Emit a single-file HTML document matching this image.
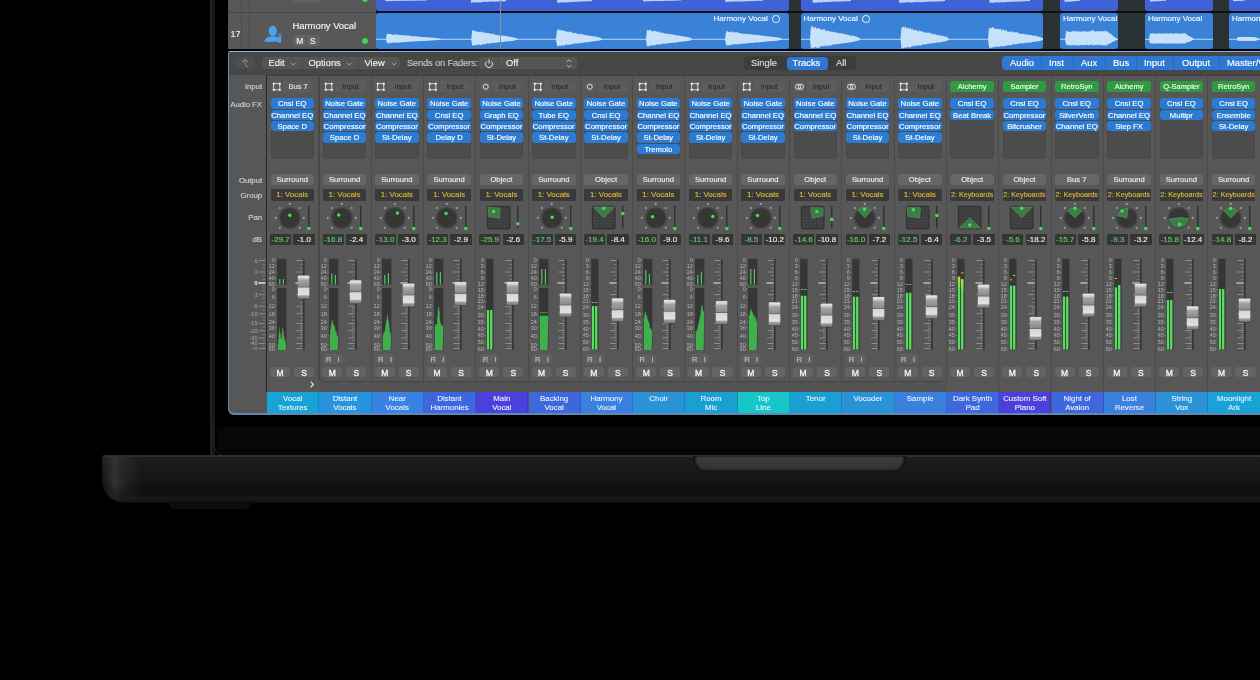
<!DOCTYPE html><html><head><meta charset="utf-8"><style>
html,body{margin:0;padding:0;background:#000;width:1260px;height:680px;overflow:hidden;position:relative;font-family:"Liberation Sans", sans-serif;}
div{box-sizing:border-box;}
.t{position:absolute;color:#fff;white-space:nowrap;line-height:1;-webkit-text-stroke:0.15px currentColor;}
.fx{position:absolute;height:10.3px;background:#2c7bd3;border-radius:3px;color:#fff;font-size:7.7px;line-height:11.6px;text-align:center;white-space:nowrap;overflow:hidden;-webkit-text-stroke:0.15px #fff;}
.btn{position:absolute;background:#5e5e5e;border-radius:3px;color:#f0f0f0;text-align:center;white-space:nowrap;-webkit-text-stroke:0.15px currentColor;}

.wrap{position:absolute;left:0;top:0;width:1260px;height:680px;will-change:transform;overflow:hidden;}</style></head><body><div class="wrap">
<div style="position:absolute;left:210.3px;top:0px;width:5.2px;height:456px;background:linear-gradient(90deg,#262626 0,#222 1px,#1a1a1a 2px,#161616 100%);border-bottom-left-radius:3px;"></div>
<svg style="position:absolute;left:205px;top:420px" width="30" height="40" viewBox="205 420 30 40"><path d="M213.3 420 V438 Q213.6 454 222 455.2" fill="none" stroke="#262626" stroke-width="0.9"/></svg>
<div style="position:absolute;left:217.3px;top:427.3px;width:1043px;height:27.5px;background:#070707;border-bottom-left-radius:8px;"></div>
<div style="position:absolute;left:102px;top:455px;width:1158px;height:48px;background:linear-gradient(180deg,#1a1a1a 0px,#404040 1px,#1d1d1d 2.2px,#1a1a1a 12px,#151515 24px,#0f0f0f 34px,#111111 40px,#181818 43.5px,#131313 46px,#080808 48.5px);border-top-left-radius:3px;border-bottom-left-radius:22px;"></div>
<div style="position:absolute;left:102px;top:456px;width:50px;height:46px;background:linear-gradient(90deg,rgba(40,40,40,0.0) 0px,rgba(52,52,52,0.95) 13px,rgba(44,44,44,0.7) 21px,rgba(30,30,30,0) 40px);border-bottom-left-radius:22px;-webkit-mask-image:linear-gradient(180deg,#000 60%,rgba(0,0,0,0.3) 100%);"></div>
<div style="position:absolute;left:692.5px;top:455.5px;width:213px;height:15.5px;background:linear-gradient(180deg,#464646 0,#3c3c3c 25%,#303030 100%);border-bottom-left-radius:11px;border-bottom-right-radius:11px;box-shadow:inset 2.5px 0 2.5px rgba(0,0,0,0.75),inset -2.5px 0 2.5px rgba(0,0,0,0.75);"></div>
<div style="position:absolute;left:169px;top:503px;width:82px;height:6px;background:#0c0c0c;border-bottom-left-radius:6px;border-bottom-right-radius:6px;"></div>
<div style="position:absolute;left:228px;top:0px;width:1032px;height:50px;background:#000;"></div>
<div style="position:absolute;left:228px;top:0px;width:148px;height:49px;background:#585858;"></div>
<div style="position:absolute;left:228px;top:12px;width:148px;height:1px;background:#474747;"></div>
<div style="position:absolute;left:241px;top:0px;width:1px;height:49px;background:#4c4c4c;"></div>
<div style="position:absolute;left:249px;top:0px;width:1px;height:49px;background:#4c4c4c;"></div>
<div class="t" style="left:230.5px;top:29.5px;font-size:9px;color:#eee;">17</div>
<svg style="position:absolute;left:260px;top:22px" width="25" height="24" viewBox="260 22 25 24"><ellipse cx="272.8" cy="31" rx="4.1" ry="5.4" fill="#48a3f3"/><path d="M264.3 41.8 C264.8 38.3 267.5 36.6 271 36.4 L274.6 36.4 C276.5 36.6 277.8 37.2 278.6 38 L278.6 41.8 Z" fill="#48a3f3"/><rect x="278.4" y="36.2" width="2.8" height="6.8" rx="1.2" fill="#48a3f3"/><circle cx="279.8" cy="35.3" r="1.5" fill="none" stroke="#48a3f3" stroke-width="0.9"/></svg>
<div class="t" style="left:292.5px;top:20.5px;font-size:9.4px;color:#f2f2f2;">Harmony Vocal</div>
<div style="position:absolute;left:293px;top:-8px;width:27px;height:11px;background:#606060;border-radius:3px;"></div>
<div style="position:absolute;left:362px;top:-4.5px;width:6px;height:6px;border-radius:50%;background:#3ed250;"></div>
<div style="position:absolute;left:293px;top:35px;width:27px;height:11px;background:#636363;border-radius:3px;"></div>
<div style="position:absolute;left:306px;top:35px;width:1px;height:11px;background:#565656;"></div>
<div class="t" style="left:296.2px;top:37px;font-size:8.4px;color:#f2f2f2;">M</div>
<div class="t" style="left:310px;top:37px;font-size:8.4px;color:#f2f2f2;">S</div>
<div style="position:absolute;left:362px;top:38px;width:6px;height:6px;border-radius:50%;background:#3ed250;"></div>
<div style="position:absolute;left:376px;top:0px;width:884px;height:49px;background:#2b3234;"></div>
<div style="position:absolute;left:376px;top:0px;width:413px;height:11px;background:#3f62d6;border-radius:0 0 3px 3px;"></div>
<div style="position:absolute;left:376px;top:13.2px;width:413px;height:35.6px;background:#3a82d7;border-radius:3px;"></div>
<div style="position:absolute;left:801px;top:0px;width:242px;height:11px;background:#3f62d6;border-radius:0 0 3px 3px;"></div>
<div style="position:absolute;left:801px;top:13.2px;width:242px;height:35.6px;background:#3a82d7;border-radius:3px;"></div>
<div style="position:absolute;left:1060px;top:0px;width:58px;height:11px;background:#3f62d6;border-radius:0 0 3px 3px;"></div>
<div style="position:absolute;left:1060px;top:13.2px;width:58px;height:35.6px;background:#3a82d7;border-radius:3px;"></div>
<div style="position:absolute;left:1145px;top:0px;width:68px;height:11px;background:#3f62d6;border-radius:0 0 3px 3px;"></div>
<div style="position:absolute;left:1145px;top:13.2px;width:68px;height:35.6px;background:#3a82d7;border-radius:3px;"></div>
<div style="position:absolute;left:1229px;top:0px;width:41px;height:11px;background:#3f62d6;border-radius:0 0 3px 3px;"></div>
<div style="position:absolute;left:1229px;top:13.2px;width:41px;height:35.6px;background:#3a82d7;border-radius:3px;"></div>
<div style="position:absolute;left:376px;top:11px;width:884px;height:2.2px;background:#111;"></div>
<svg style="position:absolute;left:0;top:0" width="1260" height="50"><rect x="376" y="38.8" width="413" height="0.9" fill="#c8e1fb"/><rect x="801" y="38.8" width="242" height="0.9" fill="#c8e1fb"/><rect x="1060" y="38.8" width="58" height="0.9" fill="#c8e1fb"/><rect x="1145" y="38.8" width="68" height="0.9" fill="#c8e1fb"/><rect x="1229" y="38.8" width="41" height="0.9" fill="#c8e1fb"/><polygon points="385.90,39.30 386.40,36.57 386.90,34.15 387.40,33.60 387.90,34.33 388.40,33.49 388.91,33.63 389.41,34.06 389.91,34.36 390.41,33.63 390.91,34.69 391.41,33.70 391.91,34.57 392.41,34.82 392.91,34.42 393.41,34.69 393.91,34.75 394.42,34.72 394.92,34.19 395.42,34.45 395.92,34.13 396.42,35.08 396.92,34.52 397.42,34.35 397.92,34.51 398.42,35.08 398.92,34.56 399.42,34.97 399.93,35.47 400.43,34.79 400.93,35.42 401.43,34.98 401.93,35.32 402.43,35.25 402.93,35.28 403.43,35.35 403.93,35.79 404.43,35.02 404.93,35.57 405.44,35.52 405.94,35.34 406.44,35.31 406.94,35.64 407.44,35.63 407.94,35.92 408.44,35.43 408.94,35.61 409.44,35.57 409.94,35.68 410.44,35.91 410.95,36.32 411.45,35.99 411.95,36.08 412.45,36.22 412.95,36.14 413.45,36.13 413.95,36.57 414.45,36.50 414.95,36.09 415.45,36.17 415.95,36.57 416.46,36.34 416.96,36.79 417.46,36.37 417.96,36.81 418.46,36.70 418.96,36.85 419.46,36.88 419.96,36.61 420.46,36.87 420.96,37.07 421.46,36.89 421.97,37.09 422.47,36.92 422.97,36.91 423.47,37.25 423.97,37.22 424.47,37.25 424.97,37.03 425.47,37.29 425.97,37.06 426.47,37.37 426.97,37.33 427.48,37.40 427.98,37.55 428.48,37.20 428.98,37.52 429.48,37.56 429.98,37.42 430.48,37.66 430.98,37.46 431.48,37.53 431.98,37.66 432.48,37.61 432.99,37.71 433.49,37.86 433.99,37.96 434.49,37.94 434.99,38.08 435.49,38.08 435.99,38.12 436.49,38.02 436.99,38.26 437.49,38.13 437.99,38.35 438.50,38.35 439.00,38.38 439.50,38.49 440.00,38.67 440.50,38.85 441.00,38.99 441.00,39.53 440.50,39.66 440.00,39.80 439.50,39.86 439.00,39.88 438.50,40.01 437.99,39.97 437.49,40.11 436.99,40.07 436.49,40.05 435.99,40.26 435.49,40.22 434.99,40.29 434.49,40.23 433.99,40.37 433.49,40.33 432.99,40.40 432.48,40.55 431.98,40.37 431.48,40.61 430.98,40.40 430.48,40.41 429.98,40.56 429.48,40.74 428.98,40.75 428.48,40.78 427.98,40.64 427.48,40.77 426.97,40.78 426.47,40.83 425.97,40.82 425.47,41.00 424.97,40.88 424.47,40.97 423.97,41.00 423.47,40.78 422.97,41.10 422.47,40.90 421.97,41.19 421.46,40.94 420.96,41.05 420.46,41.11 419.96,41.13 419.46,41.09 418.96,41.22 418.46,41.05 417.96,41.32 417.46,41.18 416.96,41.11 416.46,41.16 415.95,41.54 415.45,41.56 414.95,41.58 414.45,41.51 413.95,41.37 413.45,41.51 412.95,41.62 412.45,41.51 411.95,41.61 411.45,41.49 410.95,41.87 410.44,41.67 409.94,41.75 409.44,41.90 408.94,41.98 408.44,41.55 407.94,41.89 407.44,41.87 406.94,42.19 406.44,41.80 405.94,42.01 405.44,42.31 404.93,41.85 404.43,42.14 403.93,42.24 403.43,41.85 402.93,42.11 402.43,42.39 401.93,42.21 401.43,42.39 400.93,42.35 400.43,42.29 399.93,42.20 399.42,42.47 398.92,42.69 398.42,42.54 397.92,42.64 397.42,42.49 396.92,42.74 396.42,42.49 395.92,42.92 395.42,42.45 394.92,42.77 394.42,42.39 393.91,42.76 393.41,42.62 392.91,42.86 392.41,42.68 391.91,42.87 391.41,42.88 390.91,43.04 390.41,42.65 389.91,43.46 389.41,43.31 388.91,42.73 388.40,43.14 387.90,42.82 387.40,43.52 386.90,42.97 386.40,41.05 385.90,39.30" fill="#c8e1fb"/><polygon points="471.20,39.30 471.70,34.89 472.21,29.84 472.71,30.27 473.22,30.50 473.72,30.64 474.23,31.02 474.73,30.58 475.23,30.27 475.74,31.28 476.24,32.11 476.75,31.44 477.25,31.68 477.76,31.52 478.26,32.11 478.77,32.04 479.27,31.83 479.77,31.65 480.28,31.39 480.78,31.74 481.29,31.79 481.79,32.52 482.30,31.68 482.80,32.09 483.30,32.62 483.81,32.67 484.31,32.74 484.82,33.04 485.32,32.34 485.83,32.90 486.33,32.77 486.83,33.55 487.34,32.98 487.84,32.79 488.35,32.88 488.85,32.91 489.36,33.58 489.86,33.48 490.37,33.98 490.87,33.81 491.37,33.76 491.88,33.61 492.38,33.60 492.89,33.87 493.39,34.06 493.90,34.61 494.40,34.82 494.90,34.08 495.41,34.85 495.91,34.70 496.42,35.17 496.92,35.10 497.43,35.26 497.93,35.39 498.43,35.46 498.94,34.78 499.44,35.44 499.95,35.33 500.45,34.87 500.96,35.78 501.46,35.35 501.97,35.85 502.47,35.99 502.97,35.46 503.48,35.43 503.98,35.54 504.49,35.92 504.99,35.85 505.50,36.34 506.00,35.86 506.50,36.14 507.01,36.27 507.51,36.05 508.02,36.36 508.52,36.81 509.03,36.80 509.53,36.94 510.03,36.98 510.54,36.83 511.04,36.69 511.55,37.14 512.05,37.22 512.56,37.13 513.06,37.19 513.57,37.42 514.07,37.69 514.57,37.64 515.08,37.66 515.58,38.00 516.09,38.11 516.59,38.22 517.10,38.52 517.60,38.79 517.60,39.72 517.10,39.90 516.59,40.07 516.09,40.16 515.58,40.25 515.08,40.36 514.57,40.41 514.07,40.47 513.57,40.69 513.06,40.67 512.56,40.92 512.05,40.92 511.55,40.93 511.04,41.20 510.54,41.27 510.03,41.19 509.53,41.05 509.03,41.06 508.52,41.34 508.02,41.33 507.51,41.31 507.01,41.31 506.50,41.48 506.00,41.40 505.50,41.61 504.99,41.60 504.49,41.60 503.98,41.92 503.48,42.00 502.97,42.05 502.47,41.93 501.97,41.92 501.46,42.22 500.96,42.03 500.45,41.96 499.95,41.94 499.44,42.41 498.94,42.11 498.43,42.23 497.93,42.61 497.43,42.83 496.92,42.69 496.42,42.51 495.91,42.83 495.41,43.02 494.90,42.58 494.40,42.86 493.90,43.19 493.39,42.77 492.89,42.64 492.38,42.81 491.88,43.32 491.37,42.81 490.87,43.62 490.37,43.04 489.86,43.44 489.36,43.43 488.85,43.67 488.35,43.36 487.84,43.37 487.34,43.33 486.83,43.54 486.33,43.76 485.83,44.26 485.32,43.86 484.82,44.36 484.31,44.37 483.81,44.54 483.30,44.18 482.80,44.45 482.30,43.90 481.79,44.88 481.29,44.74 480.78,44.94 480.28,44.88 479.77,44.23 479.27,45.26 478.77,44.30 478.26,44.22 477.76,44.94 477.25,45.43 476.75,44.78 476.24,44.47 475.74,44.84 475.23,45.27 474.73,45.94 474.23,45.21 473.72,44.96 473.22,45.64 472.71,45.30 472.21,45.97 471.70,42.50 471.20,39.30" fill="#c8e1fb"/><polygon points="556.00,39.30 556.50,34.08 557.00,29.35 557.50,30.77 558.00,30.34 558.50,28.92 559.00,29.36 559.50,29.88 560.00,30.00 560.50,30.33 561.00,30.14 561.50,30.08 562.00,31.07 562.50,30.10 563.00,30.48 563.50,30.60 564.00,31.29 564.50,31.30 565.00,30.62 565.50,32.04 566.00,30.69 566.50,31.38 567.00,31.68 567.50,32.04 568.00,31.75 568.50,31.69 569.00,31.51 569.50,31.91 570.00,31.71 570.50,31.74 571.00,32.14 571.50,32.06 572.00,32.96 572.50,32.22 573.00,33.42 573.50,33.05 574.00,33.30 574.50,32.59 575.00,33.04 575.50,32.99 576.00,32.87 576.50,33.45 577.00,33.79 577.50,33.51 578.00,34.10 578.50,33.67 579.00,34.44 579.50,34.20 580.00,33.60 580.50,34.20 581.00,34.07 581.50,34.25 582.00,33.92 582.50,34.56 583.00,34.85 583.50,34.16 584.00,34.69 584.50,34.90 585.00,35.37 585.50,34.86 586.00,34.95 586.50,34.98 587.00,35.04 587.50,35.73 588.00,35.24 588.50,35.69 589.00,35.48 589.50,35.75 590.00,35.83 590.50,35.96 591.00,35.68 591.50,35.92 592.00,36.19 592.50,35.93 593.00,36.44 593.50,36.18 594.00,36.52 594.50,36.29 595.00,36.37 595.50,36.77 596.00,36.56 596.50,37.02 597.00,36.96 597.50,36.93 598.00,37.34 598.50,37.18 599.00,37.31 599.50,37.72 600.00,37.63 600.50,37.95 601.00,38.14 601.50,38.32 602.00,38.77 602.00,39.77 601.50,39.89 601.00,40.13 600.50,40.29 600.00,40.37 599.50,40.48 599.00,40.59 598.50,40.78 598.00,40.74 597.50,41.02 597.00,40.86 596.50,40.90 596.00,41.10 595.50,41.25 595.00,41.11 594.50,41.29 594.00,41.31 593.50,41.26 593.00,41.48 592.50,41.44 592.00,41.49 591.50,41.82 591.00,41.50 590.50,41.75 590.00,41.93 589.50,41.83 589.00,41.89 588.50,42.03 588.00,42.40 587.50,41.89 587.00,42.39 586.50,42.19 586.00,42.33 585.50,42.10 585.00,42.55 584.50,42.58 584.00,42.23 583.50,42.66 583.00,42.56 582.50,42.94 582.00,42.83 581.50,42.98 581.00,43.02 580.50,43.02 580.00,42.97 579.50,43.52 579.00,43.51 578.50,42.95 578.00,43.23 577.50,42.95 577.00,43.05 576.50,43.97 576.00,44.03 575.50,43.47 575.00,43.25 574.50,43.31 574.00,44.10 573.50,43.54 573.00,44.27 572.50,44.54 572.00,43.63 571.50,44.24 571.00,43.91 570.50,44.37 570.00,44.88 569.50,44.04 569.00,45.06 568.50,45.07 568.00,45.11 567.50,44.81 567.00,44.64 566.50,44.60 566.00,44.84 565.50,44.63 565.00,44.55 564.50,45.70 564.00,45.60 563.50,45.84 563.00,45.86 562.50,45.39 562.00,44.86 561.50,45.70 561.00,45.04 560.50,46.07 560.00,46.34 559.50,45.37 559.00,45.92 558.50,45.99 558.00,45.71 557.50,46.71 557.00,45.60 556.50,43.26 556.00,39.30" fill="#c8e1fb"/><polygon points="646.00,39.30 646.50,33.41 647.00,29.60 647.50,30.40 648.00,29.57 648.50,30.79 649.00,30.90 649.50,29.77 650.00,29.30 650.50,30.07 651.00,31.15 651.50,30.53 652.00,31.28 652.50,31.68 653.00,31.00 653.50,30.96 654.00,31.10 654.50,31.27 655.00,30.41 655.50,30.80 656.00,31.82 656.50,31.96 657.00,31.24 657.50,31.21 658.00,31.14 658.50,32.80 659.00,31.42 659.50,31.42 660.00,32.94 660.50,31.94 661.00,33.09 661.50,31.86 662.00,33.21 662.50,33.32 663.00,32.40 663.50,32.84 664.00,33.44 664.50,33.61 665.00,33.71 665.50,33.67 666.00,32.75 666.50,33.71 667.00,33.92 667.50,33.19 668.00,34.22 668.50,34.16 669.00,33.57 669.50,34.22 670.00,34.54 670.50,34.44 671.00,34.38 671.50,33.81 672.00,34.32 672.50,34.83 673.00,34.14 673.50,34.91 674.00,34.49 674.50,35.12 675.00,34.53 675.50,35.06 676.00,35.50 676.50,35.39 677.00,35.45 677.50,35.23 678.00,35.67 678.50,35.84 679.00,35.51 679.50,35.55 680.00,35.39 680.50,36.18 681.00,35.93 681.50,36.21 682.00,36.01 682.50,36.24 683.00,35.90 683.50,36.19 684.00,36.64 684.50,36.79 685.00,36.46 685.50,36.96 686.00,36.79 686.50,36.97 687.00,37.20 687.50,36.97 688.00,37.08 688.50,37.18 689.00,37.50 689.50,37.42 690.00,37.76 690.50,37.79 691.00,38.09 691.50,38.39 692.00,38.76 692.00,39.74 691.50,39.96 691.00,40.13 690.50,40.32 690.00,40.50 689.50,40.64 689.00,40.69 688.50,40.86 688.00,40.88 687.50,41.04 687.00,40.99 686.50,41.24 686.00,41.21 685.50,41.24 685.00,41.46 684.50,41.50 684.00,41.17 683.50,41.49 683.00,41.59 682.50,41.77 682.00,41.44 681.50,41.63 681.00,41.52 680.50,41.69 680.00,41.71 679.50,41.81 679.00,42.21 678.50,41.89 678.00,42.25 677.50,42.04 677.00,42.44 676.50,42.43 676.00,42.66 675.50,42.13 675.00,42.54 674.50,42.85 674.00,42.91 673.50,42.42 673.00,42.95 672.50,42.50 672.00,43.11 671.50,42.87 671.00,42.91 670.50,43.09 670.00,43.14 669.50,42.77 669.00,43.04 668.50,43.04 668.00,43.75 667.50,43.51 667.00,43.34 666.50,43.87 666.00,43.86 665.50,43.41 665.00,43.62 664.50,43.90 664.00,44.06 663.50,43.84 663.00,43.62 662.50,43.56 662.00,43.82 661.50,44.44 661.00,44.04 660.50,44.04 660.00,44.51 659.50,44.31 659.00,44.46 658.50,44.23 658.00,45.05 657.50,44.57 657.00,44.65 656.50,44.32 656.00,44.58 655.50,45.25 655.00,45.70 654.50,44.85 654.00,45.42 653.50,45.47 653.00,45.81 652.50,45.38 652.00,45.15 651.50,44.96 651.00,44.97 650.50,45.89 650.00,46.48 649.50,45.21 649.00,46.42 648.50,45.74 648.00,46.56 647.50,46.21 647.00,46.40 646.50,43.14 646.00,39.30" fill="#c8e1fb"/><polygon points="725.00,39.30 725.50,35.41 726.00,32.62 726.50,31.40 727.00,30.71 727.50,31.03 728.00,31.85 728.50,31.88 729.00,32.14 729.50,32.18 730.00,31.79 730.50,30.99 731.00,32.40 731.50,31.71 732.00,30.99 732.50,32.51 733.00,32.54 733.50,31.82 734.00,31.77 734.50,32.68 735.00,32.38 735.50,32.15 736.00,32.55 736.50,32.09 737.00,31.79 737.50,32.79 738.00,32.36 738.50,33.28 739.00,32.98 739.50,32.41 740.00,33.59 740.50,33.08 741.00,33.44 741.50,33.27 742.00,33.72 742.50,33.68 743.00,33.93 743.50,33.59 744.00,34.03 744.50,33.89 745.00,33.61 745.50,33.66 746.00,34.12 746.50,33.94 747.00,33.53 747.50,34.49 748.00,33.64 748.50,34.32 749.00,34.62 749.50,33.59 750.00,34.20 750.50,34.47 751.00,33.96 751.50,34.68 752.00,34.47 752.50,34.76 753.00,34.16 753.50,34.85 754.00,34.92 754.50,34.74 755.00,34.61 755.50,35.08 756.00,34.75 756.50,35.34 757.00,35.12 757.50,35.16 758.00,35.11 758.50,34.84 759.00,35.05 759.50,35.26 760.00,35.14 760.50,35.58 761.00,35.31 761.50,35.97 762.00,35.29 762.50,35.36 763.00,35.71 763.50,35.89 764.00,35.96 764.50,35.58 765.00,35.93 765.50,36.30 766.00,35.94 766.50,36.32 767.00,36.32 767.50,36.50 768.00,36.44 768.50,36.20 769.00,36.15 769.50,36.78 770.00,36.58 770.50,36.51 771.00,36.82 771.50,36.47 772.00,36.87 772.50,37.01 773.00,37.06 773.50,36.98 774.00,37.21 774.50,37.06 775.00,37.30 775.50,37.09 776.00,37.44 776.50,37.29 777.00,37.41 777.50,37.37 778.00,37.58 778.50,37.65 779.00,37.83 779.50,38.00 780.00,38.13 780.50,38.26 781.00,38.30 781.50,38.52 782.00,38.80 782.00,39.70 781.50,39.82 781.00,39.94 780.50,40.01 780.00,40.20 779.50,40.20 779.00,40.32 778.50,40.38 778.00,40.45 777.50,40.57 777.00,40.66 776.50,40.64 776.00,40.74 775.50,40.89 775.00,40.81 774.50,41.00 774.00,40.91 773.50,41.05 773.00,41.18 772.50,41.04 772.00,41.02 771.50,40.95 771.00,41.12 770.50,41.17 770.00,41.14 769.50,41.32 769.00,41.31 768.50,41.49 768.00,41.55 767.50,41.29 767.00,41.63 766.50,41.53 766.00,41.56 765.50,41.68 765.00,41.77 764.50,41.84 764.00,41.68 763.50,41.60 763.00,42.03 762.50,42.14 762.00,42.12 761.50,42.11 761.00,42.07 760.50,41.99 760.00,42.16 759.50,42.41 759.00,42.14 758.50,42.54 758.00,42.36 757.50,42.64 757.00,42.19 756.50,42.67 756.00,42.58 755.50,42.32 755.00,42.33 754.50,42.72 754.00,42.95 753.50,42.94 753.00,42.45 752.50,43.09 752.00,42.89 751.50,42.86 751.00,42.99 750.50,43.15 750.00,42.58 749.50,43.42 749.00,43.16 748.50,42.69 748.00,43.01 747.50,42.99 747.00,43.60 746.50,43.01 746.00,43.71 745.50,43.79 745.00,43.84 744.50,43.27 744.00,43.48 743.50,43.69 743.00,43.39 742.50,43.84 742.00,43.75 741.50,44.02 741.00,43.73 740.50,43.87 740.00,44.22 739.50,43.94 739.00,44.00 738.50,43.76 738.00,44.28 737.50,43.99 737.00,44.37 736.50,44.75 736.00,43.77 735.50,44.32 735.00,44.30 734.50,44.80 734.00,43.98 733.50,44.15 733.00,44.38 732.50,44.56 732.00,45.24 731.50,44.26 731.00,45.31 730.50,44.26 730.00,44.79 729.50,45.20 729.00,45.42 728.50,45.59 728.00,45.05 727.50,45.39 727.00,45.37 726.50,45.70 726.00,44.55 725.50,41.79 725.00,39.30" fill="#c8e1fb"/><polygon points="810.00,39.30 810.50,32.35 811.00,25.84 811.50,27.97 812.00,25.55 812.50,25.81 813.00,27.13 813.50,27.06 814.00,28.60 814.50,28.01 815.00,26.87 815.50,26.92 816.00,27.52 816.50,29.20 817.00,28.79 817.50,27.00 818.00,28.83 818.50,28.34 819.00,29.27 819.50,28.23 820.00,27.89 820.50,29.25 821.00,29.85 821.50,29.61 822.00,30.39 822.50,29.76 823.00,28.83 823.50,30.03 824.00,29.32 824.50,28.88 825.00,29.47 825.50,31.09 826.00,30.49 826.50,31.31 827.00,31.07 827.50,31.14 828.00,29.84 828.50,31.07 829.00,30.84 829.50,31.72 830.00,30.57 830.50,32.05 831.00,32.05 831.50,31.24 832.00,31.82 832.50,31.57 833.00,32.06 833.50,32.56 834.00,31.66 834.50,32.61 835.00,31.40 835.50,32.42 836.00,32.24 836.50,32.55 837.00,33.25 837.50,33.38 838.00,32.30 838.50,32.56 839.00,32.81 839.50,33.64 840.00,33.67 840.50,33.57 841.00,32.74 841.50,32.88 842.00,33.61 842.50,33.72 843.00,33.91 843.50,34.04 844.00,33.45 844.50,34.09 845.00,34.66 845.50,33.98 846.00,34.54 846.50,34.20 847.00,34.42 847.50,34.83 848.00,35.01 848.50,34.63 849.00,35.20 849.50,34.96 850.00,35.65 850.50,35.53 851.00,35.45 851.50,35.40 852.00,35.76 852.50,35.56 853.00,35.97 853.50,35.70 854.00,35.76 854.50,36.21 855.00,36.57 855.50,36.21 856.00,36.51 856.50,36.64 857.00,36.79 857.50,37.03 858.00,37.25 858.50,37.47 859.00,37.95 859.50,38.18 860.00,38.57 860.00,39.89 859.50,40.15 859.00,40.30 858.50,40.64 858.00,40.83 857.50,40.85 857.00,41.03 856.50,40.99 856.00,41.32 855.50,41.32 855.00,41.58 854.50,41.53 854.00,41.84 853.50,41.79 853.00,41.97 852.50,42.05 852.00,42.02 851.50,42.20 851.00,42.29 850.50,42.28 850.00,42.28 849.50,42.38 849.00,42.70 848.50,42.61 848.00,42.53 847.50,42.77 847.00,42.88 846.50,42.91 846.00,43.06 845.50,43.20 845.00,42.79 844.50,42.91 844.00,43.23 843.50,43.61 843.00,42.95 842.50,43.15 842.00,43.62 841.50,43.44 841.00,43.88 840.50,43.58 840.00,44.03 839.50,43.70 839.00,44.13 838.50,44.37 838.00,43.60 837.50,44.05 837.00,44.58 836.50,44.12 836.00,44.64 835.50,44.06 835.00,44.47 834.50,43.98 834.00,45.16 833.50,44.24 833.00,44.34 832.50,44.58 832.00,45.41 831.50,45.49 831.00,44.84 830.50,45.70 830.00,45.67 829.50,45.61 829.00,45.73 828.50,45.24 828.00,46.13 827.50,45.95 827.00,46.32 826.50,45.11 826.00,45.96 825.50,46.35 825.00,46.52 824.50,45.37 824.00,45.50 823.50,46.23 823.00,46.31 822.50,46.12 822.00,46.80 821.50,46.76 821.00,45.97 820.50,46.21 820.00,46.52 819.50,47.74 819.00,47.79 818.50,47.43 818.00,48.02 817.50,47.96 817.00,46.88 816.50,48.15 816.00,46.88 815.50,46.99 815.00,47.11 814.50,48.50 814.00,47.39 813.50,48.17 813.00,47.63 812.50,47.45 812.00,48.50 811.50,48.34 811.00,48.50 810.50,44.46 810.00,39.30" fill="#c8e1fb"/><polygon points="900.50,39.30 901.00,32.60 901.50,27.94 902.00,26.75 902.50,27.15 903.00,27.56 903.50,26.44 904.00,27.10 904.50,28.15 905.00,26.67 905.50,26.81 906.00,26.85 906.50,28.90 907.00,27.23 907.50,29.13 908.00,27.92 908.50,27.28 909.00,29.22 909.50,28.96 910.00,27.80 910.50,28.55 911.00,28.31 911.50,30.19 912.00,29.02 912.50,29.18 913.00,28.67 913.50,30.44 914.00,30.14 914.50,29.89 915.00,30.58 915.50,29.69 916.00,29.65 916.50,30.66 917.00,30.21 917.50,30.80 918.00,31.39 918.50,31.63 919.00,30.44 919.50,30.13 920.00,30.26 920.50,30.94 921.00,31.45 921.50,30.95 922.00,31.63 922.50,31.84 923.00,31.38 923.50,31.92 924.00,32.54 924.50,32.72 925.00,32.45 925.50,32.41 926.00,32.81 926.50,31.98 927.00,33.00 927.50,32.79 928.00,33.04 928.50,32.54 929.00,32.85 929.50,32.60 930.00,33.14 930.50,33.52 931.00,33.11 931.50,33.85 932.00,33.75 932.50,34.37 933.00,34.36 933.50,34.16 934.00,33.69 934.50,34.55 935.00,34.18 935.50,34.10 936.00,34.52 936.50,35.03 937.00,35.08 937.50,34.72 938.00,34.80 938.50,35.41 939.00,35.18 939.50,35.13 940.00,35.68 940.50,35.82 941.00,35.24 941.50,35.38 942.00,35.66 942.50,36.20 943.00,35.76 943.50,35.99 944.00,36.46 944.50,36.72 945.00,36.30 945.50,36.49 946.00,36.71 946.50,36.85 947.00,37.09 947.50,37.67 948.00,37.73 948.50,38.27 949.00,38.54 949.00,39.81 948.50,40.07 948.00,40.41 947.50,40.69 947.00,40.61 946.50,40.87 946.00,40.94 945.50,40.97 945.00,41.16 944.50,41.49 944.00,41.56 943.50,41.52 943.00,41.61 942.50,41.97 942.00,41.97 941.50,41.87 941.00,42.22 940.50,42.13 940.00,42.35 939.50,42.35 939.00,42.56 938.50,42.47 938.00,42.17 937.50,42.27 937.00,42.69 936.50,42.57 936.00,42.72 935.50,43.07 935.00,42.83 934.50,43.33 934.00,42.68 933.50,43.49 933.00,43.38 932.50,43.51 932.00,42.94 931.50,42.96 931.00,43.89 930.50,43.55 930.00,43.46 929.50,43.59 929.00,44.25 928.50,43.68 928.00,43.73 927.50,43.64 927.00,44.06 926.50,44.28 926.00,44.14 925.50,44.79 925.00,44.12 924.50,44.57 924.00,43.99 923.50,44.96 923.00,44.42 922.50,44.28 922.00,45.12 921.50,44.96 921.00,45.44 920.50,45.60 920.00,45.70 919.50,44.93 919.00,45.21 918.50,45.32 918.00,46.20 917.50,45.44 917.00,45.40 916.50,46.34 916.00,45.14 915.50,45.21 915.00,46.56 914.50,45.55 914.00,45.72 913.50,46.52 913.00,46.40 912.50,45.80 912.00,46.22 911.50,46.40 911.00,47.50 910.50,47.13 910.00,46.92 909.50,47.72 909.00,47.34 908.50,47.32 908.00,46.89 907.50,46.81 907.00,47.34 906.50,48.09 906.00,47.33 905.50,48.07 905.00,47.37 904.50,48.02 904.00,48.36 903.50,47.94 903.00,48.50 902.50,48.50 902.00,48.50 901.50,48.50 901.00,43.89 900.50,39.30" fill="#c8e1fb"/><polygon points="988.00,39.30 988.50,33.38 989.00,27.75 989.50,28.25 990.00,28.41 990.50,28.43 991.00,27.60 991.50,28.50 992.00,27.30 992.50,27.54 993.00,26.64 993.50,27.06 994.00,28.96 994.50,28.66 995.00,29.08 995.50,28.07 996.00,28.41 996.50,29.67 997.00,28.31 997.50,29.28 998.00,29.06 998.50,28.39 999.00,29.74 999.50,29.22 1000.00,28.87 1000.50,28.44 1001.00,29.77 1001.50,30.44 1002.00,30.77 1002.50,29.35 1003.00,29.23 1003.50,29.71 1004.00,30.05 1004.50,29.63 1005.00,30.46 1005.50,31.37 1006.00,30.32 1006.50,30.09 1007.00,31.02 1007.50,31.80 1008.00,31.61 1008.50,31.90 1009.00,31.86 1009.50,31.49 1010.00,32.13 1010.50,31.40 1011.00,31.03 1011.50,32.05 1012.00,32.01 1012.50,31.11 1013.00,32.49 1013.50,32.48 1014.00,32.00 1014.50,33.01 1015.00,32.53 1015.50,31.73 1016.00,32.49 1016.50,32.34 1017.00,32.11 1017.50,32.24 1018.00,33.03 1018.50,33.52 1019.00,33.66 1019.50,33.54 1020.00,33.45 1020.50,33.98 1021.00,33.93 1021.50,34.11 1022.00,33.44 1022.50,33.98 1023.00,33.93 1023.50,33.42 1024.00,33.97 1024.50,34.51 1025.00,34.29 1025.50,33.82 1026.00,34.81 1026.50,34.34 1027.00,34.41 1027.50,34.51 1028.00,34.26 1028.50,34.96 1029.00,35.14 1029.50,34.86 1030.00,35.15 1030.50,34.78 1031.00,34.84 1031.50,34.97 1032.00,35.59 1032.50,35.56 1033.00,35.93 1033.50,35.82 1034.00,35.36 1034.50,35.48 1035.00,35.58 1035.50,36.22 1036.00,36.34 1036.50,36.14 1037.00,36.11 1037.50,36.35 1038.00,36.82 1038.50,36.45 1039.00,36.68 1039.50,37.12 1040.00,37.19 1040.50,37.05 1041.00,37.49 1041.50,37.57 1042.00,38.02 1042.50,38.15 1043.00,38.60 1043.00,39.88 1042.50,40.11 1042.00,40.23 1041.50,40.40 1041.00,40.77 1040.50,40.73 1040.00,40.99 1039.50,41.09 1039.00,41.08 1038.50,41.30 1038.00,41.34 1037.50,41.49 1037.00,41.42 1036.50,41.71 1036.00,41.44 1035.50,41.52 1035.00,41.66 1034.50,42.08 1034.00,41.85 1033.50,42.06 1033.00,41.88 1032.50,41.79 1032.00,42.16 1031.50,42.37 1031.00,42.48 1030.50,42.67 1030.00,42.22 1029.50,42.67 1029.00,42.73 1028.50,42.50 1028.00,42.81 1027.50,43.09 1027.00,42.42 1026.50,42.57 1026.00,43.27 1025.50,42.70 1025.00,42.84 1024.50,42.77 1024.00,43.15 1023.50,43.66 1023.00,42.96 1022.50,43.22 1022.00,43.09 1021.50,43.83 1021.00,43.41 1020.50,43.27 1020.00,43.24 1019.50,43.40 1019.00,43.37 1018.50,44.00 1018.00,43.82 1017.50,44.30 1017.00,44.35 1016.50,43.64 1016.00,44.32 1015.50,44.46 1015.00,44.39 1014.50,44.29 1014.00,44.18 1013.50,44.50 1013.00,44.27 1012.50,44.24 1012.00,45.18 1011.50,44.69 1011.00,45.31 1010.50,45.41 1010.00,44.93 1009.50,45.54 1009.00,44.81 1008.50,45.56 1008.00,44.77 1007.50,45.29 1007.00,45.64 1006.50,45.19 1006.00,46.24 1005.50,45.91 1005.00,45.94 1004.50,46.41 1004.00,45.78 1003.50,46.06 1003.00,45.72 1002.50,46.18 1002.00,46.40 1001.50,46.20 1001.00,46.69 1000.50,45.77 1000.00,46.11 999.50,47.12 999.00,46.72 998.50,47.00 998.00,46.42 997.50,46.97 997.00,46.78 996.50,46.48 996.00,46.31 995.50,46.92 995.00,47.36 994.50,47.86 994.00,46.69 993.50,47.08 993.00,46.71 992.50,47.43 992.00,48.50 991.50,47.26 991.00,48.49 990.50,47.17 990.00,47.91 989.50,48.13 989.00,47.30 988.50,43.03 988.00,39.30" fill="#c8e1fb"/><polygon points="1065.00,39.30 1065.50,35.73 1066.00,32.23 1066.50,30.30 1067.00,30.94 1067.50,31.28 1068.00,31.75 1068.50,31.94 1069.00,32.06 1069.50,31.37 1070.00,31.42 1070.50,31.63 1071.00,31.99 1071.50,31.42 1072.00,31.49 1072.50,31.20 1073.00,30.48 1073.50,31.84 1074.00,30.40 1074.50,31.75 1075.00,31.06 1075.50,30.51 1076.00,31.46 1076.50,31.86 1077.00,31.92 1077.50,30.84 1078.00,30.58 1078.50,31.74 1079.00,31.15 1079.50,31.97 1080.00,31.19 1080.50,31.70 1081.00,32.08 1081.50,31.62 1082.00,31.42 1082.50,30.50 1083.00,31.39 1083.50,30.91 1084.00,31.74 1084.50,31.56 1085.00,30.72 1085.50,31.79 1086.00,31.68 1086.50,31.30 1087.00,31.04 1087.50,31.93 1088.00,31.91 1088.50,31.45 1089.00,31.19 1089.50,30.34 1090.00,32.07 1090.50,31.40 1091.00,30.76 1091.50,30.36 1092.00,30.60 1092.50,30.52 1093.00,30.36 1093.50,30.32 1094.00,31.78 1094.50,31.31 1095.00,31.01 1095.50,31.25 1096.00,31.88 1096.50,31.29 1097.00,31.31 1097.50,30.81 1098.00,31.39 1098.50,31.69 1099.00,31.30 1099.50,30.79 1100.00,31.00 1100.50,31.44 1101.00,31.93 1101.50,30.74 1102.00,30.83 1102.50,31.69 1103.00,30.76 1103.50,32.09 1104.00,30.46 1104.50,30.43 1105.00,31.70 1105.50,31.11 1106.00,31.44 1106.50,30.57 1107.00,31.27 1107.50,31.38 1108.00,31.66 1108.50,32.76 1109.00,32.43 1109.50,33.56 1110.00,33.20 1110.50,33.48 1111.00,34.00 1111.50,34.85 1112.00,35.08 1112.50,35.14 1113.00,36.12 1113.50,36.30 1114.00,36.74 1114.50,36.98 1115.00,37.08 1115.50,37.66 1116.00,37.96 1116.50,38.19 1117.00,38.62 1117.00,39.74 1116.50,40.07 1116.00,40.25 1115.50,40.65 1115.00,40.80 1114.50,40.98 1114.00,41.46 1113.50,41.53 1113.00,41.96 1112.50,41.94 1112.00,42.37 1111.50,42.55 1111.00,42.95 1110.50,43.31 1110.00,43.54 1109.50,43.74 1109.00,43.70 1108.50,44.65 1108.00,44.06 1107.50,44.42 1107.00,45.50 1106.50,45.15 1106.00,45.70 1105.50,45.75 1105.00,44.87 1104.50,45.76 1104.00,45.45 1103.50,45.28 1103.00,45.32 1102.50,45.17 1102.00,44.74 1101.50,45.14 1101.00,45.74 1100.50,45.04 1100.00,44.51 1099.50,45.40 1099.00,44.62 1098.50,44.74 1098.00,44.95 1097.50,45.09 1097.00,45.42 1096.50,44.65 1096.00,45.24 1095.50,44.68 1095.00,45.13 1094.50,44.59 1094.00,45.74 1093.50,45.24 1093.00,45.47 1092.50,44.53 1092.00,44.76 1091.50,44.49 1091.00,44.94 1090.50,45.23 1090.00,44.67 1089.50,44.57 1089.00,45.40 1088.50,45.53 1088.00,45.16 1087.50,44.59 1087.00,44.86 1086.50,45.03 1086.00,45.02 1085.50,45.05 1085.00,44.93 1084.50,44.50 1084.00,45.48 1083.50,45.75 1083.00,44.70 1082.50,44.71 1082.00,45.57 1081.50,45.03 1081.00,44.93 1080.50,44.80 1080.00,45.39 1079.50,45.65 1079.00,45.14 1078.50,44.68 1078.00,45.14 1077.50,45.72 1077.00,45.38 1076.50,45.47 1076.00,45.62 1075.50,44.85 1075.00,45.43 1074.50,45.71 1074.00,45.12 1073.50,44.57 1073.00,45.24 1072.50,45.33 1072.00,45.38 1071.50,45.34 1071.00,45.29 1070.50,45.77 1070.00,44.63 1069.50,45.65 1069.00,44.83 1068.50,44.79 1068.00,45.56 1067.50,45.13 1067.00,45.08 1066.50,44.76 1066.00,44.59 1065.50,42.23 1065.00,39.30" fill="#c8e1fb"/><polygon points="1149.00,39.30 1149.50,36.31 1150.00,34.09 1150.50,32.93 1151.00,33.38 1151.50,34.05 1152.00,33.19 1152.50,33.16 1153.00,33.79 1153.50,33.44 1154.00,33.33 1154.50,33.60 1155.00,33.97 1155.50,33.22 1156.00,33.55 1156.50,33.75 1157.00,33.73 1157.50,33.84 1158.00,32.96 1158.50,33.61 1159.00,34.07 1159.50,32.92 1160.00,33.32 1160.50,33.35 1161.00,33.84 1161.50,33.99 1162.00,34.08 1162.50,33.45 1163.00,33.55 1163.50,33.27 1164.00,33.35 1164.50,33.31 1165.00,34.03 1165.50,33.31 1166.00,33.75 1166.50,32.80 1167.00,33.18 1167.50,33.79 1168.00,34.04 1168.50,33.22 1169.00,33.09 1169.50,33.65 1170.00,33.34 1170.50,33.58 1171.00,33.35 1171.50,33.06 1172.00,33.54 1172.50,33.52 1173.00,33.98 1173.50,33.97 1174.00,34.07 1174.50,33.05 1175.00,33.18 1175.50,33.14 1176.00,33.80 1176.50,33.58 1177.00,32.98 1177.50,33.23 1178.00,33.00 1178.50,34.03 1179.00,33.88 1179.50,32.82 1180.00,34.08 1180.50,33.83 1181.00,33.30 1181.50,33.64 1182.00,33.37 1182.50,33.99 1183.00,33.20 1183.50,33.51 1184.00,33.11 1184.50,32.95 1185.00,33.17 1185.50,33.28 1186.00,34.52 1186.50,34.32 1187.00,34.51 1187.50,34.67 1188.00,35.68 1188.50,35.58 1189.00,35.93 1189.50,36.15 1190.00,36.42 1190.50,37.01 1191.00,36.84 1191.50,37.33 1192.00,37.48 1192.50,37.89 1193.00,38.28 1193.50,38.50 1194.00,38.81 1194.00,39.63 1193.50,39.80 1193.00,40.11 1192.50,40.29 1192.00,40.38 1191.50,40.73 1191.00,40.94 1190.50,41.35 1190.00,41.56 1189.50,41.80 1189.00,41.61 1188.50,42.04 1188.00,42.01 1187.50,42.24 1187.00,42.34 1186.50,42.61 1186.00,42.70 1185.50,43.29 1185.00,43.77 1184.50,43.20 1184.00,43.40 1183.50,43.70 1183.00,43.11 1182.50,43.56 1182.00,43.17 1181.50,43.18 1181.00,43.95 1180.50,43.41 1180.00,43.10 1179.50,43.61 1179.00,43.93 1178.50,43.96 1178.00,43.29 1177.50,43.20 1177.00,43.39 1176.50,43.39 1176.00,43.95 1175.50,43.44 1175.00,43.28 1174.50,43.51 1174.00,43.77 1173.50,43.78 1173.00,43.63 1172.50,43.35 1172.00,43.24 1171.50,43.35 1171.00,43.06 1170.50,43.97 1170.00,43.47 1169.50,43.85 1169.00,43.13 1168.50,43.60 1168.00,43.39 1167.50,43.62 1167.00,43.93 1166.50,43.16 1166.00,43.98 1165.50,43.18 1165.00,43.56 1164.50,43.94 1164.00,43.21 1163.50,43.13 1163.00,43.42 1162.50,43.91 1162.00,43.12 1161.50,43.55 1161.00,43.05 1160.50,43.88 1160.00,43.16 1159.50,43.15 1159.00,43.44 1158.50,43.50 1158.00,43.10 1157.50,43.87 1157.00,43.80 1156.50,43.24 1156.00,43.13 1155.50,43.72 1155.00,43.32 1154.50,43.74 1154.00,43.77 1153.50,43.91 1153.00,43.15 1152.50,43.19 1152.00,43.47 1151.50,43.40 1151.00,43.62 1150.50,43.12 1150.00,43.51 1149.50,41.83 1149.00,39.30" fill="#c8e1fb"/><polygon points="1237.00,39.30 1237.50,37.01 1238.00,36.89 1238.50,36.97 1239.00,37.04 1239.50,37.18 1240.00,36.80 1240.50,36.87 1241.00,37.11 1241.50,36.96 1242.00,36.96 1242.50,37.23 1243.00,36.81 1243.50,36.99 1244.00,37.30 1244.50,36.83 1245.00,37.12 1245.50,37.14 1246.00,37.08 1246.50,37.01 1247.00,37.22 1247.50,37.09 1248.00,37.05 1248.50,36.97 1249.00,36.87 1249.50,37.02 1250.00,37.00 1250.50,36.91 1251.00,37.22 1251.50,36.83 1252.00,37.09 1252.50,37.16 1253.00,37.21 1253.50,37.07 1254.00,36.98 1254.50,36.91 1255.00,37.13 1255.50,37.34 1256.00,37.39 1256.50,37.71 1257.00,37.74 1257.50,37.89 1258.00,38.28 1258.50,38.37 1259.00,38.66 1259.50,38.90 1260.00,39.12 1260.00,39.43 1259.50,39.59 1259.00,39.71 1258.50,39.92 1258.00,40.08 1257.50,40.28 1257.00,40.37 1256.50,40.55 1256.00,40.67 1255.50,40.96 1255.00,40.90 1254.50,40.91 1254.00,41.04 1253.50,40.80 1253.00,40.78 1252.50,40.96 1252.00,40.83 1251.50,40.90 1251.00,41.03 1250.50,40.77 1250.00,40.78 1249.50,40.87 1249.00,40.79 1248.50,40.93 1248.00,41.03 1247.50,40.75 1247.00,40.82 1246.50,41.04 1246.00,40.76 1245.50,40.94 1245.00,41.06 1244.50,40.85 1244.00,40.79 1243.50,40.76 1243.00,41.09 1242.50,41.02 1242.00,40.98 1241.50,40.90 1241.00,40.84 1240.50,40.96 1240.00,40.76 1239.50,41.08 1239.00,40.86 1238.50,40.80 1238.00,41.04 1237.50,40.81 1237.00,39.30" fill="#c8e1fb"/><polygon points="385.5,0.00 385.5,1.27 386.2,1.22 386.8,1.04 387.5,1.00 388.2,1.22 388.8,0.94 389.5,1.00 390.2,1.14 390.9,1.03 391.5,0.88 392.2,0.91 392.9,1.10 393.5,0.95 394.2,0.82 394.9,0.79 395.5,1.01 396.2,0.91 396.9,0.85 397.5,0.80 398.2,0.97 398.9,0.76 399.6,0.95 400.2,0.76 400.9,0.71 401.6,0.73 402.2,0.72 402.9,0.76 403.6,0.72 404.2,0.91 404.9,0.72 405.6,0.79 406.2,0.69 406.9,0.89 407.6,0.69 408.3,0.75 408.9,0.84 409.6,0.74 410.3,0.72 410.9,0.60 411.6,0.69 412.3,0.63 412.9,0.65 413.6,0.68 414.3,0.67 415.0,0.66 415.6,0.60 416.3,0.59 417.0,0.70 417.6,0.63 418.3,0.62 419.0,0.54 419.6,0.57 420.3,0.60 421.0,0.63 421.6,0.58 422.3,0.52 423.0,0.44 423.7,0.53 424.3,0.49 425.0,0.49 425.7,0.42 426.3,0.52 427.0,0.43 427.0,0.00" fill="#c8e1fb" opacity="0.9"/><polygon points="471.0,0.00 471.0,3.18 471.7,3.10 472.3,2.25 473.0,2.44 473.7,2.56 474.4,2.40 475.0,2.30 475.7,2.38 476.4,2.10 477.1,2.46 477.7,2.53 478.4,2.74 479.1,2.16 479.8,2.47 480.4,2.53 481.1,2.58 481.8,2.14 482.4,1.97 483.1,2.05 483.8,1.91 484.5,1.75 485.1,2.00 485.8,1.80 486.5,2.06 487.2,1.72 487.8,2.14 488.5,1.73 489.2,1.74 489.8,1.72 490.5,1.59 491.2,1.47 491.9,1.49 492.5,1.78 493.2,1.75 493.9,1.57 494.6,1.45 495.2,1.76 495.9,1.82 496.6,1.49 497.2,1.46 497.9,1.64 498.6,1.54 499.3,1.33 499.9,1.21 500.6,1.57 501.3,1.24 502.0,1.39 502.6,1.06 503.3,1.39 504.0,1.38 504.7,1.23 505.3,1.18 506.0,1.15 506.0,0.00" fill="#c8e1fb" opacity="0.9"/><polygon points="557.0,0.00 557.0,2.26 557.7,2.31 558.3,2.71 559.0,2.88 559.7,2.70 560.4,2.59 561.0,2.31 561.7,2.51 562.4,2.20 563.1,2.58 563.7,2.63 564.4,2.28 565.1,2.03 565.8,2.64 566.4,2.47 567.1,2.64 567.8,2.44 568.4,2.23 569.1,2.44 569.8,2.07 570.5,2.10 571.1,2.18 571.8,1.84 572.5,1.75 573.2,2.21 573.8,2.23 574.5,1.86 575.2,2.07 575.8,1.70 576.5,1.76 577.2,2.03 577.9,1.64 578.5,1.57 579.2,1.81 579.9,1.82 580.6,1.55 581.2,1.32 581.9,1.61 582.6,1.78 583.2,1.53 583.9,1.32 584.6,1.51 585.3,1.39 585.9,1.49 586.6,1.12 587.3,1.31 588.0,1.40 588.6,1.35 589.3,1.16 590.0,1.36 590.7,1.06 591.3,1.10 592.0,1.16 592.0,0.00" fill="#c8e1fb" opacity="0.9"/><polygon points="643.0,0.00 643.0,1.38 643.7,1.29 644.3,1.34 645.0,1.33 645.7,1.48 646.3,1.19 647.0,1.21 647.7,1.20 648.3,1.11 649.0,1.18 649.7,1.38 650.3,1.18 651.0,1.35 651.7,1.13 652.3,1.03 653.0,1.10 653.7,0.96 654.3,1.06 655.0,1.02 655.7,1.24 656.3,1.11 657.0,1.13 657.7,1.23 658.3,0.87 659.0,1.03 659.7,0.93 660.3,0.88 661.0,1.12 661.7,1.05 662.3,1.03 663.0,1.09 663.7,1.02 664.3,1.02 665.0,0.81 665.7,0.83 666.3,0.72 667.0,0.74 667.7,0.75 668.3,0.87 669.0,0.93 669.7,0.67 670.3,0.76 671.0,0.64 671.7,0.86 672.3,0.78 673.0,0.73 673.7,0.65 674.3,0.61 675.0,0.65 675.7,0.60 676.3,0.53 677.0,0.73 677.7,0.58 678.3,0.52 679.0,0.51 679.7,0.50 680.3,0.53 681.0,0.49 681.0,0.00" fill="#c8e1fb" opacity="0.9"/><polygon points="725.0,0.00 725.0,1.60 725.7,1.56 726.3,1.87 727.0,2.05 727.7,1.82 728.3,2.02 729.0,1.58 729.7,1.57 730.3,1.66 731.0,1.46 731.7,1.90 732.3,1.40 733.0,1.69 733.7,1.42 734.3,1.53 735.0,1.35 735.7,1.66 736.3,1.39 737.0,1.42 737.7,1.44 738.3,1.59 739.0,1.41 739.7,1.39 740.3,1.35 741.0,1.54 741.7,1.51 742.3,1.56 743.0,1.44 743.7,1.40 744.3,1.44 745.0,1.08 745.7,1.45 746.3,1.24 747.0,1.20 747.7,1.27 748.3,1.33 749.0,1.20 749.7,1.30 750.3,1.00 751.0,1.05 751.7,1.19 752.3,1.22 753.0,0.96 753.7,0.87 754.3,1.05 755.0,1.04 755.7,1.10 756.3,0.82 757.0,0.93 757.7,0.81 758.3,0.90 759.0,0.79 759.7,0.75 760.3,0.81 761.0,0.92 761.7,0.69 762.3,0.87 763.0,0.65 763.0,0.00" fill="#c8e1fb" opacity="0.9"/><polygon points="812.5,0.00 812.5,2.27 813.2,2.80 813.9,2.86 814.5,2.50 815.2,2.74 815.9,2.86 816.6,2.99 817.2,2.27 817.9,2.22 818.6,2.63 819.3,2.36 819.9,2.04 820.6,2.26 821.3,2.69 822.0,2.18 822.6,2.18 823.3,2.30 824.0,2.09 824.7,2.04 825.3,2.38 826.0,1.91 826.7,1.93 827.4,1.94 828.0,1.88 828.7,2.23 829.4,1.81 830.1,2.16 830.7,1.87 831.4,2.04 832.1,1.67 832.8,1.73 833.4,1.84 834.1,1.60 834.8,1.62 835.5,1.80 836.1,1.45 836.8,1.71 837.5,1.43 838.2,1.76 838.8,1.58 839.5,1.52 840.2,1.79 840.9,1.74 841.5,1.24 842.2,1.33 842.9,1.28 843.6,1.41 844.2,1.17 844.9,1.35 845.6,1.14 846.3,1.27 846.9,1.47 847.6,1.08 848.3,1.09 849.0,1.23 849.6,1.34 850.3,1.06 851.0,1.19 851.0,0.00" fill="#c8e1fb" opacity="0.9"/><polygon points="899.0,0.00 899.0,3.21 899.7,2.44 900.3,2.91 901.0,2.55 901.7,3.15 902.3,2.36 903.0,2.64 903.7,2.67 904.3,2.75 905.0,2.50 905.7,2.85 906.3,2.29 907.0,2.15 907.7,2.57 908.3,2.10 909.0,2.20 909.7,2.60 910.3,2.89 911.0,2.15 911.7,2.30 912.3,2.24 913.0,2.40 913.7,2.51 914.3,1.91 915.0,1.99 915.7,1.90 916.3,2.42 917.0,2.09 917.7,1.82 918.3,2.36 919.0,1.80 919.7,2.39 920.3,2.33 921.0,1.90 921.7,2.36 922.3,2.24 923.0,2.04 923.7,1.87 924.3,1.80 925.0,2.14 925.7,1.80 926.3,1.90 927.0,1.53 927.7,2.05 928.3,1.80 929.0,1.67 929.7,1.47 930.3,1.48 931.0,1.77 931.7,1.66 932.3,1.48 933.0,1.70 933.7,1.64 934.3,1.48 935.0,1.80 935.7,1.36 936.3,1.59 937.0,1.68 937.7,1.58 938.3,1.19 939.0,1.59 939.7,1.58 940.3,1.34 941.0,1.30 941.7,1.40 942.3,1.37 943.0,1.17 943.7,1.31 944.3,1.10 945.0,1.25 945.0,0.00" fill="#c8e1fb" opacity="0.9"/><polygon points="989.5,0.00 989.5,3.07 990.2,2.96 990.9,2.48 991.5,2.82 992.2,2.54 992.9,2.74 993.5,2.75 994.2,2.86 994.9,2.74 995.6,2.12 996.2,2.26 996.9,2.37 997.6,2.57 998.3,2.67 999.0,2.23 999.6,2.39 1000.3,2.05 1001.0,2.21 1001.6,2.59 1002.3,2.02 1003.0,2.44 1003.7,1.99 1004.4,2.49 1005.0,2.32 1005.7,1.90 1006.4,2.05 1007.0,1.90 1007.7,2.10 1008.4,1.86 1009.1,2.08 1009.8,1.72 1010.4,1.75 1011.1,1.90 1011.8,1.67 1012.5,1.99 1013.1,1.48 1013.8,1.51 1014.5,1.71 1015.1,1.49 1015.8,1.52 1016.5,1.49 1017.2,1.76 1017.9,1.76 1018.5,1.36 1019.2,1.53 1019.9,1.60 1020.5,1.35 1021.2,1.53 1021.9,1.64 1022.6,1.43 1023.2,1.14 1023.9,1.18 1024.6,1.27 1025.3,1.33 1026.0,1.16 1026.6,1.04 1027.3,0.99 1028.0,1.26 1028.7,1.04 1029.3,1.20 1030.0,0.92 1030.0,0.00" fill="#c8e1fb" opacity="0.9"/><polygon points="1064.5,0.00 1064.5,1.86 1065.2,1.68 1065.8,1.98 1066.5,1.87 1067.2,1.59 1067.9,1.50 1068.5,2.02 1069.2,1.82 1069.9,1.59 1070.6,1.38 1071.2,1.45 1071.9,1.57 1072.6,1.26 1073.3,1.46 1073.9,1.20 1074.6,1.45 1075.3,1.28 1076.0,1.07 1076.6,1.12 1077.3,1.07 1078.0,1.10 1078.7,0.90 1079.3,0.83 1080.0,0.70 1080.0,0.00" fill="#c8e1fb" opacity="0.9"/><polygon points="1150.0,0.00 1150.0,1.48 1150.7,1.68 1151.3,1.47 1152.0,1.43 1152.7,1.27 1153.3,1.48 1154.0,1.66 1154.7,1.28 1155.3,1.51 1156.0,1.09 1156.7,1.33 1157.3,1.14 1158.0,1.14 1158.7,1.10 1159.3,1.16 1160.0,1.03 1160.7,1.17 1161.3,0.85 1162.0,0.94 1162.7,0.78 1163.3,0.78 1164.0,0.71 1164.7,0.87 1165.3,0.69 1166.0,0.69 1166.0,0.00" fill="#c8e1fb" opacity="0.9"/><polygon points="1233.0,0.00 1233.0,1.19 1233.7,1.24 1234.3,1.06 1235.0,1.06 1235.7,1.17 1236.3,1.15 1237.0,0.88 1237.7,0.89 1238.3,1.03 1239.0,0.86 1239.7,0.86 1240.3,0.94 1241.0,0.89 1241.7,0.78 1242.3,0.66 1243.0,0.55 1243.7,0.64 1244.3,0.53 1245.0,0.54 1245.0,0.00" fill="#c8e1fb" opacity="0.9"/></svg>
<div class="t" style="left:713.5px;top:15.3px;font-size:8px;color:#f4f8ff;">Harmony Vocal</div>
<div style="position:absolute;left:772.0px;top:15.3px;width:7.5px;height:7.5px;border-radius:50%;border:1px solid #eef4ff;"></div>
<div class="t" style="left:803.5px;top:15.3px;font-size:8px;color:#f4f8ff;">Harmony Vocal</div>
<div style="position:absolute;left:862.0px;top:15.3px;width:7.5px;height:7.5px;border-radius:50%;border:1px solid #eef4ff;"></div>
<div class="t" style="left:1063px;top:15.3px;font-size:8px;color:#f4f8ff;">Harmony Vocal</div>
<div class="t" style="left:1148px;top:15.3px;font-size:8px;color:#f4f8ff;">Harmony Vocal</div>
<div class="t" style="left:1232px;top:15.3px;font-size:8px;color:#f4f8ff;">Harmon</div>
<div style="position:absolute;left:500.2px;top:0px;width:1.3px;height:49px;background:#8e9296;"></div>
<div style="position:absolute;left:228px;top:50.6px;width:1040px;height:364px;background:#6088b4;border-radius:2px 0 0 6px;"></div>
<div style="position:absolute;left:229.1px;top:51.7px;width:1040px;height:361.8px;background:#575757;border-radius:1px 0 0 5px;overflow:hidden;"></div>
<div style="position:absolute;left:229px;top:50.6px;width:1040px;height:1.2px;background:#78b2ea;"></div>
<div style="position:absolute;left:229.2px;top:51.8px;width:1040px;height:22.8px;background:#474747;"></div>
<div style="position:absolute;left:229.2px;top:74.6px;width:1040px;height:0.8px;background:#3e3e3e;"></div>
<div style="position:absolute;left:235px;top:56.6px;width:20px;height:12.8px;background:#4e4e4e;border-radius:3px;"></div>
<svg style="position:absolute;left:236px;top:56px" width="18" height="14" viewBox="236 56 18 14"><path d="M242.4 62 L245 59.5 L247.7 62 M245 59.8 Q244.6 66.3 248 66.8" fill="none" stroke="#7e7e7e" stroke-width="1.1" stroke-linecap="round"/></svg>
<div style="position:absolute;left:262.3px;top:56.6px;width:138px;height:12.8px;background:#555;border-radius:3.5px;"></div>
<div style="position:absolute;left:301.5px;top:56.6px;width:0.8px;height:12.8px;background:#4a4a4a;"></div>
<div style="position:absolute;left:357.5px;top:56.6px;width:0.8px;height:12.8px;background:#4a4a4a;"></div>
<div class="t" style="left:268.5px;top:57.8px;font-size:9.4px;color:#f2f2f2;">Edit</div>
<div class="t" style="left:308.5px;top:57.8px;font-size:9.4px;color:#f2f2f2;">Options</div>
<div class="t" style="left:364.5px;top:57.8px;font-size:9.4px;color:#f2f2f2;">View</div>
<svg style="position:absolute;left:289px;top:60.8px" width="8" height="6" viewBox="0 0 8 6"><path d="M1.8 1.8 L4 4 L6.2 1.8" fill="none" stroke="#b0b0b0" stroke-width="0.9"/></svg>
<svg style="position:absolute;left:345px;top:60.8px" width="8" height="6" viewBox="0 0 8 6"><path d="M1.8 1.8 L4 4 L6.2 1.8" fill="none" stroke="#b0b0b0" stroke-width="0.9"/></svg>
<svg style="position:absolute;left:389.5px;top:60.8px" width="8" height="6" viewBox="0 0 8 6"><path d="M1.8 1.8 L4 4 L6.2 1.8" fill="none" stroke="#b0b0b0" stroke-width="0.9"/></svg>
<div class="t" style="left:407px;top:57.8px;font-size:9.4px;letter-spacing:-0.2px;color:#c4c4c4;">Sends on Faders:</div>
<div style="position:absolute;left:479px;top:56.6px;width:97.5px;height:12.8px;background:#555;border-radius:3.5px;"></div>
<div style="position:absolute;left:498px;top:56.6px;width:0.8px;height:12.8px;background:#4a4a4a;"></div>
<svg style="position:absolute;left:482.5px;top:57.5px" width="12" height="11" viewBox="0 0 12 11"><path d="M3.7 3.4 A3.5 3.5 0 1 0 8.3 3.4" fill="none" stroke="#ddd" stroke-width="1"/><path d="M6 1.3 V5.6" stroke="#ddd" stroke-width="1"/></svg>
<div class="t" style="left:506px;top:57.8px;font-size:9.4px;color:#f2f2f2;">Off</div>
<svg style="position:absolute;left:565px;top:57.5px" width="8" height="11" viewBox="0 0 8 11"><path d="M1.8 4 L4 1.8 L6.2 4 M1.8 7 L4 9.2 L6.2 7" fill="none" stroke="#c8c8c8" stroke-width="0.9"/></svg>
<div style="position:absolute;left:744px;top:56.2px;width:112px;height:14.2px;background:#3c3c3c;border-radius:4px;"></div>
<div style="position:absolute;left:786.7px;top:56.6px;width:41px;height:13.4px;background:#2e78d2;border-radius:3.5px;"></div>
<div class="t" style="left:751px;top:57.8px;font-size:9.4px;color:#dcdcdc;">Single</div>
<div class="t" style="left:792.5px;top:57.8px;font-size:9.4px;color:#fff;">Tracks</div>
<div class="t" style="left:836px;top:57.8px;font-size:9.4px;color:#dcdcdc;">All</div>
<div style="position:absolute;left:1002px;top:56px;width:270px;height:13.5px;background:#2e78d2;border-radius:4px;"></div>
<div style="position:absolute;left:1041.4px;top:56px;width:0.8px;height:13.5px;background:#2a69b6;"></div>
<div style="position:absolute;left:1073px;top:56px;width:0.8px;height:13.5px;background:#2a69b6;"></div>
<div style="position:absolute;left:1104.6px;top:56px;width:0.8px;height:13.5px;background:#2a69b6;"></div>
<div style="position:absolute;left:1136.3px;top:56px;width:0.8px;height:13.5px;background:#2a69b6;"></div>
<div style="position:absolute;left:1173.2px;top:56px;width:0.8px;height:13.5px;background:#2a69b6;"></div>
<div style="position:absolute;left:1218.8px;top:56px;width:0.8px;height:13.5px;background:#2a69b6;"></div>
<div class="t" style="left:1010px;top:57.5px;font-size:9.4px;color:#fff;">Audio</div>
<div class="t" style="left:1049px;top:57.5px;font-size:9.4px;color:#fff;">Inst</div>
<div class="t" style="left:1081px;top:57.5px;font-size:9.4px;color:#fff;">Aux</div>
<div class="t" style="left:1113px;top:57.5px;font-size:9.4px;color:#fff;">Bus</div>
<div class="t" style="left:1144px;top:57.5px;font-size:9.4px;color:#fff;">Input</div>
<div class="t" style="left:1182px;top:57.5px;font-size:9.4px;color:#fff;">Output</div>
<div class="t" style="left:1227px;top:57.5px;font-size:9.4px;color:#fff;">Master/V</div>
<div style="position:absolute;left:229.2px;top:75.4px;width:37px;height:316.6px;background:#575757;"></div>
<div style="position:absolute;left:266px;top:75.4px;width:1.2px;height:316.6px;background:#262626;"></div>
<div class="t" style="right:998px;top:83.2px;font-size:7.9px;letter-spacing:-0.1px;color:#cfcfcf;">Input</div>
<div class="t" style="right:998px;top:100.6px;font-size:7.9px;letter-spacing:-0.1px;color:#cfcfcf;">Audio FX</div>
<div class="t" style="right:998px;top:176.6px;font-size:7.9px;letter-spacing:-0.1px;color:#cfcfcf;">Output</div>
<div class="t" style="right:998px;top:191.8px;font-size:7.9px;letter-spacing:-0.1px;color:#cfcfcf;">Group</div>
<div class="t" style="right:998px;top:213.8px;font-size:7.9px;letter-spacing:-0.1px;color:#cfcfcf;">Pan</div>
<div class="t" style="right:998px;top:236.2px;font-size:7.9px;letter-spacing:-0.1px;color:#cfcfcf;">dB</div>
<svg style="position:absolute;left:229px;top:250px" width="37" height="105" viewBox="229 250 37 105"><text x="257.5" y="262.6" font-size="5.6" fill="#a8a8a8" text-anchor="end" font-family="Liberation Sans">6</text><rect x="258.8" y="260.20000000000005" width="6.5" height="0.8" fill="#9a9a9a"/><text x="257.5" y="274" font-size="5.6" fill="#a8a8a8" text-anchor="end" font-family="Liberation Sans">3</text><rect x="258.8" y="271.6" width="6.5" height="0.8" fill="#9a9a9a"/><text x="257.5" y="285" font-size="6" fill="#f0f0f0" text-anchor="end" font-family="Liberation Sans" font-weight="bold">0</text><rect x="258.5" y="282.3" width="7" height="1.4" fill="#eee"/><text x="257.5" y="296.7" font-size="5.6" fill="#a8a8a8" text-anchor="end" font-family="Liberation Sans">-3</text><rect x="258.8" y="294.3" width="6.5" height="0.8" fill="#9a9a9a"/><text x="257.5" y="308.2" font-size="5.6" fill="#a8a8a8" text-anchor="end" font-family="Liberation Sans">-6</text><rect x="258.8" y="305.8" width="6.5" height="0.8" fill="#9a9a9a"/><text x="257.5" y="315.8" font-size="5.6" fill="#a8a8a8" text-anchor="end" font-family="Liberation Sans">-10</text><rect x="258.8" y="313.40000000000003" width="6.5" height="0.8" fill="#9a9a9a"/><text x="257.5" y="325.4" font-size="5.6" fill="#a8a8a8" text-anchor="end" font-family="Liberation Sans">-15</text><rect x="258.8" y="323.0" width="6.5" height="0.8" fill="#9a9a9a"/><text x="257.5" y="332.7" font-size="5.6" fill="#a8a8a8" text-anchor="end" font-family="Liberation Sans">-20</text><rect x="258.8" y="330.3" width="6.5" height="0.8" fill="#9a9a9a"/><text x="257.5" y="340" font-size="5.6" fill="#a8a8a8" text-anchor="end" font-family="Liberation Sans">-30</text><rect x="258.8" y="337.6" width="6.5" height="0.8" fill="#9a9a9a"/><text x="257.5" y="345.4" font-size="5.6" fill="#a8a8a8" text-anchor="end" font-family="Liberation Sans">-40</text><rect x="258.8" y="343.0" width="6.5" height="0.8" fill="#9a9a9a"/><text x="257.5" y="350.4" font-size="5.6" fill="#a8a8a8" text-anchor="end" font-family="Liberation Sans">-∞</text><rect x="258.8" y="348.0" width="6.5" height="0.8" fill="#9a9a9a"/><rect x="262.3" y="264.05" width="3" height="0.7" fill="#8a8a8a"/><rect x="262.3" y="267.84999999999997" width="3" height="0.7" fill="#8a8a8a"/><rect x="262.3" y="275.31666666666666" width="3" height="0.7" fill="#8a8a8a"/><rect x="262.3" y="278.9833333333333" width="3" height="0.7" fill="#8a8a8a"/><rect x="262.3" y="286.54999999999995" width="3" height="0.7" fill="#8a8a8a"/><rect x="262.3" y="290.45" width="3" height="0.7" fill="#8a8a8a"/><rect x="262.3" y="298.1833333333333" width="3" height="0.7" fill="#8a8a8a"/><rect x="262.3" y="302.01666666666665" width="3" height="0.7" fill="#8a8a8a"/><rect x="262.3" y="309.65" width="3" height="0.7" fill="#8a8a8a"/><rect x="262.3" y="316.65" width="3" height="0.7" fill="#8a8a8a"/><rect x="262.3" y="319.84999999999997" width="3" height="0.7" fill="#8a8a8a"/><rect x="262.3" y="326.69999999999993" width="3" height="0.7" fill="#8a8a8a"/><rect x="262.3" y="334.0" width="3" height="0.7" fill="#8a8a8a"/><rect x="262.3" y="340.34999999999997" width="3" height="0.7" fill="#8a8a8a"/><rect x="262.3" y="345.54999999999995" width="3" height="0.7" fill="#8a8a8a"/></svg>
<div style="position:absolute;left:318.3px;top:75.4px;width:1px;height:306px;background:#4a4a4a;"></div>
<div class="btn" style="left:270.5px;top:81px;width:43.5px;height:10.5px;background:#5c5c5c;"></div>
<div style="position:absolute;left:281.7px;top:81px;width:0.8px;height:10.5px;background:#545454;"></div>
<div class="t" style="left:282.7px;top:83.2px;width:31px;text-align:center;font-size:7.5px;color:#e4e4e4;">Bus 7</div>
<svg style="position:absolute;left:271.5px;top:81.7px" width="9.5" height="9.5" viewBox="0 0 9.5 9.5"><rect x="1.7" y="1.7" width="6.1" height="6.1" fill="none" stroke="#e8e8e8" stroke-width="0.8"/><rect x="0.8" y="0.8" width="1.8" height="1.8" fill="#fff"/><rect x="6.9" y="0.8" width="1.8" height="1.8" fill="#fff"/><rect x="0.8" y="6.9" width="1.8" height="1.8" fill="#fff"/><rect x="6.9" y="6.9" width="1.8" height="1.8" fill="#fff"/></svg>
<div style="position:absolute;left:270.5px;top:98px;width:43.5px;height:61px;background:#4c4c4c;border:0.6px solid #484848;border-radius:3px;"></div>
<div class="fx" style="left:270.5px;top:98.3px;width:43.5px;">Cnsl EQ</div>
<div class="fx" style="left:270.5px;top:109.64999999999999px;width:43.5px;">Channel EQ</div>
<div class="fx" style="left:270.5px;top:121.0px;width:43.5px;">Space D</div>
<div class="btn" style="left:270.5px;top:174.4px;width:43.5px;height:10.3px;background:#666666;font-size:7.6px;line-height:12.4px;color:#ececec;">Surround</div>
<div class="btn" style="left:270.5px;top:189.4px;width:43.5px;height:11.5px;background:#393939;border-radius:1px;font-size:7.9px;line-height:12.8px;color:#d9b93a;">1: Vocals</div>
<svg style="position:absolute;left:267.0px;top:200px" width="52" height="32" viewBox="267.0 200 52 32"><circle cx="289.80" cy="203.90" r="1.05" fill="#a0a0a0"/><circle cx="279.90" cy="208.00" r="1.05" fill="#a0a0a0"/><circle cx="275.80" cy="217.90" r="1.05" fill="#a0a0a0"/><circle cx="279.90" cy="227.80" r="1.05" fill="#a0a0a0"/><circle cx="299.70" cy="227.80" r="1.05" fill="#a0a0a0"/><circle cx="303.80" cy="217.90" r="1.05" fill="#a0a0a0"/><circle cx="299.70" cy="208.00" r="1.05" fill="#a0a0a0"/><circle cx="289.8" cy="217.9" r="11" fill="#474747"/><circle cx="289.8" cy="217.9" r="9.7" fill="#363636"/><circle cx="289.8" cy="215.3" r="1.75" fill="#44dd55"/><rect x="308.2" y="205.9" width="1.2" height="22.6" fill="#2a2a2a"/><circle cx="308.8" cy="228.5" r="1.8" fill="#44dd55"/></svg>
<div class="btn" style="left:270.2px;top:233.5px;width:21px;height:11.2px;background:#353535;border-radius:1px;font-size:8px;line-height:12.4px;color:#5cd264;">-29.7</div>
<div class="btn" style="left:293.4px;top:233.5px;width:21.4px;height:11.2px;background:#353535;border-radius:1px;font-size:8px;line-height:12.4px;color:#eeeeee;">-1.0</div>
<svg style="position:absolute;left:267.0px;top:255px" width="52" height="100" viewBox="267.0 255 52 100"><rect x="277.0" y="258.8" width="9.4" height="26" fill="#363636"/><rect x="277.0" y="288" width="9.4" height="62" fill="#363636"/><text x="274.8" y="261.5" font-size="5.4" fill="#b5b5b5" text-anchor="end" font-family="Liberation Sans">0</text><rect x="275.3" y="259.3" width="1.2" height="0.6" fill="#9a9a9a"/><text x="274.8" y="267.7" font-size="5.4" fill="#b5b5b5" text-anchor="end" font-family="Liberation Sans">12</text><rect x="275.3" y="265.5" width="1.2" height="0.6" fill="#9a9a9a"/><text x="274.8" y="273.9" font-size="5.4" fill="#b5b5b5" text-anchor="end" font-family="Liberation Sans">24</text><rect x="275.3" y="271.7" width="1.2" height="0.6" fill="#9a9a9a"/><text x="274.8" y="280.09999999999997" font-size="5.4" fill="#b5b5b5" text-anchor="end" font-family="Liberation Sans">40</text><rect x="275.3" y="277.9" width="1.2" height="0.6" fill="#9a9a9a"/><text x="274.8" y="286.09999999999997" font-size="5.4" fill="#b5b5b5" text-anchor="end" font-family="Liberation Sans">60</text><rect x="275.3" y="283.9" width="1.2" height="0.6" fill="#9a9a9a"/><text x="274.8" y="290.5" font-size="5.4" fill="#b5b5b5" text-anchor="end" font-family="Liberation Sans">0</text><rect x="275.3" y="288.3" width="1.2" height="0.6" fill="#9a9a9a"/><text x="274.8" y="299.4" font-size="5.4" fill="#b5b5b5" text-anchor="end" font-family="Liberation Sans">6</text><rect x="275.3" y="297.2" width="1.2" height="0.6" fill="#9a9a9a"/><text x="274.8" y="307.9" font-size="5.4" fill="#b5b5b5" text-anchor="end" font-family="Liberation Sans">12</text><rect x="275.3" y="305.7" width="1.2" height="0.6" fill="#9a9a9a"/><text x="274.8" y="316.2" font-size="5.4" fill="#b5b5b5" text-anchor="end" font-family="Liberation Sans">18</text><rect x="275.3" y="314.0" width="1.2" height="0.6" fill="#9a9a9a"/><text x="274.8" y="324.09999999999997" font-size="5.4" fill="#b5b5b5" text-anchor="end" font-family="Liberation Sans">24</text><rect x="275.3" y="321.9" width="1.2" height="0.6" fill="#9a9a9a"/><text x="274.8" y="329.7" font-size="5.4" fill="#b5b5b5" text-anchor="end" font-family="Liberation Sans">30</text><rect x="275.3" y="327.5" width="1.2" height="0.6" fill="#9a9a9a"/><text x="274.8" y="337.9" font-size="5.4" fill="#b5b5b5" text-anchor="end" font-family="Liberation Sans">40</text><rect x="275.3" y="335.7" width="1.2" height="0.6" fill="#9a9a9a"/><text x="274.8" y="346.9" font-size="5.4" fill="#b5b5b5" text-anchor="end" font-family="Liberation Sans">50</text><rect x="275.3" y="344.7" width="1.2" height="0.6" fill="#9a9a9a"/><text x="274.8" y="351.2" font-size="5.4" fill="#b5b5b5" text-anchor="end" font-family="Liberation Sans">60</text><rect x="275.3" y="349.0" width="1.2" height="0.6" fill="#9a9a9a"/><rect x="279.2" y="279" width="1.2" height="5.5" fill="#4cc95a"/><rect x="282.8" y="279" width="1.2" height="5.5" fill="#4cc95a"/><polygon points="277.70,350.00 277.70,344.51 278.20,344.51 278.20,339.81 278.70,339.81 278.70,333.34 279.20,333.34 279.20,327.61 279.70,327.61 279.70,331.43 280.20,331.43 280.20,333.77 280.70,333.77 280.70,338.06 281.20,338.06 281.20,339.31 281.70,339.31 281.70,332.58 282.20,332.58 282.20,327.88 282.70,327.88 282.70,328.99 283.20,328.99 283.20,331.41 283.70,331.41 283.70,335.98 284.20,335.98 284.20,338.23 284.70,338.23 284.70,340.72 285.20,340.72 285.20,341.25 285.70,341.25 285.70,344.70 286.20,344.70 285.70,350.00" fill="#40b04d"/><rect x="303.2" y="259" width="1.3" height="91" fill="#2c2c2c"/><rect x="296.4" y="260.20000000000005" width="6.3" height="0.8" fill="#9a9a9a"/><rect x="296.4" y="271.6" width="6.3" height="0.8" fill="#9a9a9a"/><rect x="295.4" y="282.35" width="7.3" height="1.3" fill="#c8c8c8"/><rect x="296.4" y="294.3" width="6.3" height="0.8" fill="#9a9a9a"/><rect x="296.4" y="305.8" width="6.3" height="0.8" fill="#9a9a9a"/><rect x="296.4" y="313.40000000000003" width="6.3" height="0.8" fill="#9a9a9a"/><rect x="296.4" y="323.0" width="6.3" height="0.8" fill="#9a9a9a"/><rect x="296.4" y="330.3" width="6.3" height="0.8" fill="#9a9a9a"/><rect x="296.4" y="337.6" width="6.3" height="0.8" fill="#9a9a9a"/><rect x="296.4" y="343.0" width="6.3" height="0.8" fill="#9a9a9a"/><rect x="296.4" y="348.0" width="6.3" height="0.8" fill="#9a9a9a"/><rect x="300.0" y="264.05" width="2.7" height="0.7" fill="#8a8a8a"/><rect x="300.0" y="267.84999999999997" width="2.7" height="0.7" fill="#8a8a8a"/><rect x="300.0" y="275.31666666666666" width="2.7" height="0.7" fill="#8a8a8a"/><rect x="300.0" y="278.9833333333333" width="2.7" height="0.7" fill="#8a8a8a"/><rect x="300.0" y="286.54999999999995" width="2.7" height="0.7" fill="#8a8a8a"/><rect x="300.0" y="290.45" width="2.7" height="0.7" fill="#8a8a8a"/><rect x="300.0" y="298.1833333333333" width="2.7" height="0.7" fill="#8a8a8a"/><rect x="300.0" y="302.01666666666665" width="2.7" height="0.7" fill="#8a8a8a"/><rect x="300.0" y="307.75" width="2.7" height="0.7" fill="#8a8a8a"/><rect x="300.0" y="309.65" width="2.7" height="0.7" fill="#8a8a8a"/><rect x="300.0" y="311.54999999999995" width="2.7" height="0.7" fill="#8a8a8a"/><rect x="300.0" y="316.65" width="2.7" height="0.7" fill="#8a8a8a"/><rect x="300.0" y="319.84999999999997" width="2.7" height="0.7" fill="#8a8a8a"/><rect x="300.0" y="324.87499999999994" width="2.7" height="0.7" fill="#8a8a8a"/><rect x="300.0" y="326.69999999999993" width="2.7" height="0.7" fill="#8a8a8a"/><rect x="300.0" y="328.525" width="2.7" height="0.7" fill="#8a8a8a"/><rect x="300.0" y="332.17499999999995" width="2.7" height="0.7" fill="#8a8a8a"/><rect x="300.0" y="334.0" width="2.7" height="0.7" fill="#8a8a8a"/><rect x="300.0" y="335.825" width="2.7" height="0.7" fill="#8a8a8a"/><rect x="300.0" y="340.34999999999997" width="2.7" height="0.7" fill="#8a8a8a"/><rect x="300.0" y="345.54999999999995" width="2.7" height="0.7" fill="#8a8a8a"/><defs><linearGradient id="cg0" x1="0" y1="0" x2="0" y2="1"><stop offset="0" stop-color="#8a8a8a"/><stop offset="0.04" stop-color="#e8e8e8"/><stop offset="0.14" stop-color="#c8c8c8"/><stop offset="0.2" stop-color="#a4a4a4"/><stop offset="0.46" stop-color="#8c8c8c"/><stop offset="0.5" stop-color="#6a6a6a"/><stop offset="0.54" stop-color="#d6d6d6"/><stop offset="0.82" stop-color="#e2e2e2"/><stop offset="0.88" stop-color="#9a9a9a"/><stop offset="1" stop-color="#777"/></linearGradient></defs><rect x="298.0" y="275.90000000000003" width="11.6" height="23.5" rx="1" fill="#2a2a2a" opacity="0.5"/><rect x="297.8" y="275.3" width="11.6" height="23.5" rx="1" fill="url(#cg0)"/></svg>
<div class="btn" style="left:270.0px;top:367.3px;width:20.2px;height:10.2px;background:#646464;font-size:8.5px;line-height:12.2px;color:#f6f6f6;-webkit-text-stroke:0.3px #f6f6f6;">M</div>
<div class="btn" style="left:294.0px;top:367.3px;width:20.2px;height:10.2px;background:#646464;font-size:8.5px;line-height:12.2px;color:#f6f6f6;-webkit-text-stroke:0.3px #f6f6f6;">S</div>
<div style="position:absolute;left:370.6px;top:75.4px;width:1px;height:306px;background:#4a4a4a;"></div>
<div class="btn" style="left:322.8px;top:81px;width:43.5px;height:10.5px;background:#5c5c5c;"></div>
<div style="position:absolute;left:334.0px;top:81px;width:0.8px;height:10.5px;background:#545454;"></div>
<div class="t" style="left:335.0px;top:83.2px;width:31px;text-align:center;font-size:7.5px;color:#2c2c2c;">Input</div>
<svg style="position:absolute;left:323.8px;top:81.7px" width="9.5" height="9.5" viewBox="0 0 9.5 9.5"><rect x="1.7" y="1.7" width="6.1" height="6.1" fill="none" stroke="#e8e8e8" stroke-width="0.8"/><rect x="0.8" y="0.8" width="1.8" height="1.8" fill="#fff"/><rect x="6.9" y="0.8" width="1.8" height="1.8" fill="#fff"/><rect x="0.8" y="6.9" width="1.8" height="1.8" fill="#fff"/><rect x="6.9" y="6.9" width="1.8" height="1.8" fill="#fff"/></svg>
<div style="position:absolute;left:322.8px;top:98px;width:43.5px;height:61px;background:#4c4c4c;border:0.6px solid #484848;border-radius:3px;"></div>
<div class="fx" style="left:322.8px;top:98.3px;width:43.5px;">Noise Gate</div>
<div class="fx" style="left:322.8px;top:109.64999999999999px;width:43.5px;">Channel EQ</div>
<div class="fx" style="left:322.8px;top:121.0px;width:43.5px;">Compressor</div>
<div class="fx" style="left:322.8px;top:132.35px;width:43.5px;">Space D</div>
<div class="btn" style="left:322.8px;top:174.4px;width:43.5px;height:10.3px;background:#666666;font-size:7.6px;line-height:12.4px;color:#ececec;">Surround</div>
<div class="btn" style="left:322.8px;top:189.4px;width:43.5px;height:11.5px;background:#393939;border-radius:1px;font-size:7.9px;line-height:12.8px;color:#d9b93a;">1: Vocals</div>
<svg style="position:absolute;left:319.3px;top:200px" width="52" height="32" viewBox="319.3 200 52 32"><circle cx="342.10" cy="203.90" r="1.05" fill="#a0a0a0"/><circle cx="332.20" cy="208.00" r="1.05" fill="#a0a0a0"/><circle cx="328.10" cy="217.90" r="1.05" fill="#a0a0a0"/><circle cx="332.20" cy="227.80" r="1.05" fill="#a0a0a0"/><circle cx="352.00" cy="227.80" r="1.05" fill="#a0a0a0"/><circle cx="356.10" cy="217.90" r="1.05" fill="#a0a0a0"/><circle cx="352.00" cy="208.00" r="1.05" fill="#a0a0a0"/><circle cx="342.1" cy="217.9" r="11" fill="#474747"/><circle cx="342.1" cy="217.9" r="9.7" fill="#363636"/><circle cx="339.0" cy="215.1" r="1.75" fill="#44dd55"/><rect x="360.5" y="205.9" width="1.2" height="22.6" fill="#2a2a2a"/><circle cx="361.1" cy="228.5" r="1.8" fill="#44dd55"/></svg>
<div class="btn" style="left:322.5px;top:233.5px;width:21px;height:11.2px;background:#353535;border-radius:1px;font-size:8px;line-height:12.4px;color:#5cd264;">-16.8</div>
<div class="btn" style="left:345.7px;top:233.5px;width:21.4px;height:11.2px;background:#353535;border-radius:1px;font-size:8px;line-height:12.4px;color:#eeeeee;">-2.4</div>
<svg style="position:absolute;left:319.3px;top:255px" width="52" height="100" viewBox="319.3 255 52 100"><rect x="329.3" y="258.8" width="9.4" height="26" fill="#363636"/><rect x="329.3" y="288" width="9.4" height="62" fill="#363636"/><text x="327.1" y="261.5" font-size="5.4" fill="#b5b5b5" text-anchor="end" font-family="Liberation Sans">0</text><rect x="327.6" y="259.3" width="1.2" height="0.6" fill="#9a9a9a"/><text x="327.1" y="267.7" font-size="5.4" fill="#b5b5b5" text-anchor="end" font-family="Liberation Sans">12</text><rect x="327.6" y="265.5" width="1.2" height="0.6" fill="#9a9a9a"/><text x="327.1" y="273.9" font-size="5.4" fill="#b5b5b5" text-anchor="end" font-family="Liberation Sans">24</text><rect x="327.6" y="271.7" width="1.2" height="0.6" fill="#9a9a9a"/><text x="327.1" y="280.09999999999997" font-size="5.4" fill="#b5b5b5" text-anchor="end" font-family="Liberation Sans">40</text><rect x="327.6" y="277.9" width="1.2" height="0.6" fill="#9a9a9a"/><text x="327.1" y="286.09999999999997" font-size="5.4" fill="#b5b5b5" text-anchor="end" font-family="Liberation Sans">60</text><rect x="327.6" y="283.9" width="1.2" height="0.6" fill="#9a9a9a"/><text x="327.1" y="290.5" font-size="5.4" fill="#b5b5b5" text-anchor="end" font-family="Liberation Sans">0</text><rect x="327.6" y="288.3" width="1.2" height="0.6" fill="#9a9a9a"/><text x="327.1" y="299.4" font-size="5.4" fill="#b5b5b5" text-anchor="end" font-family="Liberation Sans">6</text><rect x="327.6" y="297.2" width="1.2" height="0.6" fill="#9a9a9a"/><text x="327.1" y="307.9" font-size="5.4" fill="#b5b5b5" text-anchor="end" font-family="Liberation Sans">12</text><rect x="327.6" y="305.7" width="1.2" height="0.6" fill="#9a9a9a"/><text x="327.1" y="316.2" font-size="5.4" fill="#b5b5b5" text-anchor="end" font-family="Liberation Sans">18</text><rect x="327.6" y="314.0" width="1.2" height="0.6" fill="#9a9a9a"/><text x="327.1" y="324.09999999999997" font-size="5.4" fill="#b5b5b5" text-anchor="end" font-family="Liberation Sans">24</text><rect x="327.6" y="321.9" width="1.2" height="0.6" fill="#9a9a9a"/><text x="327.1" y="329.7" font-size="5.4" fill="#b5b5b5" text-anchor="end" font-family="Liberation Sans">30</text><rect x="327.6" y="327.5" width="1.2" height="0.6" fill="#9a9a9a"/><text x="327.1" y="337.9" font-size="5.4" fill="#b5b5b5" text-anchor="end" font-family="Liberation Sans">40</text><rect x="327.6" y="335.7" width="1.2" height="0.6" fill="#9a9a9a"/><text x="327.1" y="346.9" font-size="5.4" fill="#b5b5b5" text-anchor="end" font-family="Liberation Sans">50</text><rect x="327.6" y="344.7" width="1.2" height="0.6" fill="#9a9a9a"/><text x="327.1" y="351.2" font-size="5.4" fill="#b5b5b5" text-anchor="end" font-family="Liberation Sans">60</text><rect x="327.6" y="349.0" width="1.2" height="0.6" fill="#9a9a9a"/><rect x="331.5" y="273.5" width="1.2" height="11.0" fill="#4cc95a"/><rect x="335.1" y="275" width="1.2" height="9.5" fill="#4cc95a"/><polygon points="330.00,350.00 330.00,334.52 330.50,334.52 330.50,329.63 331.00,329.63 331.00,325.64 331.50,325.64 331.50,323.10 332.00,323.10 332.00,320.13 332.50,320.13 332.50,320.21 333.00,320.21 333.00,322.38 333.50,322.38 333.50,324.24 334.00,324.24 334.00,325.19 334.50,325.19 334.50,325.64 335.00,325.64 335.00,328.03 335.50,328.03 335.50,331.31 336.00,331.31 336.00,329.98 336.50,329.98 336.50,331.96 337.00,331.96 337.00,335.32 337.50,335.32 337.50,335.48 338.00,335.48 338.00,336.43 338.50,336.43 338.00,350.00" fill="#40b04d"/><rect x="355.5" y="259" width="1.3" height="91" fill="#2c2c2c"/><rect x="348.7" y="260.20000000000005" width="6.3" height="0.8" fill="#9a9a9a"/><rect x="348.7" y="271.6" width="6.3" height="0.8" fill="#9a9a9a"/><rect x="347.7" y="282.35" width="7.3" height="1.3" fill="#c8c8c8"/><rect x="348.7" y="294.3" width="6.3" height="0.8" fill="#9a9a9a"/><rect x="348.7" y="305.8" width="6.3" height="0.8" fill="#9a9a9a"/><rect x="348.7" y="313.40000000000003" width="6.3" height="0.8" fill="#9a9a9a"/><rect x="348.7" y="323.0" width="6.3" height="0.8" fill="#9a9a9a"/><rect x="348.7" y="330.3" width="6.3" height="0.8" fill="#9a9a9a"/><rect x="348.7" y="337.6" width="6.3" height="0.8" fill="#9a9a9a"/><rect x="348.7" y="343.0" width="6.3" height="0.8" fill="#9a9a9a"/><rect x="348.7" y="348.0" width="6.3" height="0.8" fill="#9a9a9a"/><rect x="352.3" y="264.05" width="2.7" height="0.7" fill="#8a8a8a"/><rect x="352.3" y="267.84999999999997" width="2.7" height="0.7" fill="#8a8a8a"/><rect x="352.3" y="275.31666666666666" width="2.7" height="0.7" fill="#8a8a8a"/><rect x="352.3" y="278.9833333333333" width="2.7" height="0.7" fill="#8a8a8a"/><rect x="352.3" y="286.54999999999995" width="2.7" height="0.7" fill="#8a8a8a"/><rect x="352.3" y="290.45" width="2.7" height="0.7" fill="#8a8a8a"/><rect x="352.3" y="298.1833333333333" width="2.7" height="0.7" fill="#8a8a8a"/><rect x="352.3" y="302.01666666666665" width="2.7" height="0.7" fill="#8a8a8a"/><rect x="352.3" y="307.75" width="2.7" height="0.7" fill="#8a8a8a"/><rect x="352.3" y="309.65" width="2.7" height="0.7" fill="#8a8a8a"/><rect x="352.3" y="311.54999999999995" width="2.7" height="0.7" fill="#8a8a8a"/><rect x="352.3" y="316.65" width="2.7" height="0.7" fill="#8a8a8a"/><rect x="352.3" y="319.84999999999997" width="2.7" height="0.7" fill="#8a8a8a"/><rect x="352.3" y="324.87499999999994" width="2.7" height="0.7" fill="#8a8a8a"/><rect x="352.3" y="326.69999999999993" width="2.7" height="0.7" fill="#8a8a8a"/><rect x="352.3" y="328.525" width="2.7" height="0.7" fill="#8a8a8a"/><rect x="352.3" y="332.17499999999995" width="2.7" height="0.7" fill="#8a8a8a"/><rect x="352.3" y="334.0" width="2.7" height="0.7" fill="#8a8a8a"/><rect x="352.3" y="335.825" width="2.7" height="0.7" fill="#8a8a8a"/><rect x="352.3" y="340.34999999999997" width="2.7" height="0.7" fill="#8a8a8a"/><rect x="352.3" y="345.54999999999995" width="2.7" height="0.7" fill="#8a8a8a"/><defs><linearGradient id="cg1" x1="0" y1="0" x2="0" y2="1"><stop offset="0" stop-color="#8a8a8a"/><stop offset="0.04" stop-color="#e8e8e8"/><stop offset="0.14" stop-color="#c8c8c8"/><stop offset="0.2" stop-color="#a4a4a4"/><stop offset="0.46" stop-color="#8c8c8c"/><stop offset="0.5" stop-color="#6a6a6a"/><stop offset="0.54" stop-color="#d6d6d6"/><stop offset="0.82" stop-color="#e2e2e2"/><stop offset="0.88" stop-color="#9a9a9a"/><stop offset="1" stop-color="#777"/></linearGradient></defs><rect x="350.3" y="280.6" width="11.6" height="23.5" rx="1" fill="#2a2a2a" opacity="0.5"/><rect x="350.1" y="280" width="11.6" height="23.5" rx="1" fill="url(#cg1)"/></svg>
<div class="btn" style="left:323.0px;top:353.8px;width:19.5px;height:10.4px;background:#5f5f5f;font-size:7.6px;line-height:12px;color:#c4c4c4;">R&nbsp;&nbsp;&nbsp;I</div>
<div class="btn" style="left:322.3px;top:367.3px;width:20.2px;height:10.2px;background:#646464;font-size:8.5px;line-height:12.2px;color:#f6f6f6;-webkit-text-stroke:0.3px #f6f6f6;">M</div>
<div class="btn" style="left:346.3px;top:367.3px;width:20.2px;height:10.2px;background:#646464;font-size:8.5px;line-height:12.2px;color:#f6f6f6;-webkit-text-stroke:0.3px #f6f6f6;">S</div>
<div style="position:absolute;left:422.90000000000003px;top:75.4px;width:1px;height:306px;background:#4a4a4a;"></div>
<div class="btn" style="left:375.1px;top:81px;width:43.5px;height:10.5px;background:#5c5c5c;"></div>
<div style="position:absolute;left:386.3px;top:81px;width:0.8px;height:10.5px;background:#545454;"></div>
<div class="t" style="left:387.3px;top:83.2px;width:31px;text-align:center;font-size:7.5px;color:#2c2c2c;">Input</div>
<svg style="position:absolute;left:376.1px;top:81.7px" width="9.5" height="9.5" viewBox="0 0 9.5 9.5"><rect x="1.7" y="1.7" width="6.1" height="6.1" fill="none" stroke="#e8e8e8" stroke-width="0.8"/><rect x="0.8" y="0.8" width="1.8" height="1.8" fill="#fff"/><rect x="6.9" y="0.8" width="1.8" height="1.8" fill="#fff"/><rect x="0.8" y="6.9" width="1.8" height="1.8" fill="#fff"/><rect x="6.9" y="6.9" width="1.8" height="1.8" fill="#fff"/></svg>
<div style="position:absolute;left:375.1px;top:98px;width:43.5px;height:61px;background:#4c4c4c;border:0.6px solid #484848;border-radius:3px;"></div>
<div class="fx" style="left:375.1px;top:98.3px;width:43.5px;">Noise Gate</div>
<div class="fx" style="left:375.1px;top:109.64999999999999px;width:43.5px;">Channel EQ</div>
<div class="fx" style="left:375.1px;top:121.0px;width:43.5px;">Compressor</div>
<div class="fx" style="left:375.1px;top:132.35px;width:43.5px;">St-Delay</div>
<div class="btn" style="left:375.1px;top:174.4px;width:43.5px;height:10.3px;background:#666666;font-size:7.6px;line-height:12.4px;color:#ececec;">Surround</div>
<div class="btn" style="left:375.1px;top:189.4px;width:43.5px;height:11.5px;background:#393939;border-radius:1px;font-size:7.9px;line-height:12.8px;color:#d9b93a;">1: Vocals</div>
<svg style="position:absolute;left:371.6px;top:200px" width="52" height="32" viewBox="371.6 200 52 32"><circle cx="394.40" cy="203.90" r="1.05" fill="#a0a0a0"/><circle cx="384.50" cy="208.00" r="1.05" fill="#a0a0a0"/><circle cx="380.40" cy="217.90" r="1.05" fill="#a0a0a0"/><circle cx="384.50" cy="227.80" r="1.05" fill="#a0a0a0"/><circle cx="404.30" cy="227.80" r="1.05" fill="#a0a0a0"/><circle cx="408.40" cy="217.90" r="1.05" fill="#a0a0a0"/><circle cx="404.30" cy="208.00" r="1.05" fill="#a0a0a0"/><circle cx="394.40000000000003" cy="217.9" r="11" fill="#474747"/><circle cx="394.40000000000003" cy="217.9" r="9.7" fill="#363636"/><circle cx="397.00000000000006" cy="213.0" r="1.75" fill="#44dd55"/><rect x="412.8" y="205.9" width="1.2" height="22.6" fill="#2a2a2a"/><circle cx="413.40000000000003" cy="228.5" r="1.8" fill="#44dd55"/></svg>
<div class="btn" style="left:374.8px;top:233.5px;width:21px;height:11.2px;background:#353535;border-radius:1px;font-size:8px;line-height:12.4px;color:#5cd264;">-13.0</div>
<div class="btn" style="left:398.0px;top:233.5px;width:21.4px;height:11.2px;background:#353535;border-radius:1px;font-size:8px;line-height:12.4px;color:#eeeeee;">-3.0</div>
<svg style="position:absolute;left:371.6px;top:255px" width="52" height="100" viewBox="371.6 255 52 100"><rect x="381.6" y="258.8" width="9.4" height="26" fill="#363636"/><rect x="381.6" y="288" width="9.4" height="62" fill="#363636"/><text x="379.40000000000003" y="261.5" font-size="5.4" fill="#b5b5b5" text-anchor="end" font-family="Liberation Sans">0</text><rect x="379.90000000000003" y="259.3" width="1.2" height="0.6" fill="#9a9a9a"/><text x="379.40000000000003" y="267.7" font-size="5.4" fill="#b5b5b5" text-anchor="end" font-family="Liberation Sans">12</text><rect x="379.90000000000003" y="265.5" width="1.2" height="0.6" fill="#9a9a9a"/><text x="379.40000000000003" y="273.9" font-size="5.4" fill="#b5b5b5" text-anchor="end" font-family="Liberation Sans">24</text><rect x="379.90000000000003" y="271.7" width="1.2" height="0.6" fill="#9a9a9a"/><text x="379.40000000000003" y="280.09999999999997" font-size="5.4" fill="#b5b5b5" text-anchor="end" font-family="Liberation Sans">40</text><rect x="379.90000000000003" y="277.9" width="1.2" height="0.6" fill="#9a9a9a"/><text x="379.40000000000003" y="286.09999999999997" font-size="5.4" fill="#b5b5b5" text-anchor="end" font-family="Liberation Sans">60</text><rect x="379.90000000000003" y="283.9" width="1.2" height="0.6" fill="#9a9a9a"/><text x="379.40000000000003" y="290.5" font-size="5.4" fill="#b5b5b5" text-anchor="end" font-family="Liberation Sans">0</text><rect x="379.90000000000003" y="288.3" width="1.2" height="0.6" fill="#9a9a9a"/><text x="379.40000000000003" y="299.4" font-size="5.4" fill="#b5b5b5" text-anchor="end" font-family="Liberation Sans">6</text><rect x="379.90000000000003" y="297.2" width="1.2" height="0.6" fill="#9a9a9a"/><text x="379.40000000000003" y="307.9" font-size="5.4" fill="#b5b5b5" text-anchor="end" font-family="Liberation Sans">12</text><rect x="379.90000000000003" y="305.7" width="1.2" height="0.6" fill="#9a9a9a"/><text x="379.40000000000003" y="316.2" font-size="5.4" fill="#b5b5b5" text-anchor="end" font-family="Liberation Sans">18</text><rect x="379.90000000000003" y="314.0" width="1.2" height="0.6" fill="#9a9a9a"/><text x="379.40000000000003" y="324.09999999999997" font-size="5.4" fill="#b5b5b5" text-anchor="end" font-family="Liberation Sans">24</text><rect x="379.90000000000003" y="321.9" width="1.2" height="0.6" fill="#9a9a9a"/><text x="379.40000000000003" y="329.7" font-size="5.4" fill="#b5b5b5" text-anchor="end" font-family="Liberation Sans">30</text><rect x="379.90000000000003" y="327.5" width="1.2" height="0.6" fill="#9a9a9a"/><text x="379.40000000000003" y="337.9" font-size="5.4" fill="#b5b5b5" text-anchor="end" font-family="Liberation Sans">40</text><rect x="379.90000000000003" y="335.7" width="1.2" height="0.6" fill="#9a9a9a"/><text x="379.40000000000003" y="346.9" font-size="5.4" fill="#b5b5b5" text-anchor="end" font-family="Liberation Sans">50</text><rect x="379.90000000000003" y="344.7" width="1.2" height="0.6" fill="#9a9a9a"/><text x="379.40000000000003" y="351.2" font-size="5.4" fill="#b5b5b5" text-anchor="end" font-family="Liberation Sans">60</text><rect x="379.90000000000003" y="349.0" width="1.2" height="0.6" fill="#9a9a9a"/><rect x="383.8" y="275" width="1.2" height="9.5" fill="#4cc95a"/><rect x="387.40000000000003" y="273" width="1.2" height="11.5" fill="#4cc95a"/><polygon points="382.30,350.00 382.30,335.85 382.80,335.85 382.80,332.69 383.30,332.69 383.30,332.88 383.80,332.88 383.80,332.16 384.30,332.16 384.30,330.10 384.80,330.10 384.80,326.15 385.30,326.15 385.30,323.49 385.80,323.49 385.80,319.77 386.30,319.77 386.30,317.40 386.80,317.40 386.80,313.29 387.30,313.29 387.30,317.25 387.80,317.25 387.80,320.50 388.30,320.50 388.30,323.25 388.80,323.25 388.80,327.54 389.30,327.54 389.30,331.68 389.80,331.68 389.80,332.46 390.30,332.46 390.30,335.68 390.80,335.68 390.30,350.00" fill="#40b04d"/><rect x="407.8" y="259" width="1.3" height="91" fill="#2c2c2c"/><rect x="401.0" y="260.20000000000005" width="6.3" height="0.8" fill="#9a9a9a"/><rect x="401.0" y="271.6" width="6.3" height="0.8" fill="#9a9a9a"/><rect x="400.0" y="282.35" width="7.3" height="1.3" fill="#c8c8c8"/><rect x="401.0" y="294.3" width="6.3" height="0.8" fill="#9a9a9a"/><rect x="401.0" y="305.8" width="6.3" height="0.8" fill="#9a9a9a"/><rect x="401.0" y="313.40000000000003" width="6.3" height="0.8" fill="#9a9a9a"/><rect x="401.0" y="323.0" width="6.3" height="0.8" fill="#9a9a9a"/><rect x="401.0" y="330.3" width="6.3" height="0.8" fill="#9a9a9a"/><rect x="401.0" y="337.6" width="6.3" height="0.8" fill="#9a9a9a"/><rect x="401.0" y="343.0" width="6.3" height="0.8" fill="#9a9a9a"/><rect x="401.0" y="348.0" width="6.3" height="0.8" fill="#9a9a9a"/><rect x="404.6" y="264.05" width="2.7" height="0.7" fill="#8a8a8a"/><rect x="404.6" y="267.84999999999997" width="2.7" height="0.7" fill="#8a8a8a"/><rect x="404.6" y="275.31666666666666" width="2.7" height="0.7" fill="#8a8a8a"/><rect x="404.6" y="278.9833333333333" width="2.7" height="0.7" fill="#8a8a8a"/><rect x="404.6" y="286.54999999999995" width="2.7" height="0.7" fill="#8a8a8a"/><rect x="404.6" y="290.45" width="2.7" height="0.7" fill="#8a8a8a"/><rect x="404.6" y="298.1833333333333" width="2.7" height="0.7" fill="#8a8a8a"/><rect x="404.6" y="302.01666666666665" width="2.7" height="0.7" fill="#8a8a8a"/><rect x="404.6" y="307.75" width="2.7" height="0.7" fill="#8a8a8a"/><rect x="404.6" y="309.65" width="2.7" height="0.7" fill="#8a8a8a"/><rect x="404.6" y="311.54999999999995" width="2.7" height="0.7" fill="#8a8a8a"/><rect x="404.6" y="316.65" width="2.7" height="0.7" fill="#8a8a8a"/><rect x="404.6" y="319.84999999999997" width="2.7" height="0.7" fill="#8a8a8a"/><rect x="404.6" y="324.87499999999994" width="2.7" height="0.7" fill="#8a8a8a"/><rect x="404.6" y="326.69999999999993" width="2.7" height="0.7" fill="#8a8a8a"/><rect x="404.6" y="328.525" width="2.7" height="0.7" fill="#8a8a8a"/><rect x="404.6" y="332.17499999999995" width="2.7" height="0.7" fill="#8a8a8a"/><rect x="404.6" y="334.0" width="2.7" height="0.7" fill="#8a8a8a"/><rect x="404.6" y="335.825" width="2.7" height="0.7" fill="#8a8a8a"/><rect x="404.6" y="340.34999999999997" width="2.7" height="0.7" fill="#8a8a8a"/><rect x="404.6" y="345.54999999999995" width="2.7" height="0.7" fill="#8a8a8a"/><defs><linearGradient id="cg2" x1="0" y1="0" x2="0" y2="1"><stop offset="0" stop-color="#8a8a8a"/><stop offset="0.04" stop-color="#e8e8e8"/><stop offset="0.14" stop-color="#c8c8c8"/><stop offset="0.2" stop-color="#a4a4a4"/><stop offset="0.46" stop-color="#8c8c8c"/><stop offset="0.5" stop-color="#6a6a6a"/><stop offset="0.54" stop-color="#d6d6d6"/><stop offset="0.82" stop-color="#e2e2e2"/><stop offset="0.88" stop-color="#9a9a9a"/><stop offset="1" stop-color="#777"/></linearGradient></defs><rect x="402.6" y="283.8" width="11.6" height="23.5" rx="1" fill="#2a2a2a" opacity="0.5"/><rect x="402.40000000000003" y="283.2" width="11.6" height="23.5" rx="1" fill="url(#cg2)"/></svg>
<div class="btn" style="left:375.3px;top:353.8px;width:19.5px;height:10.4px;background:#5f5f5f;font-size:7.6px;line-height:12px;color:#c4c4c4;">R&nbsp;&nbsp;&nbsp;I</div>
<div class="btn" style="left:374.6px;top:367.3px;width:20.2px;height:10.2px;background:#646464;font-size:8.5px;line-height:12.2px;color:#f6f6f6;-webkit-text-stroke:0.3px #f6f6f6;">M</div>
<div class="btn" style="left:398.6px;top:367.3px;width:20.2px;height:10.2px;background:#646464;font-size:8.5px;line-height:12.2px;color:#f6f6f6;-webkit-text-stroke:0.3px #f6f6f6;">S</div>
<div style="position:absolute;left:475.2px;top:75.4px;width:1px;height:306px;background:#4a4a4a;"></div>
<div class="btn" style="left:427.4px;top:81px;width:43.5px;height:10.5px;background:#5c5c5c;"></div>
<div style="position:absolute;left:438.59999999999997px;top:81px;width:0.8px;height:10.5px;background:#545454;"></div>
<div class="t" style="left:439.59999999999997px;top:83.2px;width:31px;text-align:center;font-size:7.5px;color:#2c2c2c;">Input</div>
<svg style="position:absolute;left:428.4px;top:81.7px" width="9.5" height="9.5" viewBox="0 0 9.5 9.5"><rect x="1.7" y="1.7" width="6.1" height="6.1" fill="none" stroke="#e8e8e8" stroke-width="0.8"/><rect x="0.8" y="0.8" width="1.8" height="1.8" fill="#fff"/><rect x="6.9" y="0.8" width="1.8" height="1.8" fill="#fff"/><rect x="0.8" y="6.9" width="1.8" height="1.8" fill="#fff"/><rect x="6.9" y="6.9" width="1.8" height="1.8" fill="#fff"/></svg>
<div style="position:absolute;left:427.4px;top:98px;width:43.5px;height:61px;background:#4c4c4c;border:0.6px solid #484848;border-radius:3px;"></div>
<div class="fx" style="left:427.4px;top:98.3px;width:43.5px;">Noise Gate</div>
<div class="fx" style="left:427.4px;top:109.64999999999999px;width:43.5px;">Cnsl EQ</div>
<div class="fx" style="left:427.4px;top:121.0px;width:43.5px;">Compressor</div>
<div class="fx" style="left:427.4px;top:132.35px;width:43.5px;">Delay D</div>
<div class="btn" style="left:427.4px;top:174.4px;width:43.5px;height:10.3px;background:#666666;font-size:7.6px;line-height:12.4px;color:#ececec;">Surround</div>
<div class="btn" style="left:427.4px;top:189.4px;width:43.5px;height:11.5px;background:#393939;border-radius:1px;font-size:7.9px;line-height:12.8px;color:#d9b93a;">1: Vocals</div>
<svg style="position:absolute;left:423.9px;top:200px" width="52" height="32" viewBox="423.9 200 52 32"><circle cx="446.70" cy="203.90" r="1.05" fill="#a0a0a0"/><circle cx="436.80" cy="208.00" r="1.05" fill="#a0a0a0"/><circle cx="432.70" cy="217.90" r="1.05" fill="#a0a0a0"/><circle cx="436.80" cy="227.80" r="1.05" fill="#a0a0a0"/><circle cx="456.60" cy="227.80" r="1.05" fill="#a0a0a0"/><circle cx="460.70" cy="217.90" r="1.05" fill="#a0a0a0"/><circle cx="456.60" cy="208.00" r="1.05" fill="#a0a0a0"/><circle cx="446.7" cy="217.9" r="11" fill="#474747"/><circle cx="446.7" cy="217.9" r="9.7" fill="#363636"/><circle cx="445.9" cy="213.5" r="1.75" fill="#44dd55"/><rect x="465.09999999999997" y="205.9" width="1.2" height="22.6" fill="#2a2a2a"/><circle cx="465.7" cy="228.5" r="1.8" fill="#44dd55"/></svg>
<div class="btn" style="left:427.09999999999997px;top:233.5px;width:21px;height:11.2px;background:#353535;border-radius:1px;font-size:8px;line-height:12.4px;color:#5cd264;">-12.3</div>
<div class="btn" style="left:450.29999999999995px;top:233.5px;width:21.4px;height:11.2px;background:#353535;border-radius:1px;font-size:8px;line-height:12.4px;color:#eeeeee;">-2.9</div>
<svg style="position:absolute;left:423.9px;top:255px" width="52" height="100" viewBox="423.9 255 52 100"><rect x="433.9" y="258.8" width="9.4" height="26" fill="#363636"/><rect x="433.9" y="288" width="9.4" height="62" fill="#363636"/><text x="431.7" y="261.5" font-size="5.4" fill="#b5b5b5" text-anchor="end" font-family="Liberation Sans">0</text><rect x="432.2" y="259.3" width="1.2" height="0.6" fill="#9a9a9a"/><text x="431.7" y="267.7" font-size="5.4" fill="#b5b5b5" text-anchor="end" font-family="Liberation Sans">12</text><rect x="432.2" y="265.5" width="1.2" height="0.6" fill="#9a9a9a"/><text x="431.7" y="273.9" font-size="5.4" fill="#b5b5b5" text-anchor="end" font-family="Liberation Sans">24</text><rect x="432.2" y="271.7" width="1.2" height="0.6" fill="#9a9a9a"/><text x="431.7" y="280.09999999999997" font-size="5.4" fill="#b5b5b5" text-anchor="end" font-family="Liberation Sans">40</text><rect x="432.2" y="277.9" width="1.2" height="0.6" fill="#9a9a9a"/><text x="431.7" y="286.09999999999997" font-size="5.4" fill="#b5b5b5" text-anchor="end" font-family="Liberation Sans">60</text><rect x="432.2" y="283.9" width="1.2" height="0.6" fill="#9a9a9a"/><text x="431.7" y="290.5" font-size="5.4" fill="#b5b5b5" text-anchor="end" font-family="Liberation Sans">0</text><rect x="432.2" y="288.3" width="1.2" height="0.6" fill="#9a9a9a"/><text x="431.7" y="299.4" font-size="5.4" fill="#b5b5b5" text-anchor="end" font-family="Liberation Sans">6</text><rect x="432.2" y="297.2" width="1.2" height="0.6" fill="#9a9a9a"/><text x="431.7" y="307.9" font-size="5.4" fill="#b5b5b5" text-anchor="end" font-family="Liberation Sans">12</text><rect x="432.2" y="305.7" width="1.2" height="0.6" fill="#9a9a9a"/><text x="431.7" y="316.2" font-size="5.4" fill="#b5b5b5" text-anchor="end" font-family="Liberation Sans">18</text><rect x="432.2" y="314.0" width="1.2" height="0.6" fill="#9a9a9a"/><text x="431.7" y="324.09999999999997" font-size="5.4" fill="#b5b5b5" text-anchor="end" font-family="Liberation Sans">24</text><rect x="432.2" y="321.9" width="1.2" height="0.6" fill="#9a9a9a"/><text x="431.7" y="329.7" font-size="5.4" fill="#b5b5b5" text-anchor="end" font-family="Liberation Sans">30</text><rect x="432.2" y="327.5" width="1.2" height="0.6" fill="#9a9a9a"/><text x="431.7" y="337.9" font-size="5.4" fill="#b5b5b5" text-anchor="end" font-family="Liberation Sans">40</text><rect x="432.2" y="335.7" width="1.2" height="0.6" fill="#9a9a9a"/><text x="431.7" y="346.9" font-size="5.4" fill="#b5b5b5" text-anchor="end" font-family="Liberation Sans">50</text><rect x="432.2" y="344.7" width="1.2" height="0.6" fill="#9a9a9a"/><text x="431.7" y="351.2" font-size="5.4" fill="#b5b5b5" text-anchor="end" font-family="Liberation Sans">60</text><rect x="432.2" y="349.0" width="1.2" height="0.6" fill="#9a9a9a"/><rect x="436.09999999999997" y="272.3" width="1.2" height="12.199999999999989" fill="#4cc95a"/><rect x="439.7" y="272.3" width="1.2" height="12.199999999999989" fill="#4cc95a"/><polygon points="434.60,350.00 434.60,327.04 435.10,327.04 435.10,324.12 435.60,324.12 435.60,324.78 436.10,324.78 436.10,323.96 436.60,323.96 436.60,324.80 437.10,324.80 437.10,316.72 437.60,316.72 437.60,309.14 438.10,309.14 438.10,306.89 438.60,306.89 438.60,307.01 439.10,307.01 439.10,311.54 439.60,311.54 439.60,319.31 440.10,319.31 440.10,323.79 440.60,323.79 440.60,322.32 441.10,322.32 441.10,325.66 441.60,325.66 441.60,324.87 442.10,324.87 442.10,325.56 442.60,325.56 442.60,325.93 443.10,325.93 442.60,350.00" fill="#40b04d"/><rect x="460.09999999999997" y="259" width="1.3" height="91" fill="#2c2c2c"/><rect x="453.29999999999995" y="260.20000000000005" width="6.3" height="0.8" fill="#9a9a9a"/><rect x="453.29999999999995" y="271.6" width="6.3" height="0.8" fill="#9a9a9a"/><rect x="452.29999999999995" y="282.35" width="7.3" height="1.3" fill="#c8c8c8"/><rect x="453.29999999999995" y="294.3" width="6.3" height="0.8" fill="#9a9a9a"/><rect x="453.29999999999995" y="305.8" width="6.3" height="0.8" fill="#9a9a9a"/><rect x="453.29999999999995" y="313.40000000000003" width="6.3" height="0.8" fill="#9a9a9a"/><rect x="453.29999999999995" y="323.0" width="6.3" height="0.8" fill="#9a9a9a"/><rect x="453.29999999999995" y="330.3" width="6.3" height="0.8" fill="#9a9a9a"/><rect x="453.29999999999995" y="337.6" width="6.3" height="0.8" fill="#9a9a9a"/><rect x="453.29999999999995" y="343.0" width="6.3" height="0.8" fill="#9a9a9a"/><rect x="453.29999999999995" y="348.0" width="6.3" height="0.8" fill="#9a9a9a"/><rect x="456.9" y="264.05" width="2.7" height="0.7" fill="#8a8a8a"/><rect x="456.9" y="267.84999999999997" width="2.7" height="0.7" fill="#8a8a8a"/><rect x="456.9" y="275.31666666666666" width="2.7" height="0.7" fill="#8a8a8a"/><rect x="456.9" y="278.9833333333333" width="2.7" height="0.7" fill="#8a8a8a"/><rect x="456.9" y="286.54999999999995" width="2.7" height="0.7" fill="#8a8a8a"/><rect x="456.9" y="290.45" width="2.7" height="0.7" fill="#8a8a8a"/><rect x="456.9" y="298.1833333333333" width="2.7" height="0.7" fill="#8a8a8a"/><rect x="456.9" y="302.01666666666665" width="2.7" height="0.7" fill="#8a8a8a"/><rect x="456.9" y="307.75" width="2.7" height="0.7" fill="#8a8a8a"/><rect x="456.9" y="309.65" width="2.7" height="0.7" fill="#8a8a8a"/><rect x="456.9" y="311.54999999999995" width="2.7" height="0.7" fill="#8a8a8a"/><rect x="456.9" y="316.65" width="2.7" height="0.7" fill="#8a8a8a"/><rect x="456.9" y="319.84999999999997" width="2.7" height="0.7" fill="#8a8a8a"/><rect x="456.9" y="324.87499999999994" width="2.7" height="0.7" fill="#8a8a8a"/><rect x="456.9" y="326.69999999999993" width="2.7" height="0.7" fill="#8a8a8a"/><rect x="456.9" y="328.525" width="2.7" height="0.7" fill="#8a8a8a"/><rect x="456.9" y="332.17499999999995" width="2.7" height="0.7" fill="#8a8a8a"/><rect x="456.9" y="334.0" width="2.7" height="0.7" fill="#8a8a8a"/><rect x="456.9" y="335.825" width="2.7" height="0.7" fill="#8a8a8a"/><rect x="456.9" y="340.34999999999997" width="2.7" height="0.7" fill="#8a8a8a"/><rect x="456.9" y="345.54999999999995" width="2.7" height="0.7" fill="#8a8a8a"/><defs><linearGradient id="cg3" x1="0" y1="0" x2="0" y2="1"><stop offset="0" stop-color="#8a8a8a"/><stop offset="0.04" stop-color="#e8e8e8"/><stop offset="0.14" stop-color="#c8c8c8"/><stop offset="0.2" stop-color="#a4a4a4"/><stop offset="0.46" stop-color="#8c8c8c"/><stop offset="0.5" stop-color="#6a6a6a"/><stop offset="0.54" stop-color="#d6d6d6"/><stop offset="0.82" stop-color="#e2e2e2"/><stop offset="0.88" stop-color="#9a9a9a"/><stop offset="1" stop-color="#777"/></linearGradient></defs><rect x="454.9" y="282.3" width="11.6" height="23.5" rx="1" fill="#2a2a2a" opacity="0.5"/><rect x="454.7" y="281.7" width="11.6" height="23.5" rx="1" fill="url(#cg3)"/></svg>
<div class="btn" style="left:427.59999999999997px;top:353.8px;width:19.5px;height:10.4px;background:#5f5f5f;font-size:7.6px;line-height:12px;color:#c4c4c4;">R&nbsp;&nbsp;&nbsp;I</div>
<div class="btn" style="left:426.9px;top:367.3px;width:20.2px;height:10.2px;background:#646464;font-size:8.5px;line-height:12.2px;color:#f6f6f6;-webkit-text-stroke:0.3px #f6f6f6;">M</div>
<div class="btn" style="left:450.9px;top:367.3px;width:20.2px;height:10.2px;background:#646464;font-size:8.5px;line-height:12.2px;color:#f6f6f6;-webkit-text-stroke:0.3px #f6f6f6;">S</div>
<div style="position:absolute;left:527.5px;top:75.4px;width:1px;height:306px;background:#4a4a4a;"></div>
<div class="btn" style="left:479.7px;top:81px;width:43.5px;height:10.5px;background:#5c5c5c;"></div>
<div style="position:absolute;left:490.9px;top:81px;width:0.8px;height:10.5px;background:#545454;"></div>
<div class="t" style="left:491.9px;top:83.2px;width:31px;text-align:center;font-size:7.5px;color:#2c2c2c;">Input</div>
<svg style="position:absolute;left:480.7px;top:81.7px" width="9.5" height="9.5" viewBox="0 0 9.5 9.5"><circle cx="4.75" cy="4.75" r="2.5" fill="none" stroke="#eee" stroke-width="0.9"/></svg>
<div style="position:absolute;left:479.7px;top:98px;width:43.5px;height:61px;background:#4c4c4c;border:0.6px solid #484848;border-radius:3px;"></div>
<div class="fx" style="left:479.7px;top:98.3px;width:43.5px;">Noise Gate</div>
<div class="fx" style="left:479.7px;top:109.64999999999999px;width:43.5px;">Graph EQ</div>
<div class="fx" style="left:479.7px;top:121.0px;width:43.5px;">Compressor</div>
<div class="fx" style="left:479.7px;top:132.35px;width:43.5px;">St-Delay</div>
<div class="btn" style="left:479.7px;top:174.4px;width:43.5px;height:10.3px;background:#666666;font-size:7.6px;line-height:12.4px;color:#ececec;">Object</div>
<div class="btn" style="left:479.7px;top:189.4px;width:43.5px;height:11.5px;background:#393939;border-radius:1px;font-size:7.9px;line-height:12.8px;color:#d9b93a;">1: Vocals</div>
<svg style="position:absolute;left:476.2px;top:200px" width="52" height="32" viewBox="476.2 200 52 32"><rect x="487.59999999999997" y="206.3" width="22.6" height="22.6" rx="1.5" fill="#3b3b3b" stroke="#2a2a2a" stroke-width="0.9"/><line x1="490.42" y1="206.3" x2="490.42" y2="228.9" stroke="#515151" stroke-width="0.4"/><line x1="487.59999999999997" y1="209.12" x2="510.2" y2="209.12" stroke="#515151" stroke-width="0.4"/><line x1="493.25" y1="206.3" x2="493.25" y2="228.9" stroke="#515151" stroke-width="0.4"/><line x1="487.59999999999997" y1="211.95" x2="510.2" y2="211.95" stroke="#515151" stroke-width="0.4"/><line x1="496.07" y1="206.3" x2="496.07" y2="228.9" stroke="#515151" stroke-width="0.4"/><line x1="487.59999999999997" y1="214.78" x2="510.2" y2="214.78" stroke="#515151" stroke-width="0.4"/><line x1="498.90" y1="206.3" x2="498.90" y2="228.9" stroke="#515151" stroke-width="0.4"/><line x1="487.59999999999997" y1="217.60" x2="510.2" y2="217.60" stroke="#515151" stroke-width="0.4"/><line x1="501.72" y1="206.3" x2="501.72" y2="228.9" stroke="#515151" stroke-width="0.4"/><line x1="487.59999999999997" y1="220.43" x2="510.2" y2="220.43" stroke="#515151" stroke-width="0.4"/><line x1="504.55" y1="206.3" x2="504.55" y2="228.9" stroke="#515151" stroke-width="0.4"/><line x1="487.59999999999997" y1="223.25" x2="510.2" y2="223.25" stroke="#515151" stroke-width="0.4"/><line x1="507.37" y1="206.3" x2="507.37" y2="228.9" stroke="#515151" stroke-width="0.4"/><line x1="487.59999999999997" y1="226.08" x2="510.2" y2="226.08" stroke="#515151" stroke-width="0.4"/><path d="M488.40,207.10 L500.20,208.10 L499.80,218.20 L488.40,216.60 Z" fill="#3f7d48" stroke="#57a560" stroke-width="0.5" opacity="0.95"/><circle cx="493.79999999999995" cy="211.4" r="1.75" fill="#44dd55"/><rect x="517.4" y="205.9" width="1.2" height="22.6" fill="#2a2a2a"/><circle cx="518.0" cy="223.7" r="1.8" fill="#44dd55"/></svg>
<div class="btn" style="left:479.4px;top:233.5px;width:21px;height:11.2px;background:#353535;border-radius:1px;font-size:8px;line-height:12.4px;color:#5cd264;">-25.9</div>
<div class="btn" style="left:502.59999999999997px;top:233.5px;width:21.4px;height:11.2px;background:#353535;border-radius:1px;font-size:8px;line-height:12.4px;color:#eeeeee;">-2.6</div>
<svg style="position:absolute;left:476.2px;top:255px" width="52" height="100" viewBox="476.2 255 52 100"><rect x="486.4" y="258.8" width="7.3" height="90.6" fill="#363636"/><text x="484.0" y="262.0" font-size="5.4" fill="#b5b5b5" text-anchor="end" font-family="Liberation Sans">0</text><rect x="484.5" y="259.8" width="1.2" height="0.6" fill="#9a9a9a"/><text x="484.0" y="267.9" font-size="5.4" fill="#b5b5b5" text-anchor="end" font-family="Liberation Sans">3</text><rect x="484.5" y="265.7" width="1.2" height="0.6" fill="#9a9a9a"/><text x="484.0" y="274.09999999999997" font-size="5.4" fill="#b5b5b5" text-anchor="end" font-family="Liberation Sans">6</text><rect x="484.5" y="271.9" width="1.2" height="0.6" fill="#9a9a9a"/><text x="484.0" y="279.9" font-size="5.4" fill="#b5b5b5" text-anchor="end" font-family="Liberation Sans">9</text><rect x="484.5" y="277.7" width="1.2" height="0.6" fill="#9a9a9a"/><text x="484.0" y="285.59999999999997" font-size="5.4" fill="#b5b5b5" text-anchor="end" font-family="Liberation Sans">12</text><rect x="484.5" y="283.4" width="1.2" height="0.6" fill="#9a9a9a"/><text x="484.0" y="291.5" font-size="5.4" fill="#b5b5b5" text-anchor="end" font-family="Liberation Sans">15</text><rect x="484.5" y="289.3" width="1.2" height="0.6" fill="#9a9a9a"/><text x="484.0" y="297.59999999999997" font-size="5.4" fill="#b5b5b5" text-anchor="end" font-family="Liberation Sans">18</text><rect x="484.5" y="295.4" width="1.2" height="0.6" fill="#9a9a9a"/><text x="484.0" y="303.4" font-size="5.4" fill="#b5b5b5" text-anchor="end" font-family="Liberation Sans">21</text><rect x="484.5" y="301.2" width="1.2" height="0.6" fill="#9a9a9a"/><text x="484.0" y="309.09999999999997" font-size="5.4" fill="#b5b5b5" text-anchor="end" font-family="Liberation Sans">24</text><rect x="484.5" y="306.9" width="1.2" height="0.6" fill="#9a9a9a"/><text x="484.0" y="317.2" font-size="5.4" fill="#b5b5b5" text-anchor="end" font-family="Liberation Sans">30</text><rect x="484.5" y="315.0" width="1.2" height="0.6" fill="#9a9a9a"/><text x="484.0" y="324.09999999999997" font-size="5.4" fill="#b5b5b5" text-anchor="end" font-family="Liberation Sans">35</text><rect x="484.5" y="321.9" width="1.2" height="0.6" fill="#9a9a9a"/><text x="484.0" y="330.7" font-size="5.4" fill="#b5b5b5" text-anchor="end" font-family="Liberation Sans">40</text><rect x="484.5" y="328.5" width="1.2" height="0.6" fill="#9a9a9a"/><text x="484.0" y="337.2" font-size="5.4" fill="#b5b5b5" text-anchor="end" font-family="Liberation Sans">45</text><rect x="484.5" y="335.0" width="1.2" height="0.6" fill="#9a9a9a"/><text x="484.0" y="343.9" font-size="5.4" fill="#b5b5b5" text-anchor="end" font-family="Liberation Sans">50</text><rect x="484.5" y="341.7" width="1.2" height="0.6" fill="#9a9a9a"/><text x="484.0" y="351.0" font-size="5.4" fill="#b5b5b5" text-anchor="end" font-family="Liberation Sans">60</text><rect x="484.5" y="348.8" width="1.2" height="0.6" fill="#9a9a9a"/><rect x="487.04999999999995" y="310" width="2.3" height="39.39999999999998" fill="#55e060"/><rect x="490.25" y="310" width="2.3" height="39.39999999999998" fill="#55e060"/><rect x="512.4" y="259" width="1.3" height="91" fill="#2c2c2c"/><rect x="505.59999999999997" y="260.20000000000005" width="6.3" height="0.8" fill="#9a9a9a"/><rect x="505.59999999999997" y="271.6" width="6.3" height="0.8" fill="#9a9a9a"/><rect x="504.59999999999997" y="282.35" width="7.3" height="1.3" fill="#c8c8c8"/><rect x="505.59999999999997" y="294.3" width="6.3" height="0.8" fill="#9a9a9a"/><rect x="505.59999999999997" y="305.8" width="6.3" height="0.8" fill="#9a9a9a"/><rect x="505.59999999999997" y="313.40000000000003" width="6.3" height="0.8" fill="#9a9a9a"/><rect x="505.59999999999997" y="323.0" width="6.3" height="0.8" fill="#9a9a9a"/><rect x="505.59999999999997" y="330.3" width="6.3" height="0.8" fill="#9a9a9a"/><rect x="505.59999999999997" y="337.6" width="6.3" height="0.8" fill="#9a9a9a"/><rect x="505.59999999999997" y="343.0" width="6.3" height="0.8" fill="#9a9a9a"/><rect x="505.59999999999997" y="348.0" width="6.3" height="0.8" fill="#9a9a9a"/><rect x="509.2" y="264.05" width="2.7" height="0.7" fill="#8a8a8a"/><rect x="509.2" y="267.84999999999997" width="2.7" height="0.7" fill="#8a8a8a"/><rect x="509.2" y="275.31666666666666" width="2.7" height="0.7" fill="#8a8a8a"/><rect x="509.2" y="278.9833333333333" width="2.7" height="0.7" fill="#8a8a8a"/><rect x="509.2" y="286.54999999999995" width="2.7" height="0.7" fill="#8a8a8a"/><rect x="509.2" y="290.45" width="2.7" height="0.7" fill="#8a8a8a"/><rect x="509.2" y="298.1833333333333" width="2.7" height="0.7" fill="#8a8a8a"/><rect x="509.2" y="302.01666666666665" width="2.7" height="0.7" fill="#8a8a8a"/><rect x="509.2" y="307.75" width="2.7" height="0.7" fill="#8a8a8a"/><rect x="509.2" y="309.65" width="2.7" height="0.7" fill="#8a8a8a"/><rect x="509.2" y="311.54999999999995" width="2.7" height="0.7" fill="#8a8a8a"/><rect x="509.2" y="316.65" width="2.7" height="0.7" fill="#8a8a8a"/><rect x="509.2" y="319.84999999999997" width="2.7" height="0.7" fill="#8a8a8a"/><rect x="509.2" y="324.87499999999994" width="2.7" height="0.7" fill="#8a8a8a"/><rect x="509.2" y="326.69999999999993" width="2.7" height="0.7" fill="#8a8a8a"/><rect x="509.2" y="328.525" width="2.7" height="0.7" fill="#8a8a8a"/><rect x="509.2" y="332.17499999999995" width="2.7" height="0.7" fill="#8a8a8a"/><rect x="509.2" y="334.0" width="2.7" height="0.7" fill="#8a8a8a"/><rect x="509.2" y="335.825" width="2.7" height="0.7" fill="#8a8a8a"/><rect x="509.2" y="340.34999999999997" width="2.7" height="0.7" fill="#8a8a8a"/><rect x="509.2" y="345.54999999999995" width="2.7" height="0.7" fill="#8a8a8a"/><defs><linearGradient id="cg4" x1="0" y1="0" x2="0" y2="1"><stop offset="0" stop-color="#8a8a8a"/><stop offset="0.04" stop-color="#e8e8e8"/><stop offset="0.14" stop-color="#c8c8c8"/><stop offset="0.2" stop-color="#a4a4a4"/><stop offset="0.46" stop-color="#8c8c8c"/><stop offset="0.5" stop-color="#6a6a6a"/><stop offset="0.54" stop-color="#d6d6d6"/><stop offset="0.82" stop-color="#e2e2e2"/><stop offset="0.88" stop-color="#9a9a9a"/><stop offset="1" stop-color="#777"/></linearGradient></defs><rect x="507.2" y="282.1" width="11.6" height="23.5" rx="1" fill="#2a2a2a" opacity="0.5"/><rect x="507.0" y="281.5" width="11.6" height="23.5" rx="1" fill="url(#cg4)"/></svg>
<div class="btn" style="left:479.9px;top:353.8px;width:19.5px;height:10.4px;background:#5f5f5f;font-size:7.6px;line-height:12px;color:#c4c4c4;">R&nbsp;&nbsp;&nbsp;I</div>
<div class="btn" style="left:479.2px;top:367.3px;width:20.2px;height:10.2px;background:#646464;font-size:8.5px;line-height:12.2px;color:#f6f6f6;-webkit-text-stroke:0.3px #f6f6f6;">M</div>
<div class="btn" style="left:503.2px;top:367.3px;width:20.2px;height:10.2px;background:#646464;font-size:8.5px;line-height:12.2px;color:#f6f6f6;-webkit-text-stroke:0.3px #f6f6f6;">S</div>
<div style="position:absolute;left:579.8px;top:75.4px;width:1px;height:306px;background:#4a4a4a;"></div>
<div class="btn" style="left:532.0px;top:81px;width:43.5px;height:10.5px;background:#5c5c5c;"></div>
<div style="position:absolute;left:543.2px;top:81px;width:0.8px;height:10.5px;background:#545454;"></div>
<div class="t" style="left:544.2px;top:83.2px;width:31px;text-align:center;font-size:7.5px;color:#2c2c2c;">Input</div>
<svg style="position:absolute;left:533.0px;top:81.7px" width="9.5" height="9.5" viewBox="0 0 9.5 9.5"><rect x="1.7" y="1.7" width="6.1" height="6.1" fill="none" stroke="#e8e8e8" stroke-width="0.8"/><rect x="0.8" y="0.8" width="1.8" height="1.8" fill="#fff"/><rect x="6.9" y="0.8" width="1.8" height="1.8" fill="#fff"/><rect x="0.8" y="6.9" width="1.8" height="1.8" fill="#fff"/><rect x="6.9" y="6.9" width="1.8" height="1.8" fill="#fff"/></svg>
<div style="position:absolute;left:532.0px;top:98px;width:43.5px;height:61px;background:#4c4c4c;border:0.6px solid #484848;border-radius:3px;"></div>
<div class="fx" style="left:532.0px;top:98.3px;width:43.5px;">Noise Gate</div>
<div class="fx" style="left:532.0px;top:109.64999999999999px;width:43.5px;">Tube EQ</div>
<div class="fx" style="left:532.0px;top:121.0px;width:43.5px;">Compressor</div>
<div class="fx" style="left:532.0px;top:132.35px;width:43.5px;">St-Delay</div>
<div class="btn" style="left:532.0px;top:174.4px;width:43.5px;height:10.3px;background:#666666;font-size:7.6px;line-height:12.4px;color:#ececec;">Surround</div>
<div class="btn" style="left:532.0px;top:189.4px;width:43.5px;height:11.5px;background:#393939;border-radius:1px;font-size:7.9px;line-height:12.8px;color:#d9b93a;">1: Vocals</div>
<svg style="position:absolute;left:528.5px;top:200px" width="52" height="32" viewBox="528.5 200 52 32"><circle cx="551.30" cy="203.90" r="1.05" fill="#a0a0a0"/><circle cx="541.40" cy="208.00" r="1.05" fill="#a0a0a0"/><circle cx="537.30" cy="217.90" r="1.05" fill="#a0a0a0"/><circle cx="541.40" cy="227.80" r="1.05" fill="#a0a0a0"/><circle cx="561.20" cy="227.80" r="1.05" fill="#a0a0a0"/><circle cx="565.30" cy="217.90" r="1.05" fill="#a0a0a0"/><circle cx="561.20" cy="208.00" r="1.05" fill="#a0a0a0"/><circle cx="551.3" cy="217.9" r="11" fill="#474747"/><circle cx="551.3" cy="217.9" r="9.7" fill="#363636"/><circle cx="551.5999999999999" cy="217.3" r="1.75" fill="#44dd55"/><rect x="569.6999999999999" y="205.9" width="1.2" height="22.6" fill="#2a2a2a"/><circle cx="570.3" cy="228.5" r="1.8" fill="#44dd55"/></svg>
<div class="btn" style="left:531.7px;top:233.5px;width:21px;height:11.2px;background:#353535;border-radius:1px;font-size:8px;line-height:12.4px;color:#5cd264;">-17.5</div>
<div class="btn" style="left:554.9px;top:233.5px;width:21.4px;height:11.2px;background:#353535;border-radius:1px;font-size:8px;line-height:12.4px;color:#eeeeee;">-5.9</div>
<svg style="position:absolute;left:528.5px;top:255px" width="52" height="100" viewBox="528.5 255 52 100"><rect x="538.5" y="258.8" width="9.4" height="26" fill="#363636"/><rect x="538.5" y="288" width="9.4" height="62" fill="#363636"/><text x="536.3" y="261.5" font-size="5.4" fill="#b5b5b5" text-anchor="end" font-family="Liberation Sans">0</text><rect x="536.8" y="259.3" width="1.2" height="0.6" fill="#9a9a9a"/><text x="536.3" y="267.7" font-size="5.4" fill="#b5b5b5" text-anchor="end" font-family="Liberation Sans">12</text><rect x="536.8" y="265.5" width="1.2" height="0.6" fill="#9a9a9a"/><text x="536.3" y="273.9" font-size="5.4" fill="#b5b5b5" text-anchor="end" font-family="Liberation Sans">24</text><rect x="536.8" y="271.7" width="1.2" height="0.6" fill="#9a9a9a"/><text x="536.3" y="280.09999999999997" font-size="5.4" fill="#b5b5b5" text-anchor="end" font-family="Liberation Sans">40</text><rect x="536.8" y="277.9" width="1.2" height="0.6" fill="#9a9a9a"/><text x="536.3" y="286.09999999999997" font-size="5.4" fill="#b5b5b5" text-anchor="end" font-family="Liberation Sans">60</text><rect x="536.8" y="283.9" width="1.2" height="0.6" fill="#9a9a9a"/><text x="536.3" y="290.5" font-size="5.4" fill="#b5b5b5" text-anchor="end" font-family="Liberation Sans">0</text><rect x="536.8" y="288.3" width="1.2" height="0.6" fill="#9a9a9a"/><text x="536.3" y="299.4" font-size="5.4" fill="#b5b5b5" text-anchor="end" font-family="Liberation Sans">6</text><rect x="536.8" y="297.2" width="1.2" height="0.6" fill="#9a9a9a"/><text x="536.3" y="307.9" font-size="5.4" fill="#b5b5b5" text-anchor="end" font-family="Liberation Sans">12</text><rect x="536.8" y="305.7" width="1.2" height="0.6" fill="#9a9a9a"/><text x="536.3" y="316.2" font-size="5.4" fill="#b5b5b5" text-anchor="end" font-family="Liberation Sans">18</text><rect x="536.8" y="314.0" width="1.2" height="0.6" fill="#9a9a9a"/><text x="536.3" y="324.09999999999997" font-size="5.4" fill="#b5b5b5" text-anchor="end" font-family="Liberation Sans">24</text><rect x="536.8" y="321.9" width="1.2" height="0.6" fill="#9a9a9a"/><text x="536.3" y="329.7" font-size="5.4" fill="#b5b5b5" text-anchor="end" font-family="Liberation Sans">30</text><rect x="536.8" y="327.5" width="1.2" height="0.6" fill="#9a9a9a"/><text x="536.3" y="337.9" font-size="5.4" fill="#b5b5b5" text-anchor="end" font-family="Liberation Sans">40</text><rect x="536.8" y="335.7" width="1.2" height="0.6" fill="#9a9a9a"/><text x="536.3" y="346.9" font-size="5.4" fill="#b5b5b5" text-anchor="end" font-family="Liberation Sans">50</text><rect x="536.8" y="344.7" width="1.2" height="0.6" fill="#9a9a9a"/><text x="536.3" y="351.2" font-size="5.4" fill="#b5b5b5" text-anchor="end" font-family="Liberation Sans">60</text><rect x="536.8" y="349.0" width="1.2" height="0.6" fill="#9a9a9a"/><rect x="540.7" y="269" width="1.2" height="15.5" fill="#4cc95a"/><rect x="544.3" y="269" width="1.2" height="15.5" fill="#4cc95a"/><rect x="539.3" y="312.3" width="7.8" height="0.9" fill="#3fb04c"/><polygon points="539.20,350.00 539.20,315.70 539.70,315.70 539.70,315.70 540.20,315.70 540.20,315.70 540.70,315.70 540.70,315.70 541.20,315.70 541.20,315.70 541.70,315.70 541.70,315.70 542.20,315.70 542.20,315.70 542.70,315.70 542.70,315.70 543.20,315.70 543.20,315.70 543.70,315.70 543.70,315.70 544.20,315.70 544.20,315.70 544.70,315.70 544.70,315.70 545.20,315.70 545.20,315.70 545.70,315.70 545.70,315.70 546.20,315.70 546.20,315.70 546.70,315.70 546.70,315.70 547.20,315.70 547.20,315.70 547.70,315.70 547.20,350.00" fill="#40b04d"/><rect x="564.7" y="259" width="1.3" height="91" fill="#2c2c2c"/><rect x="557.9000000000001" y="260.20000000000005" width="6.3" height="0.8" fill="#9a9a9a"/><rect x="557.9000000000001" y="271.6" width="6.3" height="0.8" fill="#9a9a9a"/><rect x="556.9000000000001" y="282.35" width="7.3" height="1.3" fill="#c8c8c8"/><rect x="557.9000000000001" y="294.3" width="6.3" height="0.8" fill="#9a9a9a"/><rect x="557.9000000000001" y="305.8" width="6.3" height="0.8" fill="#9a9a9a"/><rect x="557.9000000000001" y="313.40000000000003" width="6.3" height="0.8" fill="#9a9a9a"/><rect x="557.9000000000001" y="323.0" width="6.3" height="0.8" fill="#9a9a9a"/><rect x="557.9000000000001" y="330.3" width="6.3" height="0.8" fill="#9a9a9a"/><rect x="557.9000000000001" y="337.6" width="6.3" height="0.8" fill="#9a9a9a"/><rect x="557.9000000000001" y="343.0" width="6.3" height="0.8" fill="#9a9a9a"/><rect x="557.9000000000001" y="348.0" width="6.3" height="0.8" fill="#9a9a9a"/><rect x="561.5" y="264.05" width="2.7" height="0.7" fill="#8a8a8a"/><rect x="561.5" y="267.84999999999997" width="2.7" height="0.7" fill="#8a8a8a"/><rect x="561.5" y="275.31666666666666" width="2.7" height="0.7" fill="#8a8a8a"/><rect x="561.5" y="278.9833333333333" width="2.7" height="0.7" fill="#8a8a8a"/><rect x="561.5" y="286.54999999999995" width="2.7" height="0.7" fill="#8a8a8a"/><rect x="561.5" y="290.45" width="2.7" height="0.7" fill="#8a8a8a"/><rect x="561.5" y="298.1833333333333" width="2.7" height="0.7" fill="#8a8a8a"/><rect x="561.5" y="302.01666666666665" width="2.7" height="0.7" fill="#8a8a8a"/><rect x="561.5" y="307.75" width="2.7" height="0.7" fill="#8a8a8a"/><rect x="561.5" y="309.65" width="2.7" height="0.7" fill="#8a8a8a"/><rect x="561.5" y="311.54999999999995" width="2.7" height="0.7" fill="#8a8a8a"/><rect x="561.5" y="316.65" width="2.7" height="0.7" fill="#8a8a8a"/><rect x="561.5" y="319.84999999999997" width="2.7" height="0.7" fill="#8a8a8a"/><rect x="561.5" y="324.87499999999994" width="2.7" height="0.7" fill="#8a8a8a"/><rect x="561.5" y="326.69999999999993" width="2.7" height="0.7" fill="#8a8a8a"/><rect x="561.5" y="328.525" width="2.7" height="0.7" fill="#8a8a8a"/><rect x="561.5" y="332.17499999999995" width="2.7" height="0.7" fill="#8a8a8a"/><rect x="561.5" y="334.0" width="2.7" height="0.7" fill="#8a8a8a"/><rect x="561.5" y="335.825" width="2.7" height="0.7" fill="#8a8a8a"/><rect x="561.5" y="340.34999999999997" width="2.7" height="0.7" fill="#8a8a8a"/><rect x="561.5" y="345.54999999999995" width="2.7" height="0.7" fill="#8a8a8a"/><defs><linearGradient id="cg5" x1="0" y1="0" x2="0" y2="1"><stop offset="0" stop-color="#8a8a8a"/><stop offset="0.04" stop-color="#e8e8e8"/><stop offset="0.14" stop-color="#c8c8c8"/><stop offset="0.2" stop-color="#a4a4a4"/><stop offset="0.46" stop-color="#8c8c8c"/><stop offset="0.5" stop-color="#6a6a6a"/><stop offset="0.54" stop-color="#d6d6d6"/><stop offset="0.82" stop-color="#e2e2e2"/><stop offset="0.88" stop-color="#9a9a9a"/><stop offset="1" stop-color="#777"/></linearGradient></defs><rect x="559.5" y="293.8" width="11.6" height="23.5" rx="1" fill="#2a2a2a" opacity="0.5"/><rect x="559.3" y="293.2" width="11.6" height="23.5" rx="1" fill="url(#cg5)"/></svg>
<div class="btn" style="left:532.2px;top:353.8px;width:19.5px;height:10.4px;background:#5f5f5f;font-size:7.6px;line-height:12px;color:#c4c4c4;">R&nbsp;&nbsp;&nbsp;I</div>
<div class="btn" style="left:531.5px;top:367.3px;width:20.2px;height:10.2px;background:#646464;font-size:8.5px;line-height:12.2px;color:#f6f6f6;-webkit-text-stroke:0.3px #f6f6f6;">M</div>
<div class="btn" style="left:555.5px;top:367.3px;width:20.2px;height:10.2px;background:#646464;font-size:8.5px;line-height:12.2px;color:#f6f6f6;-webkit-text-stroke:0.3px #f6f6f6;">S</div>
<div style="position:absolute;left:632.0999999999999px;top:75.4px;width:1px;height:306px;background:#4a4a4a;"></div>
<div class="btn" style="left:584.3px;top:81px;width:43.5px;height:10.5px;background:#5c5c5c;"></div>
<div style="position:absolute;left:595.5px;top:81px;width:0.8px;height:10.5px;background:#545454;"></div>
<div class="t" style="left:596.5px;top:83.2px;width:31px;text-align:center;font-size:7.5px;color:#2c2c2c;">Input</div>
<svg style="position:absolute;left:585.3px;top:81.7px" width="9.5" height="9.5" viewBox="0 0 9.5 9.5"><circle cx="4.75" cy="4.75" r="2.5" fill="none" stroke="#eee" stroke-width="0.9"/></svg>
<div style="position:absolute;left:584.3px;top:98px;width:43.5px;height:61px;background:#4c4c4c;border:0.6px solid #484848;border-radius:3px;"></div>
<div class="fx" style="left:584.3px;top:98.3px;width:43.5px;">Noise Gate</div>
<div class="fx" style="left:584.3px;top:109.64999999999999px;width:43.5px;">Cnsl EQ</div>
<div class="fx" style="left:584.3px;top:121.0px;width:43.5px;">Compressor</div>
<div class="fx" style="left:584.3px;top:132.35px;width:43.5px;">St-Delay</div>
<div class="btn" style="left:584.3px;top:174.4px;width:43.5px;height:10.3px;background:#666666;font-size:7.6px;line-height:12.4px;color:#ececec;">Object</div>
<div class="btn" style="left:584.3px;top:189.4px;width:43.5px;height:11.5px;background:#393939;border-radius:1px;font-size:7.9px;line-height:12.8px;color:#d9b93a;">1: Vocals</div>
<svg style="position:absolute;left:580.8px;top:200px" width="52" height="32" viewBox="580.8 200 52 32"><rect x="592.1999999999999" y="206.3" width="22.6" height="22.6" rx="1.5" fill="#3b3b3b" stroke="#2a2a2a" stroke-width="0.9"/><line x1="595.02" y1="206.3" x2="595.02" y2="228.9" stroke="#515151" stroke-width="0.4"/><line x1="592.1999999999999" y1="209.12" x2="614.8" y2="209.12" stroke="#515151" stroke-width="0.4"/><line x1="597.85" y1="206.3" x2="597.85" y2="228.9" stroke="#515151" stroke-width="0.4"/><line x1="592.1999999999999" y1="211.95" x2="614.8" y2="211.95" stroke="#515151" stroke-width="0.4"/><line x1="600.67" y1="206.3" x2="600.67" y2="228.9" stroke="#515151" stroke-width="0.4"/><line x1="592.1999999999999" y1="214.78" x2="614.8" y2="214.78" stroke="#515151" stroke-width="0.4"/><line x1="603.50" y1="206.3" x2="603.50" y2="228.9" stroke="#515151" stroke-width="0.4"/><line x1="592.1999999999999" y1="217.60" x2="614.8" y2="217.60" stroke="#515151" stroke-width="0.4"/><line x1="606.32" y1="206.3" x2="606.32" y2="228.9" stroke="#515151" stroke-width="0.4"/><line x1="592.1999999999999" y1="220.43" x2="614.8" y2="220.43" stroke="#515151" stroke-width="0.4"/><line x1="609.15" y1="206.3" x2="609.15" y2="228.9" stroke="#515151" stroke-width="0.4"/><line x1="592.1999999999999" y1="223.25" x2="614.8" y2="223.25" stroke="#515151" stroke-width="0.4"/><line x1="611.97" y1="206.3" x2="611.97" y2="228.9" stroke="#515151" stroke-width="0.4"/><line x1="592.1999999999999" y1="226.08" x2="614.8" y2="226.08" stroke="#515151" stroke-width="0.4"/><path d="M592.80,207.10 L614.20,207.10 L603.50,217.80 Z" fill="#3f7d48" stroke="#57a560" stroke-width="0.5" opacity="0.95"/><circle cx="603.4999999999999" cy="208.3" r="1.75" fill="#44dd55"/><rect x="621.9999999999999" y="205.9" width="1.2" height="22.6" fill="#2a2a2a"/><circle cx="622.5999999999999" cy="213.5" r="1.8" fill="#44dd55"/></svg>
<div class="btn" style="left:584.0px;top:233.5px;width:21px;height:11.2px;background:#353535;border-radius:1px;font-size:8px;line-height:12.4px;color:#5cd264;">-19.4</div>
<div class="btn" style="left:607.1999999999999px;top:233.5px;width:21.4px;height:11.2px;background:#353535;border-radius:1px;font-size:8px;line-height:12.4px;color:#eeeeee;">-8.4</div>
<svg style="position:absolute;left:580.8px;top:255px" width="52" height="100" viewBox="580.8 255 52 100"><rect x="591.0" y="258.8" width="7.3" height="90.6" fill="#363636"/><text x="588.5999999999999" y="262.0" font-size="5.4" fill="#b5b5b5" text-anchor="end" font-family="Liberation Sans">0</text><rect x="589.0999999999999" y="259.8" width="1.2" height="0.6" fill="#9a9a9a"/><text x="588.5999999999999" y="267.9" font-size="5.4" fill="#b5b5b5" text-anchor="end" font-family="Liberation Sans">3</text><rect x="589.0999999999999" y="265.7" width="1.2" height="0.6" fill="#9a9a9a"/><text x="588.5999999999999" y="274.09999999999997" font-size="5.4" fill="#b5b5b5" text-anchor="end" font-family="Liberation Sans">6</text><rect x="589.0999999999999" y="271.9" width="1.2" height="0.6" fill="#9a9a9a"/><text x="588.5999999999999" y="279.9" font-size="5.4" fill="#b5b5b5" text-anchor="end" font-family="Liberation Sans">9</text><rect x="589.0999999999999" y="277.7" width="1.2" height="0.6" fill="#9a9a9a"/><text x="588.5999999999999" y="285.59999999999997" font-size="5.4" fill="#b5b5b5" text-anchor="end" font-family="Liberation Sans">12</text><rect x="589.0999999999999" y="283.4" width="1.2" height="0.6" fill="#9a9a9a"/><text x="588.5999999999999" y="291.5" font-size="5.4" fill="#b5b5b5" text-anchor="end" font-family="Liberation Sans">15</text><rect x="589.0999999999999" y="289.3" width="1.2" height="0.6" fill="#9a9a9a"/><text x="588.5999999999999" y="297.59999999999997" font-size="5.4" fill="#b5b5b5" text-anchor="end" font-family="Liberation Sans">18</text><rect x="589.0999999999999" y="295.4" width="1.2" height="0.6" fill="#9a9a9a"/><text x="588.5999999999999" y="303.4" font-size="5.4" fill="#b5b5b5" text-anchor="end" font-family="Liberation Sans">21</text><rect x="589.0999999999999" y="301.2" width="1.2" height="0.6" fill="#9a9a9a"/><text x="588.5999999999999" y="309.09999999999997" font-size="5.4" fill="#b5b5b5" text-anchor="end" font-family="Liberation Sans">24</text><rect x="589.0999999999999" y="306.9" width="1.2" height="0.6" fill="#9a9a9a"/><text x="588.5999999999999" y="317.2" font-size="5.4" fill="#b5b5b5" text-anchor="end" font-family="Liberation Sans">30</text><rect x="589.0999999999999" y="315.0" width="1.2" height="0.6" fill="#9a9a9a"/><text x="588.5999999999999" y="324.09999999999997" font-size="5.4" fill="#b5b5b5" text-anchor="end" font-family="Liberation Sans">35</text><rect x="589.0999999999999" y="321.9" width="1.2" height="0.6" fill="#9a9a9a"/><text x="588.5999999999999" y="330.7" font-size="5.4" fill="#b5b5b5" text-anchor="end" font-family="Liberation Sans">40</text><rect x="589.0999999999999" y="328.5" width="1.2" height="0.6" fill="#9a9a9a"/><text x="588.5999999999999" y="337.2" font-size="5.4" fill="#b5b5b5" text-anchor="end" font-family="Liberation Sans">45</text><rect x="589.0999999999999" y="335.0" width="1.2" height="0.6" fill="#9a9a9a"/><text x="588.5999999999999" y="343.9" font-size="5.4" fill="#b5b5b5" text-anchor="end" font-family="Liberation Sans">50</text><rect x="589.0999999999999" y="341.7" width="1.2" height="0.6" fill="#9a9a9a"/><text x="588.5999999999999" y="351.0" font-size="5.4" fill="#b5b5b5" text-anchor="end" font-family="Liberation Sans">60</text><rect x="589.0999999999999" y="348.8" width="1.2" height="0.6" fill="#9a9a9a"/><rect x="591.65" y="306" width="2.3" height="43.39999999999998" fill="#55e060"/><rect x="594.85" y="306" width="2.3" height="43.39999999999998" fill="#55e060"/><rect x="591.65" y="302" width="2.3" height="0.9" fill="#55e060"/><rect x="594.85" y="302" width="2.3" height="0.9" fill="#55e060"/><rect x="617.0" y="259" width="1.3" height="91" fill="#2c2c2c"/><rect x="610.2" y="260.20000000000005" width="6.3" height="0.8" fill="#9a9a9a"/><rect x="610.2" y="271.6" width="6.3" height="0.8" fill="#9a9a9a"/><rect x="609.2" y="282.35" width="7.3" height="1.3" fill="#c8c8c8"/><rect x="610.2" y="294.3" width="6.3" height="0.8" fill="#9a9a9a"/><rect x="610.2" y="305.8" width="6.3" height="0.8" fill="#9a9a9a"/><rect x="610.2" y="313.40000000000003" width="6.3" height="0.8" fill="#9a9a9a"/><rect x="610.2" y="323.0" width="6.3" height="0.8" fill="#9a9a9a"/><rect x="610.2" y="330.3" width="6.3" height="0.8" fill="#9a9a9a"/><rect x="610.2" y="337.6" width="6.3" height="0.8" fill="#9a9a9a"/><rect x="610.2" y="343.0" width="6.3" height="0.8" fill="#9a9a9a"/><rect x="610.2" y="348.0" width="6.3" height="0.8" fill="#9a9a9a"/><rect x="613.8" y="264.05" width="2.7" height="0.7" fill="#8a8a8a"/><rect x="613.8" y="267.84999999999997" width="2.7" height="0.7" fill="#8a8a8a"/><rect x="613.8" y="275.31666666666666" width="2.7" height="0.7" fill="#8a8a8a"/><rect x="613.8" y="278.9833333333333" width="2.7" height="0.7" fill="#8a8a8a"/><rect x="613.8" y="286.54999999999995" width="2.7" height="0.7" fill="#8a8a8a"/><rect x="613.8" y="290.45" width="2.7" height="0.7" fill="#8a8a8a"/><rect x="613.8" y="298.1833333333333" width="2.7" height="0.7" fill="#8a8a8a"/><rect x="613.8" y="302.01666666666665" width="2.7" height="0.7" fill="#8a8a8a"/><rect x="613.8" y="307.75" width="2.7" height="0.7" fill="#8a8a8a"/><rect x="613.8" y="309.65" width="2.7" height="0.7" fill="#8a8a8a"/><rect x="613.8" y="311.54999999999995" width="2.7" height="0.7" fill="#8a8a8a"/><rect x="613.8" y="316.65" width="2.7" height="0.7" fill="#8a8a8a"/><rect x="613.8" y="319.84999999999997" width="2.7" height="0.7" fill="#8a8a8a"/><rect x="613.8" y="324.87499999999994" width="2.7" height="0.7" fill="#8a8a8a"/><rect x="613.8" y="326.69999999999993" width="2.7" height="0.7" fill="#8a8a8a"/><rect x="613.8" y="328.525" width="2.7" height="0.7" fill="#8a8a8a"/><rect x="613.8" y="332.17499999999995" width="2.7" height="0.7" fill="#8a8a8a"/><rect x="613.8" y="334.0" width="2.7" height="0.7" fill="#8a8a8a"/><rect x="613.8" y="335.825" width="2.7" height="0.7" fill="#8a8a8a"/><rect x="613.8" y="340.34999999999997" width="2.7" height="0.7" fill="#8a8a8a"/><rect x="613.8" y="345.54999999999995" width="2.7" height="0.7" fill="#8a8a8a"/><defs><linearGradient id="cg6" x1="0" y1="0" x2="0" y2="1"><stop offset="0" stop-color="#8a8a8a"/><stop offset="0.04" stop-color="#e8e8e8"/><stop offset="0.14" stop-color="#c8c8c8"/><stop offset="0.2" stop-color="#a4a4a4"/><stop offset="0.46" stop-color="#8c8c8c"/><stop offset="0.5" stop-color="#6a6a6a"/><stop offset="0.54" stop-color="#d6d6d6"/><stop offset="0.82" stop-color="#e2e2e2"/><stop offset="0.88" stop-color="#9a9a9a"/><stop offset="1" stop-color="#777"/></linearGradient></defs><rect x="611.8" y="298.6" width="11.6" height="23.5" rx="1" fill="#2a2a2a" opacity="0.5"/><rect x="611.5999999999999" y="298" width="11.6" height="23.5" rx="1" fill="url(#cg6)"/></svg>
<div class="btn" style="left:584.5px;top:353.8px;width:19.5px;height:10.4px;background:#5f5f5f;font-size:7.6px;line-height:12px;color:#c4c4c4;">R&nbsp;&nbsp;&nbsp;I</div>
<div class="btn" style="left:583.8px;top:367.3px;width:20.2px;height:10.2px;background:#646464;font-size:8.5px;line-height:12.2px;color:#f6f6f6;-webkit-text-stroke:0.3px #f6f6f6;">M</div>
<div class="btn" style="left:607.8px;top:367.3px;width:20.2px;height:10.2px;background:#646464;font-size:8.5px;line-height:12.2px;color:#f6f6f6;-webkit-text-stroke:0.3px #f6f6f6;">S</div>
<div style="position:absolute;left:684.3999999999999px;top:75.4px;width:1px;height:306px;background:#4a4a4a;"></div>
<div class="btn" style="left:636.5999999999999px;top:81px;width:43.5px;height:10.5px;background:#5c5c5c;"></div>
<div style="position:absolute;left:647.8px;top:81px;width:0.8px;height:10.5px;background:#545454;"></div>
<div class="t" style="left:648.8px;top:83.2px;width:31px;text-align:center;font-size:7.5px;color:#2c2c2c;">Input</div>
<svg style="position:absolute;left:637.5999999999999px;top:81.7px" width="9.5" height="9.5" viewBox="0 0 9.5 9.5"><rect x="1.7" y="1.7" width="6.1" height="6.1" fill="none" stroke="#e8e8e8" stroke-width="0.8"/><rect x="0.8" y="0.8" width="1.8" height="1.8" fill="#fff"/><rect x="6.9" y="0.8" width="1.8" height="1.8" fill="#fff"/><rect x="0.8" y="6.9" width="1.8" height="1.8" fill="#fff"/><rect x="6.9" y="6.9" width="1.8" height="1.8" fill="#fff"/></svg>
<div style="position:absolute;left:636.5999999999999px;top:98px;width:43.5px;height:61px;background:#4c4c4c;border:0.6px solid #484848;border-radius:3px;"></div>
<div class="fx" style="left:636.5999999999999px;top:98.3px;width:43.5px;">Noise Gate</div>
<div class="fx" style="left:636.5999999999999px;top:109.64999999999999px;width:43.5px;">Channel EQ</div>
<div class="fx" style="left:636.5999999999999px;top:121.0px;width:43.5px;">Compressor</div>
<div class="fx" style="left:636.5999999999999px;top:132.35px;width:43.5px;">St-Delay</div>
<div class="fx" style="left:636.5999999999999px;top:143.7px;width:43.5px;">Tremolo</div>
<div class="btn" style="left:636.5999999999999px;top:174.4px;width:43.5px;height:10.3px;background:#666666;font-size:7.6px;line-height:12.4px;color:#ececec;">Surround</div>
<div class="btn" style="left:636.5999999999999px;top:189.4px;width:43.5px;height:11.5px;background:#393939;border-radius:1px;font-size:7.9px;line-height:12.8px;color:#d9b93a;">1: Vocals</div>
<svg style="position:absolute;left:633.0999999999999px;top:200px" width="52" height="32" viewBox="633.0999999999999 200 52 32"><circle cx="655.90" cy="203.90" r="1.05" fill="#a0a0a0"/><circle cx="646.00" cy="208.00" r="1.05" fill="#a0a0a0"/><circle cx="641.90" cy="217.90" r="1.05" fill="#a0a0a0"/><circle cx="646.00" cy="227.80" r="1.05" fill="#a0a0a0"/><circle cx="665.80" cy="227.80" r="1.05" fill="#a0a0a0"/><circle cx="669.90" cy="217.90" r="1.05" fill="#a0a0a0"/><circle cx="665.80" cy="208.00" r="1.05" fill="#a0a0a0"/><circle cx="655.8999999999999" cy="217.9" r="11" fill="#474747"/><circle cx="655.8999999999999" cy="217.9" r="9.7" fill="#363636"/><circle cx="652.5999999999999" cy="216.8" r="1.75" fill="#44dd55"/><rect x="674.2999999999998" y="205.9" width="1.2" height="22.6" fill="#2a2a2a"/><circle cx="674.8999999999999" cy="228.5" r="1.8" fill="#44dd55"/></svg>
<div class="btn" style="left:636.3px;top:233.5px;width:21px;height:11.2px;background:#353535;border-radius:1px;font-size:8px;line-height:12.4px;color:#5cd264;">-16.0</div>
<div class="btn" style="left:659.4999999999999px;top:233.5px;width:21.4px;height:11.2px;background:#353535;border-radius:1px;font-size:8px;line-height:12.4px;color:#eeeeee;">-9.0</div>
<svg style="position:absolute;left:633.0999999999999px;top:255px" width="52" height="100" viewBox="633.0999999999999 255 52 100"><rect x="643.0999999999999" y="258.8" width="9.4" height="26" fill="#363636"/><rect x="643.0999999999999" y="288" width="9.4" height="62" fill="#363636"/><text x="640.8999999999999" y="261.5" font-size="5.4" fill="#b5b5b5" text-anchor="end" font-family="Liberation Sans">0</text><rect x="641.3999999999999" y="259.3" width="1.2" height="0.6" fill="#9a9a9a"/><text x="640.8999999999999" y="267.7" font-size="5.4" fill="#b5b5b5" text-anchor="end" font-family="Liberation Sans">12</text><rect x="641.3999999999999" y="265.5" width="1.2" height="0.6" fill="#9a9a9a"/><text x="640.8999999999999" y="273.9" font-size="5.4" fill="#b5b5b5" text-anchor="end" font-family="Liberation Sans">24</text><rect x="641.3999999999999" y="271.7" width="1.2" height="0.6" fill="#9a9a9a"/><text x="640.8999999999999" y="280.09999999999997" font-size="5.4" fill="#b5b5b5" text-anchor="end" font-family="Liberation Sans">40</text><rect x="641.3999999999999" y="277.9" width="1.2" height="0.6" fill="#9a9a9a"/><text x="640.8999999999999" y="286.09999999999997" font-size="5.4" fill="#b5b5b5" text-anchor="end" font-family="Liberation Sans">60</text><rect x="641.3999999999999" y="283.9" width="1.2" height="0.6" fill="#9a9a9a"/><text x="640.8999999999999" y="290.5" font-size="5.4" fill="#b5b5b5" text-anchor="end" font-family="Liberation Sans">0</text><rect x="641.3999999999999" y="288.3" width="1.2" height="0.6" fill="#9a9a9a"/><text x="640.8999999999999" y="299.4" font-size="5.4" fill="#b5b5b5" text-anchor="end" font-family="Liberation Sans">6</text><rect x="641.3999999999999" y="297.2" width="1.2" height="0.6" fill="#9a9a9a"/><text x="640.8999999999999" y="307.9" font-size="5.4" fill="#b5b5b5" text-anchor="end" font-family="Liberation Sans">12</text><rect x="641.3999999999999" y="305.7" width="1.2" height="0.6" fill="#9a9a9a"/><text x="640.8999999999999" y="316.2" font-size="5.4" fill="#b5b5b5" text-anchor="end" font-family="Liberation Sans">18</text><rect x="641.3999999999999" y="314.0" width="1.2" height="0.6" fill="#9a9a9a"/><text x="640.8999999999999" y="324.09999999999997" font-size="5.4" fill="#b5b5b5" text-anchor="end" font-family="Liberation Sans">24</text><rect x="641.3999999999999" y="321.9" width="1.2" height="0.6" fill="#9a9a9a"/><text x="640.8999999999999" y="329.7" font-size="5.4" fill="#b5b5b5" text-anchor="end" font-family="Liberation Sans">30</text><rect x="641.3999999999999" y="327.5" width="1.2" height="0.6" fill="#9a9a9a"/><text x="640.8999999999999" y="337.9" font-size="5.4" fill="#b5b5b5" text-anchor="end" font-family="Liberation Sans">40</text><rect x="641.3999999999999" y="335.7" width="1.2" height="0.6" fill="#9a9a9a"/><text x="640.8999999999999" y="346.9" font-size="5.4" fill="#b5b5b5" text-anchor="end" font-family="Liberation Sans">50</text><rect x="641.3999999999999" y="344.7" width="1.2" height="0.6" fill="#9a9a9a"/><text x="640.8999999999999" y="351.2" font-size="5.4" fill="#b5b5b5" text-anchor="end" font-family="Liberation Sans">60</text><rect x="641.3999999999999" y="349.0" width="1.2" height="0.6" fill="#9a9a9a"/><rect x="645.3" y="270" width="1.2" height="14.5" fill="#4cc95a"/><rect x="648.8999999999999" y="274" width="1.2" height="10.5" fill="#4cc95a"/><polygon points="643.80,350.00 643.80,318.33 644.30,318.33 644.30,315.26 644.80,315.26 644.80,311.31 645.30,311.31 645.30,312.03 645.80,312.03 645.80,313.66 646.30,313.66 646.30,315.62 646.80,315.62 646.80,316.04 647.30,316.04 647.30,318.51 647.80,318.51 647.80,319.80 648.30,319.80 648.30,321.38 648.80,321.38 648.80,321.92 649.30,321.92 649.30,324.82 649.80,324.82 649.80,328.04 650.30,328.04 650.30,328.47 650.80,328.47 650.80,329.27 651.30,329.27 651.30,330.85 651.80,330.85 651.80,330.23 652.30,330.23 651.80,350.00" fill="#40b04d"/><rect x="669.3" y="259" width="1.3" height="91" fill="#2c2c2c"/><rect x="662.5" y="260.20000000000005" width="6.3" height="0.8" fill="#9a9a9a"/><rect x="662.5" y="271.6" width="6.3" height="0.8" fill="#9a9a9a"/><rect x="661.5" y="282.35" width="7.3" height="1.3" fill="#c8c8c8"/><rect x="662.5" y="294.3" width="6.3" height="0.8" fill="#9a9a9a"/><rect x="662.5" y="305.8" width="6.3" height="0.8" fill="#9a9a9a"/><rect x="662.5" y="313.40000000000003" width="6.3" height="0.8" fill="#9a9a9a"/><rect x="662.5" y="323.0" width="6.3" height="0.8" fill="#9a9a9a"/><rect x="662.5" y="330.3" width="6.3" height="0.8" fill="#9a9a9a"/><rect x="662.5" y="337.6" width="6.3" height="0.8" fill="#9a9a9a"/><rect x="662.5" y="343.0" width="6.3" height="0.8" fill="#9a9a9a"/><rect x="662.5" y="348.0" width="6.3" height="0.8" fill="#9a9a9a"/><rect x="666.0999999999999" y="264.05" width="2.7" height="0.7" fill="#8a8a8a"/><rect x="666.0999999999999" y="267.84999999999997" width="2.7" height="0.7" fill="#8a8a8a"/><rect x="666.0999999999999" y="275.31666666666666" width="2.7" height="0.7" fill="#8a8a8a"/><rect x="666.0999999999999" y="278.9833333333333" width="2.7" height="0.7" fill="#8a8a8a"/><rect x="666.0999999999999" y="286.54999999999995" width="2.7" height="0.7" fill="#8a8a8a"/><rect x="666.0999999999999" y="290.45" width="2.7" height="0.7" fill="#8a8a8a"/><rect x="666.0999999999999" y="298.1833333333333" width="2.7" height="0.7" fill="#8a8a8a"/><rect x="666.0999999999999" y="302.01666666666665" width="2.7" height="0.7" fill="#8a8a8a"/><rect x="666.0999999999999" y="307.75" width="2.7" height="0.7" fill="#8a8a8a"/><rect x="666.0999999999999" y="309.65" width="2.7" height="0.7" fill="#8a8a8a"/><rect x="666.0999999999999" y="311.54999999999995" width="2.7" height="0.7" fill="#8a8a8a"/><rect x="666.0999999999999" y="316.65" width="2.7" height="0.7" fill="#8a8a8a"/><rect x="666.0999999999999" y="319.84999999999997" width="2.7" height="0.7" fill="#8a8a8a"/><rect x="666.0999999999999" y="324.87499999999994" width="2.7" height="0.7" fill="#8a8a8a"/><rect x="666.0999999999999" y="326.69999999999993" width="2.7" height="0.7" fill="#8a8a8a"/><rect x="666.0999999999999" y="328.525" width="2.7" height="0.7" fill="#8a8a8a"/><rect x="666.0999999999999" y="332.17499999999995" width="2.7" height="0.7" fill="#8a8a8a"/><rect x="666.0999999999999" y="334.0" width="2.7" height="0.7" fill="#8a8a8a"/><rect x="666.0999999999999" y="335.825" width="2.7" height="0.7" fill="#8a8a8a"/><rect x="666.0999999999999" y="340.34999999999997" width="2.7" height="0.7" fill="#8a8a8a"/><rect x="666.0999999999999" y="345.54999999999995" width="2.7" height="0.7" fill="#8a8a8a"/><defs><linearGradient id="cg7" x1="0" y1="0" x2="0" y2="1"><stop offset="0" stop-color="#8a8a8a"/><stop offset="0.04" stop-color="#e8e8e8"/><stop offset="0.14" stop-color="#c8c8c8"/><stop offset="0.2" stop-color="#a4a4a4"/><stop offset="0.46" stop-color="#8c8c8c"/><stop offset="0.5" stop-color="#6a6a6a"/><stop offset="0.54" stop-color="#d6d6d6"/><stop offset="0.82" stop-color="#e2e2e2"/><stop offset="0.88" stop-color="#9a9a9a"/><stop offset="1" stop-color="#777"/></linearGradient></defs><rect x="664.0999999999999" y="300.1" width="11.6" height="23.5" rx="1" fill="#2a2a2a" opacity="0.5"/><rect x="663.8999999999999" y="299.5" width="11.6" height="23.5" rx="1" fill="url(#cg7)"/></svg>
<div class="btn" style="left:636.8px;top:353.8px;width:19.5px;height:10.4px;background:#5f5f5f;font-size:7.6px;line-height:12px;color:#c4c4c4;">R&nbsp;&nbsp;&nbsp;I</div>
<div class="btn" style="left:636.0999999999999px;top:367.3px;width:20.2px;height:10.2px;background:#646464;font-size:8.5px;line-height:12.2px;color:#f6f6f6;-webkit-text-stroke:0.3px #f6f6f6;">M</div>
<div class="btn" style="left:660.0999999999999px;top:367.3px;width:20.2px;height:10.2px;background:#646464;font-size:8.5px;line-height:12.2px;color:#f6f6f6;-webkit-text-stroke:0.3px #f6f6f6;">S</div>
<div style="position:absolute;left:736.6999999999999px;top:75.4px;width:1px;height:306px;background:#4a4a4a;"></div>
<div class="btn" style="left:688.9px;top:81px;width:43.5px;height:10.5px;background:#5c5c5c;"></div>
<div style="position:absolute;left:700.1px;top:81px;width:0.8px;height:10.5px;background:#545454;"></div>
<div class="t" style="left:701.1px;top:83.2px;width:31px;text-align:center;font-size:7.5px;color:#2c2c2c;">Input</div>
<svg style="position:absolute;left:689.9px;top:81.7px" width="9.5" height="9.5" viewBox="0 0 9.5 9.5"><rect x="1.7" y="1.7" width="6.1" height="6.1" fill="none" stroke="#e8e8e8" stroke-width="0.8"/><rect x="0.8" y="0.8" width="1.8" height="1.8" fill="#fff"/><rect x="6.9" y="0.8" width="1.8" height="1.8" fill="#fff"/><rect x="0.8" y="6.9" width="1.8" height="1.8" fill="#fff"/><rect x="6.9" y="6.9" width="1.8" height="1.8" fill="#fff"/></svg>
<div style="position:absolute;left:688.9px;top:98px;width:43.5px;height:61px;background:#4c4c4c;border:0.6px solid #484848;border-radius:3px;"></div>
<div class="fx" style="left:688.9px;top:98.3px;width:43.5px;">Noise Gate</div>
<div class="fx" style="left:688.9px;top:109.64999999999999px;width:43.5px;">Channel EQ</div>
<div class="fx" style="left:688.9px;top:121.0px;width:43.5px;">Compressor</div>
<div class="fx" style="left:688.9px;top:132.35px;width:43.5px;">St-Delay</div>
<div class="btn" style="left:688.9px;top:174.4px;width:43.5px;height:10.3px;background:#666666;font-size:7.6px;line-height:12.4px;color:#ececec;">Surround</div>
<div class="btn" style="left:688.9px;top:189.4px;width:43.5px;height:11.5px;background:#393939;border-radius:1px;font-size:7.9px;line-height:12.8px;color:#d9b93a;">1: Vocals</div>
<svg style="position:absolute;left:685.4px;top:200px" width="52" height="32" viewBox="685.4 200 52 32"><circle cx="708.20" cy="203.90" r="1.05" fill="#a0a0a0"/><circle cx="698.30" cy="208.00" r="1.05" fill="#a0a0a0"/><circle cx="694.20" cy="217.90" r="1.05" fill="#a0a0a0"/><circle cx="698.30" cy="227.80" r="1.05" fill="#a0a0a0"/><circle cx="718.10" cy="227.80" r="1.05" fill="#a0a0a0"/><circle cx="722.20" cy="217.90" r="1.05" fill="#a0a0a0"/><circle cx="718.10" cy="208.00" r="1.05" fill="#a0a0a0"/><circle cx="708.1999999999999" cy="217.9" r="11" fill="#474747"/><circle cx="708.1999999999999" cy="217.9" r="9.7" fill="#363636"/><circle cx="713.1999999999999" cy="216.5" r="1.75" fill="#44dd55"/><rect x="726.5999999999999" y="205.9" width="1.2" height="22.6" fill="#2a2a2a"/><circle cx="727.1999999999999" cy="228.5" r="1.8" fill="#44dd55"/></svg>
<div class="btn" style="left:688.6px;top:233.5px;width:21px;height:11.2px;background:#353535;border-radius:1px;font-size:8px;line-height:12.4px;color:#5cd264;">-11.1</div>
<div class="btn" style="left:711.8px;top:233.5px;width:21.4px;height:11.2px;background:#353535;border-radius:1px;font-size:8px;line-height:12.4px;color:#eeeeee;">-9.6</div>
<svg style="position:absolute;left:685.4px;top:255px" width="52" height="100" viewBox="685.4 255 52 100"><rect x="695.4" y="258.8" width="9.4" height="26" fill="#363636"/><rect x="695.4" y="288" width="9.4" height="62" fill="#363636"/><text x="693.1999999999999" y="261.5" font-size="5.4" fill="#b5b5b5" text-anchor="end" font-family="Liberation Sans">0</text><rect x="693.6999999999999" y="259.3" width="1.2" height="0.6" fill="#9a9a9a"/><text x="693.1999999999999" y="267.7" font-size="5.4" fill="#b5b5b5" text-anchor="end" font-family="Liberation Sans">12</text><rect x="693.6999999999999" y="265.5" width="1.2" height="0.6" fill="#9a9a9a"/><text x="693.1999999999999" y="273.9" font-size="5.4" fill="#b5b5b5" text-anchor="end" font-family="Liberation Sans">24</text><rect x="693.6999999999999" y="271.7" width="1.2" height="0.6" fill="#9a9a9a"/><text x="693.1999999999999" y="280.09999999999997" font-size="5.4" fill="#b5b5b5" text-anchor="end" font-family="Liberation Sans">40</text><rect x="693.6999999999999" y="277.9" width="1.2" height="0.6" fill="#9a9a9a"/><text x="693.1999999999999" y="286.09999999999997" font-size="5.4" fill="#b5b5b5" text-anchor="end" font-family="Liberation Sans">60</text><rect x="693.6999999999999" y="283.9" width="1.2" height="0.6" fill="#9a9a9a"/><text x="693.1999999999999" y="290.5" font-size="5.4" fill="#b5b5b5" text-anchor="end" font-family="Liberation Sans">0</text><rect x="693.6999999999999" y="288.3" width="1.2" height="0.6" fill="#9a9a9a"/><text x="693.1999999999999" y="299.4" font-size="5.4" fill="#b5b5b5" text-anchor="end" font-family="Liberation Sans">6</text><rect x="693.6999999999999" y="297.2" width="1.2" height="0.6" fill="#9a9a9a"/><text x="693.1999999999999" y="307.9" font-size="5.4" fill="#b5b5b5" text-anchor="end" font-family="Liberation Sans">12</text><rect x="693.6999999999999" y="305.7" width="1.2" height="0.6" fill="#9a9a9a"/><text x="693.1999999999999" y="316.2" font-size="5.4" fill="#b5b5b5" text-anchor="end" font-family="Liberation Sans">18</text><rect x="693.6999999999999" y="314.0" width="1.2" height="0.6" fill="#9a9a9a"/><text x="693.1999999999999" y="324.09999999999997" font-size="5.4" fill="#b5b5b5" text-anchor="end" font-family="Liberation Sans">24</text><rect x="693.6999999999999" y="321.9" width="1.2" height="0.6" fill="#9a9a9a"/><text x="693.1999999999999" y="329.7" font-size="5.4" fill="#b5b5b5" text-anchor="end" font-family="Liberation Sans">30</text><rect x="693.6999999999999" y="327.5" width="1.2" height="0.6" fill="#9a9a9a"/><text x="693.1999999999999" y="337.9" font-size="5.4" fill="#b5b5b5" text-anchor="end" font-family="Liberation Sans">40</text><rect x="693.6999999999999" y="335.7" width="1.2" height="0.6" fill="#9a9a9a"/><text x="693.1999999999999" y="346.9" font-size="5.4" fill="#b5b5b5" text-anchor="end" font-family="Liberation Sans">50</text><rect x="693.6999999999999" y="344.7" width="1.2" height="0.6" fill="#9a9a9a"/><text x="693.1999999999999" y="351.2" font-size="5.4" fill="#b5b5b5" text-anchor="end" font-family="Liberation Sans">60</text><rect x="693.6999999999999" y="349.0" width="1.2" height="0.6" fill="#9a9a9a"/><rect x="697.6" y="275" width="1.2" height="9.5" fill="#4cc95a"/><rect x="701.1999999999999" y="271.6" width="1.2" height="12.899999999999977" fill="#4cc95a"/><polygon points="696.10,350.00 696.10,331.80 696.60,331.80 696.60,331.96 697.10,331.96 697.10,329.57 697.60,329.57 697.60,328.67 698.10,328.67 698.10,326.82 698.60,326.82 698.60,323.97 699.10,323.97 699.10,322.11 699.60,322.11 699.60,319.17 700.10,319.17 700.10,316.78 700.60,316.78 700.60,314.67 701.10,314.67 701.10,309.78 701.60,309.78 701.60,305.42 702.10,305.42 702.10,306.07 702.60,306.07 702.60,305.66 703.10,305.66 703.10,309.95 703.60,309.95 703.60,311.69 704.10,311.69 704.10,311.61 704.60,311.61 704.10,350.00" fill="#40b04d"/><rect x="721.6" y="259" width="1.3" height="91" fill="#2c2c2c"/><rect x="714.8000000000001" y="260.20000000000005" width="6.3" height="0.8" fill="#9a9a9a"/><rect x="714.8000000000001" y="271.6" width="6.3" height="0.8" fill="#9a9a9a"/><rect x="713.8000000000001" y="282.35" width="7.3" height="1.3" fill="#c8c8c8"/><rect x="714.8000000000001" y="294.3" width="6.3" height="0.8" fill="#9a9a9a"/><rect x="714.8000000000001" y="305.8" width="6.3" height="0.8" fill="#9a9a9a"/><rect x="714.8000000000001" y="313.40000000000003" width="6.3" height="0.8" fill="#9a9a9a"/><rect x="714.8000000000001" y="323.0" width="6.3" height="0.8" fill="#9a9a9a"/><rect x="714.8000000000001" y="330.3" width="6.3" height="0.8" fill="#9a9a9a"/><rect x="714.8000000000001" y="337.6" width="6.3" height="0.8" fill="#9a9a9a"/><rect x="714.8000000000001" y="343.0" width="6.3" height="0.8" fill="#9a9a9a"/><rect x="714.8000000000001" y="348.0" width="6.3" height="0.8" fill="#9a9a9a"/><rect x="718.4" y="264.05" width="2.7" height="0.7" fill="#8a8a8a"/><rect x="718.4" y="267.84999999999997" width="2.7" height="0.7" fill="#8a8a8a"/><rect x="718.4" y="275.31666666666666" width="2.7" height="0.7" fill="#8a8a8a"/><rect x="718.4" y="278.9833333333333" width="2.7" height="0.7" fill="#8a8a8a"/><rect x="718.4" y="286.54999999999995" width="2.7" height="0.7" fill="#8a8a8a"/><rect x="718.4" y="290.45" width="2.7" height="0.7" fill="#8a8a8a"/><rect x="718.4" y="298.1833333333333" width="2.7" height="0.7" fill="#8a8a8a"/><rect x="718.4" y="302.01666666666665" width="2.7" height="0.7" fill="#8a8a8a"/><rect x="718.4" y="307.75" width="2.7" height="0.7" fill="#8a8a8a"/><rect x="718.4" y="309.65" width="2.7" height="0.7" fill="#8a8a8a"/><rect x="718.4" y="311.54999999999995" width="2.7" height="0.7" fill="#8a8a8a"/><rect x="718.4" y="316.65" width="2.7" height="0.7" fill="#8a8a8a"/><rect x="718.4" y="319.84999999999997" width="2.7" height="0.7" fill="#8a8a8a"/><rect x="718.4" y="324.87499999999994" width="2.7" height="0.7" fill="#8a8a8a"/><rect x="718.4" y="326.69999999999993" width="2.7" height="0.7" fill="#8a8a8a"/><rect x="718.4" y="328.525" width="2.7" height="0.7" fill="#8a8a8a"/><rect x="718.4" y="332.17499999999995" width="2.7" height="0.7" fill="#8a8a8a"/><rect x="718.4" y="334.0" width="2.7" height="0.7" fill="#8a8a8a"/><rect x="718.4" y="335.825" width="2.7" height="0.7" fill="#8a8a8a"/><rect x="718.4" y="340.34999999999997" width="2.7" height="0.7" fill="#8a8a8a"/><rect x="718.4" y="345.54999999999995" width="2.7" height="0.7" fill="#8a8a8a"/><defs><linearGradient id="cg8" x1="0" y1="0" x2="0" y2="1"><stop offset="0" stop-color="#8a8a8a"/><stop offset="0.04" stop-color="#e8e8e8"/><stop offset="0.14" stop-color="#c8c8c8"/><stop offset="0.2" stop-color="#a4a4a4"/><stop offset="0.46" stop-color="#8c8c8c"/><stop offset="0.5" stop-color="#6a6a6a"/><stop offset="0.54" stop-color="#d6d6d6"/><stop offset="0.82" stop-color="#e2e2e2"/><stop offset="0.88" stop-color="#9a9a9a"/><stop offset="1" stop-color="#777"/></linearGradient></defs><rect x="716.4" y="301.40000000000003" width="11.6" height="23.5" rx="1" fill="#2a2a2a" opacity="0.5"/><rect x="716.1999999999999" y="300.8" width="11.6" height="23.5" rx="1" fill="url(#cg8)"/></svg>
<div class="btn" style="left:689.1px;top:353.8px;width:19.5px;height:10.4px;background:#5f5f5f;font-size:7.6px;line-height:12px;color:#c4c4c4;">R&nbsp;&nbsp;&nbsp;I</div>
<div class="btn" style="left:688.4px;top:367.3px;width:20.2px;height:10.2px;background:#646464;font-size:8.5px;line-height:12.2px;color:#f6f6f6;-webkit-text-stroke:0.3px #f6f6f6;">M</div>
<div class="btn" style="left:712.4px;top:367.3px;width:20.2px;height:10.2px;background:#646464;font-size:8.5px;line-height:12.2px;color:#f6f6f6;-webkit-text-stroke:0.3px #f6f6f6;">S</div>
<div style="position:absolute;left:789.0px;top:75.4px;width:1px;height:306px;background:#4a4a4a;"></div>
<div class="btn" style="left:741.2px;top:81px;width:43.5px;height:10.5px;background:#5c5c5c;"></div>
<div style="position:absolute;left:752.4000000000001px;top:81px;width:0.8px;height:10.5px;background:#545454;"></div>
<div class="t" style="left:753.4000000000001px;top:83.2px;width:31px;text-align:center;font-size:7.5px;color:#2c2c2c;">Input</div>
<svg style="position:absolute;left:742.2px;top:81.7px" width="9.5" height="9.5" viewBox="0 0 9.5 9.5"><rect x="1.7" y="1.7" width="6.1" height="6.1" fill="none" stroke="#e8e8e8" stroke-width="0.8"/><rect x="0.8" y="0.8" width="1.8" height="1.8" fill="#fff"/><rect x="6.9" y="0.8" width="1.8" height="1.8" fill="#fff"/><rect x="0.8" y="6.9" width="1.8" height="1.8" fill="#fff"/><rect x="6.9" y="6.9" width="1.8" height="1.8" fill="#fff"/></svg>
<div style="position:absolute;left:741.2px;top:98px;width:43.5px;height:61px;background:#4c4c4c;border:0.6px solid #484848;border-radius:3px;"></div>
<div class="fx" style="left:741.2px;top:98.3px;width:43.5px;">Noise Gate</div>
<div class="fx" style="left:741.2px;top:109.64999999999999px;width:43.5px;">Channel EQ</div>
<div class="fx" style="left:741.2px;top:121.0px;width:43.5px;">Compressor</div>
<div class="fx" style="left:741.2px;top:132.35px;width:43.5px;">St-Delay</div>
<div class="btn" style="left:741.2px;top:174.4px;width:43.5px;height:10.3px;background:#666666;font-size:7.6px;line-height:12.4px;color:#ececec;">Surround</div>
<div class="btn" style="left:741.2px;top:189.4px;width:43.5px;height:11.5px;background:#393939;border-radius:1px;font-size:7.9px;line-height:12.8px;color:#d9b93a;">1: Vocals</div>
<svg style="position:absolute;left:737.7px;top:200px" width="52" height="32" viewBox="737.7 200 52 32"><circle cx="760.50" cy="203.90" r="1.05" fill="#a0a0a0"/><circle cx="750.60" cy="208.00" r="1.05" fill="#a0a0a0"/><circle cx="746.50" cy="217.90" r="1.05" fill="#a0a0a0"/><circle cx="750.60" cy="227.80" r="1.05" fill="#a0a0a0"/><circle cx="770.40" cy="227.80" r="1.05" fill="#a0a0a0"/><circle cx="774.50" cy="217.90" r="1.05" fill="#a0a0a0"/><circle cx="770.40" cy="208.00" r="1.05" fill="#a0a0a0"/><circle cx="760.5" cy="217.9" r="11" fill="#474747"/><circle cx="760.5" cy="217.9" r="9.7" fill="#363636"/><circle cx="757.2" cy="215.5" r="1.75" fill="#44dd55"/><rect x="778.9" y="205.9" width="1.2" height="22.6" fill="#2a2a2a"/><circle cx="779.5" cy="228.5" r="1.8" fill="#44dd55"/></svg>
<div class="btn" style="left:740.9000000000001px;top:233.5px;width:21px;height:11.2px;background:#353535;border-radius:1px;font-size:8px;line-height:12.4px;color:#5cd264;">-8.5</div>
<div class="btn" style="left:764.1px;top:233.5px;width:21.4px;height:11.2px;background:#353535;border-radius:1px;font-size:8px;line-height:12.4px;color:#eeeeee;">-10.2</div>
<svg style="position:absolute;left:737.7px;top:255px" width="52" height="100" viewBox="737.7 255 52 100"><rect x="747.7" y="258.8" width="9.4" height="26" fill="#363636"/><rect x="747.7" y="288" width="9.4" height="62" fill="#363636"/><text x="745.5" y="261.5" font-size="5.4" fill="#b5b5b5" text-anchor="end" font-family="Liberation Sans">0</text><rect x="746.0" y="259.3" width="1.2" height="0.6" fill="#9a9a9a"/><text x="745.5" y="267.7" font-size="5.4" fill="#b5b5b5" text-anchor="end" font-family="Liberation Sans">12</text><rect x="746.0" y="265.5" width="1.2" height="0.6" fill="#9a9a9a"/><text x="745.5" y="273.9" font-size="5.4" fill="#b5b5b5" text-anchor="end" font-family="Liberation Sans">24</text><rect x="746.0" y="271.7" width="1.2" height="0.6" fill="#9a9a9a"/><text x="745.5" y="280.09999999999997" font-size="5.4" fill="#b5b5b5" text-anchor="end" font-family="Liberation Sans">40</text><rect x="746.0" y="277.9" width="1.2" height="0.6" fill="#9a9a9a"/><text x="745.5" y="286.09999999999997" font-size="5.4" fill="#b5b5b5" text-anchor="end" font-family="Liberation Sans">60</text><rect x="746.0" y="283.9" width="1.2" height="0.6" fill="#9a9a9a"/><text x="745.5" y="290.5" font-size="5.4" fill="#b5b5b5" text-anchor="end" font-family="Liberation Sans">0</text><rect x="746.0" y="288.3" width="1.2" height="0.6" fill="#9a9a9a"/><text x="745.5" y="299.4" font-size="5.4" fill="#b5b5b5" text-anchor="end" font-family="Liberation Sans">6</text><rect x="746.0" y="297.2" width="1.2" height="0.6" fill="#9a9a9a"/><text x="745.5" y="307.9" font-size="5.4" fill="#b5b5b5" text-anchor="end" font-family="Liberation Sans">12</text><rect x="746.0" y="305.7" width="1.2" height="0.6" fill="#9a9a9a"/><text x="745.5" y="316.2" font-size="5.4" fill="#b5b5b5" text-anchor="end" font-family="Liberation Sans">18</text><rect x="746.0" y="314.0" width="1.2" height="0.6" fill="#9a9a9a"/><text x="745.5" y="324.09999999999997" font-size="5.4" fill="#b5b5b5" text-anchor="end" font-family="Liberation Sans">24</text><rect x="746.0" y="321.9" width="1.2" height="0.6" fill="#9a9a9a"/><text x="745.5" y="329.7" font-size="5.4" fill="#b5b5b5" text-anchor="end" font-family="Liberation Sans">30</text><rect x="746.0" y="327.5" width="1.2" height="0.6" fill="#9a9a9a"/><text x="745.5" y="337.9" font-size="5.4" fill="#b5b5b5" text-anchor="end" font-family="Liberation Sans">40</text><rect x="746.0" y="335.7" width="1.2" height="0.6" fill="#9a9a9a"/><text x="745.5" y="346.9" font-size="5.4" fill="#b5b5b5" text-anchor="end" font-family="Liberation Sans">50</text><rect x="746.0" y="344.7" width="1.2" height="0.6" fill="#9a9a9a"/><text x="745.5" y="351.2" font-size="5.4" fill="#b5b5b5" text-anchor="end" font-family="Liberation Sans">60</text><rect x="746.0" y="349.0" width="1.2" height="0.6" fill="#9a9a9a"/><rect x="749.9000000000001" y="269" width="1.2" height="15.5" fill="#4cc95a"/><rect x="753.5" y="269" width="1.2" height="15.5" fill="#4cc95a"/><polygon points="748.40,350.00 748.40,315.26 748.90,315.26 748.90,314.93 749.40,314.93 749.40,311.47 749.90,311.47 749.90,310.57 750.40,310.57 750.40,309.39 750.90,309.39 750.90,308.43 751.40,308.43 751.40,311.89 751.90,311.89 751.90,311.21 752.40,311.21 752.40,313.88 752.90,313.88 752.90,314.33 753.40,314.33 753.40,316.98 753.90,316.98 753.90,315.46 754.40,315.46 754.40,316.60 754.90,316.60 754.90,318.51 755.40,318.51 755.40,318.31 755.90,318.31 755.90,320.38 756.40,320.38 756.40,322.47 756.90,322.47 756.40,350.00" fill="#40b04d"/><rect x="773.9000000000001" y="259" width="1.3" height="91" fill="#2c2c2c"/><rect x="767.1000000000001" y="260.20000000000005" width="6.3" height="0.8" fill="#9a9a9a"/><rect x="767.1000000000001" y="271.6" width="6.3" height="0.8" fill="#9a9a9a"/><rect x="766.1000000000001" y="282.35" width="7.3" height="1.3" fill="#c8c8c8"/><rect x="767.1000000000001" y="294.3" width="6.3" height="0.8" fill="#9a9a9a"/><rect x="767.1000000000001" y="305.8" width="6.3" height="0.8" fill="#9a9a9a"/><rect x="767.1000000000001" y="313.40000000000003" width="6.3" height="0.8" fill="#9a9a9a"/><rect x="767.1000000000001" y="323.0" width="6.3" height="0.8" fill="#9a9a9a"/><rect x="767.1000000000001" y="330.3" width="6.3" height="0.8" fill="#9a9a9a"/><rect x="767.1000000000001" y="337.6" width="6.3" height="0.8" fill="#9a9a9a"/><rect x="767.1000000000001" y="343.0" width="6.3" height="0.8" fill="#9a9a9a"/><rect x="767.1000000000001" y="348.0" width="6.3" height="0.8" fill="#9a9a9a"/><rect x="770.7" y="264.05" width="2.7" height="0.7" fill="#8a8a8a"/><rect x="770.7" y="267.84999999999997" width="2.7" height="0.7" fill="#8a8a8a"/><rect x="770.7" y="275.31666666666666" width="2.7" height="0.7" fill="#8a8a8a"/><rect x="770.7" y="278.9833333333333" width="2.7" height="0.7" fill="#8a8a8a"/><rect x="770.7" y="286.54999999999995" width="2.7" height="0.7" fill="#8a8a8a"/><rect x="770.7" y="290.45" width="2.7" height="0.7" fill="#8a8a8a"/><rect x="770.7" y="298.1833333333333" width="2.7" height="0.7" fill="#8a8a8a"/><rect x="770.7" y="302.01666666666665" width="2.7" height="0.7" fill="#8a8a8a"/><rect x="770.7" y="307.75" width="2.7" height="0.7" fill="#8a8a8a"/><rect x="770.7" y="309.65" width="2.7" height="0.7" fill="#8a8a8a"/><rect x="770.7" y="311.54999999999995" width="2.7" height="0.7" fill="#8a8a8a"/><rect x="770.7" y="316.65" width="2.7" height="0.7" fill="#8a8a8a"/><rect x="770.7" y="319.84999999999997" width="2.7" height="0.7" fill="#8a8a8a"/><rect x="770.7" y="324.87499999999994" width="2.7" height="0.7" fill="#8a8a8a"/><rect x="770.7" y="326.69999999999993" width="2.7" height="0.7" fill="#8a8a8a"/><rect x="770.7" y="328.525" width="2.7" height="0.7" fill="#8a8a8a"/><rect x="770.7" y="332.17499999999995" width="2.7" height="0.7" fill="#8a8a8a"/><rect x="770.7" y="334.0" width="2.7" height="0.7" fill="#8a8a8a"/><rect x="770.7" y="335.825" width="2.7" height="0.7" fill="#8a8a8a"/><rect x="770.7" y="340.34999999999997" width="2.7" height="0.7" fill="#8a8a8a"/><rect x="770.7" y="345.54999999999995" width="2.7" height="0.7" fill="#8a8a8a"/><defs><linearGradient id="cg9" x1="0" y1="0" x2="0" y2="1"><stop offset="0" stop-color="#8a8a8a"/><stop offset="0.04" stop-color="#e8e8e8"/><stop offset="0.14" stop-color="#c8c8c8"/><stop offset="0.2" stop-color="#a4a4a4"/><stop offset="0.46" stop-color="#8c8c8c"/><stop offset="0.5" stop-color="#6a6a6a"/><stop offset="0.54" stop-color="#d6d6d6"/><stop offset="0.82" stop-color="#e2e2e2"/><stop offset="0.88" stop-color="#9a9a9a"/><stop offset="1" stop-color="#777"/></linearGradient></defs><rect x="768.7" y="302.6" width="11.6" height="23.5" rx="1" fill="#2a2a2a" opacity="0.5"/><rect x="768.5" y="302" width="11.6" height="23.5" rx="1" fill="url(#cg9)"/></svg>
<div class="btn" style="left:741.4000000000001px;top:353.8px;width:19.5px;height:10.4px;background:#5f5f5f;font-size:7.6px;line-height:12px;color:#c4c4c4;">R&nbsp;&nbsp;&nbsp;I</div>
<div class="btn" style="left:740.7px;top:367.3px;width:20.2px;height:10.2px;background:#646464;font-size:8.5px;line-height:12.2px;color:#f6f6f6;-webkit-text-stroke:0.3px #f6f6f6;">M</div>
<div class="btn" style="left:764.7px;top:367.3px;width:20.2px;height:10.2px;background:#646464;font-size:8.5px;line-height:12.2px;color:#f6f6f6;-webkit-text-stroke:0.3px #f6f6f6;">S</div>
<div style="position:absolute;left:841.3px;top:75.4px;width:1px;height:306px;background:#4a4a4a;"></div>
<div class="btn" style="left:793.5px;top:81px;width:43.5px;height:10.5px;background:#5c5c5c;"></div>
<div style="position:absolute;left:804.7px;top:81px;width:0.8px;height:10.5px;background:#545454;"></div>
<div class="t" style="left:805.7px;top:83.2px;width:31px;text-align:center;font-size:7.5px;color:#2c2c2c;">Input</div>
<svg style="position:absolute;left:794.0px;top:81.7px" width="11" height="9.5" viewBox="0 0 11 9.5"><circle cx="4.1" cy="4.75" r="2.6" fill="none" stroke="#eee" stroke-width="0.9"/><circle cx="6.9" cy="4.75" r="2.6" fill="none" stroke="#eee" stroke-width="0.9"/></svg>
<div style="position:absolute;left:793.5px;top:98px;width:43.5px;height:61px;background:#4c4c4c;border:0.6px solid #484848;border-radius:3px;"></div>
<div class="fx" style="left:793.5px;top:98.3px;width:43.5px;">Noise Gate</div>
<div class="fx" style="left:793.5px;top:109.64999999999999px;width:43.5px;">Channel EQ</div>
<div class="fx" style="left:793.5px;top:121.0px;width:43.5px;">Compressor</div>
<div class="btn" style="left:793.5px;top:174.4px;width:43.5px;height:10.3px;background:#666666;font-size:7.6px;line-height:12.4px;color:#ececec;">Object</div>
<div class="btn" style="left:793.5px;top:189.4px;width:43.5px;height:11.5px;background:#393939;border-radius:1px;font-size:7.9px;line-height:12.8px;color:#d9b93a;">1: Vocals</div>
<svg style="position:absolute;left:790.0px;top:200px" width="52" height="32" viewBox="790.0 200 52 32"><rect x="801.4" y="206.3" width="22.6" height="22.6" rx="1.5" fill="#3b3b3b" stroke="#2a2a2a" stroke-width="0.9"/><line x1="804.23" y1="206.3" x2="804.23" y2="228.9" stroke="#515151" stroke-width="0.4"/><line x1="801.4" y1="209.12" x2="824.0" y2="209.12" stroke="#515151" stroke-width="0.4"/><line x1="807.05" y1="206.3" x2="807.05" y2="228.9" stroke="#515151" stroke-width="0.4"/><line x1="801.4" y1="211.95" x2="824.0" y2="211.95" stroke="#515151" stroke-width="0.4"/><line x1="809.88" y1="206.3" x2="809.88" y2="228.9" stroke="#515151" stroke-width="0.4"/><line x1="801.4" y1="214.78" x2="824.0" y2="214.78" stroke="#515151" stroke-width="0.4"/><line x1="812.70" y1="206.3" x2="812.70" y2="228.9" stroke="#515151" stroke-width="0.4"/><line x1="801.4" y1="217.60" x2="824.0" y2="217.60" stroke="#515151" stroke-width="0.4"/><line x1="815.52" y1="206.3" x2="815.52" y2="228.9" stroke="#515151" stroke-width="0.4"/><line x1="801.4" y1="220.43" x2="824.0" y2="220.43" stroke="#515151" stroke-width="0.4"/><line x1="818.35" y1="206.3" x2="818.35" y2="228.9" stroke="#515151" stroke-width="0.4"/><line x1="801.4" y1="223.25" x2="824.0" y2="223.25" stroke="#515151" stroke-width="0.4"/><line x1="821.17" y1="206.3" x2="821.17" y2="228.9" stroke="#515151" stroke-width="0.4"/><line x1="801.4" y1="226.08" x2="824.0" y2="226.08" stroke="#515151" stroke-width="0.4"/><path d="M810.80,207.50 L823.20,207.80 L823.00,215.80 L812.00,218.30 Z" fill="#3f7d48" stroke="#57a560" stroke-width="0.5" opacity="0.95"/><circle cx="816.9" cy="211.5" r="1.75" fill="#44dd55"/><rect x="831.1999999999999" y="205.9" width="1.2" height="22.6" fill="#2a2a2a"/><circle cx="831.8" cy="219.4" r="1.8" fill="#44dd55"/></svg>
<div class="btn" style="left:793.2px;top:233.5px;width:21px;height:11.2px;background:#353535;border-radius:1px;font-size:8px;line-height:12.4px;color:#5cd264;">-14.6</div>
<div class="btn" style="left:816.4px;top:233.5px;width:21.4px;height:11.2px;background:#353535;border-radius:1px;font-size:8px;line-height:12.4px;color:#eeeeee;">-10.8</div>
<svg style="position:absolute;left:790.0px;top:255px" width="52" height="100" viewBox="790.0 255 52 100"><rect x="800.2" y="258.8" width="7.3" height="90.6" fill="#363636"/><text x="797.8" y="262.0" font-size="5.4" fill="#b5b5b5" text-anchor="end" font-family="Liberation Sans">0</text><rect x="798.3" y="259.8" width="1.2" height="0.6" fill="#9a9a9a"/><text x="797.8" y="267.9" font-size="5.4" fill="#b5b5b5" text-anchor="end" font-family="Liberation Sans">3</text><rect x="798.3" y="265.7" width="1.2" height="0.6" fill="#9a9a9a"/><text x="797.8" y="274.09999999999997" font-size="5.4" fill="#b5b5b5" text-anchor="end" font-family="Liberation Sans">6</text><rect x="798.3" y="271.9" width="1.2" height="0.6" fill="#9a9a9a"/><text x="797.8" y="279.9" font-size="5.4" fill="#b5b5b5" text-anchor="end" font-family="Liberation Sans">9</text><rect x="798.3" y="277.7" width="1.2" height="0.6" fill="#9a9a9a"/><text x="797.8" y="285.59999999999997" font-size="5.4" fill="#b5b5b5" text-anchor="end" font-family="Liberation Sans">12</text><rect x="798.3" y="283.4" width="1.2" height="0.6" fill="#9a9a9a"/><text x="797.8" y="291.5" font-size="5.4" fill="#b5b5b5" text-anchor="end" font-family="Liberation Sans">15</text><rect x="798.3" y="289.3" width="1.2" height="0.6" fill="#9a9a9a"/><text x="797.8" y="297.59999999999997" font-size="5.4" fill="#b5b5b5" text-anchor="end" font-family="Liberation Sans">18</text><rect x="798.3" y="295.4" width="1.2" height="0.6" fill="#9a9a9a"/><text x="797.8" y="303.4" font-size="5.4" fill="#b5b5b5" text-anchor="end" font-family="Liberation Sans">21</text><rect x="798.3" y="301.2" width="1.2" height="0.6" fill="#9a9a9a"/><text x="797.8" y="309.09999999999997" font-size="5.4" fill="#b5b5b5" text-anchor="end" font-family="Liberation Sans">24</text><rect x="798.3" y="306.9" width="1.2" height="0.6" fill="#9a9a9a"/><text x="797.8" y="317.2" font-size="5.4" fill="#b5b5b5" text-anchor="end" font-family="Liberation Sans">30</text><rect x="798.3" y="315.0" width="1.2" height="0.6" fill="#9a9a9a"/><text x="797.8" y="324.09999999999997" font-size="5.4" fill="#b5b5b5" text-anchor="end" font-family="Liberation Sans">35</text><rect x="798.3" y="321.9" width="1.2" height="0.6" fill="#9a9a9a"/><text x="797.8" y="330.7" font-size="5.4" fill="#b5b5b5" text-anchor="end" font-family="Liberation Sans">40</text><rect x="798.3" y="328.5" width="1.2" height="0.6" fill="#9a9a9a"/><text x="797.8" y="337.2" font-size="5.4" fill="#b5b5b5" text-anchor="end" font-family="Liberation Sans">45</text><rect x="798.3" y="335.0" width="1.2" height="0.6" fill="#9a9a9a"/><text x="797.8" y="343.9" font-size="5.4" fill="#b5b5b5" text-anchor="end" font-family="Liberation Sans">50</text><rect x="798.3" y="341.7" width="1.2" height="0.6" fill="#9a9a9a"/><text x="797.8" y="351.0" font-size="5.4" fill="#b5b5b5" text-anchor="end" font-family="Liberation Sans">60</text><rect x="798.3" y="348.8" width="1.2" height="0.6" fill="#9a9a9a"/><rect x="800.85" y="295.7" width="2.3" height="53.69999999999999" fill="#55e060"/><rect x="804.0500000000001" y="295.7" width="2.3" height="53.69999999999999" fill="#55e060"/><rect x="800.85" y="289" width="2.3" height="0.9" fill="#55e060"/><rect x="804.0500000000001" y="289" width="2.3" height="0.9" fill="#55e060"/><rect x="826.2" y="259" width="1.3" height="91" fill="#2c2c2c"/><rect x="819.4000000000001" y="260.20000000000005" width="6.3" height="0.8" fill="#9a9a9a"/><rect x="819.4000000000001" y="271.6" width="6.3" height="0.8" fill="#9a9a9a"/><rect x="818.4000000000001" y="282.35" width="7.3" height="1.3" fill="#c8c8c8"/><rect x="819.4000000000001" y="294.3" width="6.3" height="0.8" fill="#9a9a9a"/><rect x="819.4000000000001" y="305.8" width="6.3" height="0.8" fill="#9a9a9a"/><rect x="819.4000000000001" y="313.40000000000003" width="6.3" height="0.8" fill="#9a9a9a"/><rect x="819.4000000000001" y="323.0" width="6.3" height="0.8" fill="#9a9a9a"/><rect x="819.4000000000001" y="330.3" width="6.3" height="0.8" fill="#9a9a9a"/><rect x="819.4000000000001" y="337.6" width="6.3" height="0.8" fill="#9a9a9a"/><rect x="819.4000000000001" y="343.0" width="6.3" height="0.8" fill="#9a9a9a"/><rect x="819.4000000000001" y="348.0" width="6.3" height="0.8" fill="#9a9a9a"/><rect x="823.0" y="264.05" width="2.7" height="0.7" fill="#8a8a8a"/><rect x="823.0" y="267.84999999999997" width="2.7" height="0.7" fill="#8a8a8a"/><rect x="823.0" y="275.31666666666666" width="2.7" height="0.7" fill="#8a8a8a"/><rect x="823.0" y="278.9833333333333" width="2.7" height="0.7" fill="#8a8a8a"/><rect x="823.0" y="286.54999999999995" width="2.7" height="0.7" fill="#8a8a8a"/><rect x="823.0" y="290.45" width="2.7" height="0.7" fill="#8a8a8a"/><rect x="823.0" y="298.1833333333333" width="2.7" height="0.7" fill="#8a8a8a"/><rect x="823.0" y="302.01666666666665" width="2.7" height="0.7" fill="#8a8a8a"/><rect x="823.0" y="307.75" width="2.7" height="0.7" fill="#8a8a8a"/><rect x="823.0" y="309.65" width="2.7" height="0.7" fill="#8a8a8a"/><rect x="823.0" y="311.54999999999995" width="2.7" height="0.7" fill="#8a8a8a"/><rect x="823.0" y="316.65" width="2.7" height="0.7" fill="#8a8a8a"/><rect x="823.0" y="319.84999999999997" width="2.7" height="0.7" fill="#8a8a8a"/><rect x="823.0" y="324.87499999999994" width="2.7" height="0.7" fill="#8a8a8a"/><rect x="823.0" y="326.69999999999993" width="2.7" height="0.7" fill="#8a8a8a"/><rect x="823.0" y="328.525" width="2.7" height="0.7" fill="#8a8a8a"/><rect x="823.0" y="332.17499999999995" width="2.7" height="0.7" fill="#8a8a8a"/><rect x="823.0" y="334.0" width="2.7" height="0.7" fill="#8a8a8a"/><rect x="823.0" y="335.825" width="2.7" height="0.7" fill="#8a8a8a"/><rect x="823.0" y="340.34999999999997" width="2.7" height="0.7" fill="#8a8a8a"/><rect x="823.0" y="345.54999999999995" width="2.7" height="0.7" fill="#8a8a8a"/><defs><linearGradient id="cg10" x1="0" y1="0" x2="0" y2="1"><stop offset="0" stop-color="#8a8a8a"/><stop offset="0.04" stop-color="#e8e8e8"/><stop offset="0.14" stop-color="#c8c8c8"/><stop offset="0.2" stop-color="#a4a4a4"/><stop offset="0.46" stop-color="#8c8c8c"/><stop offset="0.5" stop-color="#6a6a6a"/><stop offset="0.54" stop-color="#d6d6d6"/><stop offset="0.82" stop-color="#e2e2e2"/><stop offset="0.88" stop-color="#9a9a9a"/><stop offset="1" stop-color="#777"/></linearGradient></defs><rect x="821.0" y="303.90000000000003" width="11.6" height="23.5" rx="1" fill="#2a2a2a" opacity="0.5"/><rect x="820.8" y="303.3" width="11.6" height="23.5" rx="1" fill="url(#cg10)"/></svg>
<div class="btn" style="left:793.7px;top:353.8px;width:19.5px;height:10.4px;background:#5f5f5f;font-size:7.6px;line-height:12px;color:#c4c4c4;">R&nbsp;&nbsp;&nbsp;I</div>
<div class="btn" style="left:793.0px;top:367.3px;width:20.2px;height:10.2px;background:#646464;font-size:8.5px;line-height:12.2px;color:#f6f6f6;-webkit-text-stroke:0.3px #f6f6f6;">M</div>
<div class="btn" style="left:817.0px;top:367.3px;width:20.2px;height:10.2px;background:#646464;font-size:8.5px;line-height:12.2px;color:#f6f6f6;-webkit-text-stroke:0.3px #f6f6f6;">S</div>
<div style="position:absolute;left:893.5999999999999px;top:75.4px;width:1px;height:306px;background:#4a4a4a;"></div>
<div class="btn" style="left:845.8px;top:81px;width:43.5px;height:10.5px;background:#5c5c5c;"></div>
<div style="position:absolute;left:857.0px;top:81px;width:0.8px;height:10.5px;background:#545454;"></div>
<div class="t" style="left:858.0px;top:83.2px;width:31px;text-align:center;font-size:7.5px;color:#2c2c2c;">Input</div>
<svg style="position:absolute;left:846.3px;top:81.7px" width="11" height="9.5" viewBox="0 0 11 9.5"><circle cx="4.1" cy="4.75" r="2.6" fill="none" stroke="#eee" stroke-width="0.9"/><circle cx="6.9" cy="4.75" r="2.6" fill="none" stroke="#eee" stroke-width="0.9"/></svg>
<div style="position:absolute;left:845.8px;top:98px;width:43.5px;height:61px;background:#4c4c4c;border:0.6px solid #484848;border-radius:3px;"></div>
<div class="fx" style="left:845.8px;top:98.3px;width:43.5px;">Noise Gate</div>
<div class="fx" style="left:845.8px;top:109.64999999999999px;width:43.5px;">Channel EQ</div>
<div class="fx" style="left:845.8px;top:121.0px;width:43.5px;">Compressor</div>
<div class="fx" style="left:845.8px;top:132.35px;width:43.5px;">St-Delay</div>
<div class="btn" style="left:845.8px;top:174.4px;width:43.5px;height:10.3px;background:#666666;font-size:7.6px;line-height:12.4px;color:#ececec;">Surround</div>
<div class="btn" style="left:845.8px;top:189.4px;width:43.5px;height:11.5px;background:#393939;border-radius:1px;font-size:7.9px;line-height:12.8px;color:#d9b93a;">1: Vocals</div>
<svg style="position:absolute;left:842.3px;top:200px" width="52" height="32" viewBox="842.3 200 52 32"><circle cx="865.10" cy="203.90" r="1.05" fill="#a0a0a0"/><circle cx="855.20" cy="208.00" r="1.05" fill="#a0a0a0"/><circle cx="851.10" cy="217.90" r="1.05" fill="#a0a0a0"/><circle cx="855.20" cy="227.80" r="1.05" fill="#a0a0a0"/><circle cx="875.00" cy="227.80" r="1.05" fill="#a0a0a0"/><circle cx="879.10" cy="217.90" r="1.05" fill="#a0a0a0"/><circle cx="875.00" cy="208.00" r="1.05" fill="#a0a0a0"/><circle cx="865.0999999999999" cy="217.9" r="11" fill="#474747"/><circle cx="865.0999999999999" cy="217.9" r="9.7" fill="#363636"/><path d="M865.0999999999999,217.9 L857.87,209.87 A10.8,10.8 0 0 1 872.33,209.87 Z" fill="#3f7d48" stroke="#57a560" stroke-width="0.5"/><circle cx="864.8" cy="209.3" r="1.75" fill="#44dd55"/><rect x="883.4999999999999" y="205.9" width="1.2" height="22.6" fill="#2a2a2a"/><circle cx="884.0999999999999" cy="228.5" r="1.8" fill="#44dd55"/></svg>
<div class="btn" style="left:845.5px;top:233.5px;width:21px;height:11.2px;background:#353535;border-radius:1px;font-size:8px;line-height:12.4px;color:#5cd264;">-16.0</div>
<div class="btn" style="left:868.6999999999999px;top:233.5px;width:21.4px;height:11.2px;background:#353535;border-radius:1px;font-size:8px;line-height:12.4px;color:#eeeeee;">-7.2</div>
<svg style="position:absolute;left:842.3px;top:255px" width="52" height="100" viewBox="842.3 255 52 100"><rect x="852.5" y="258.8" width="7.3" height="90.6" fill="#363636"/><text x="850.0999999999999" y="262.0" font-size="5.4" fill="#b5b5b5" text-anchor="end" font-family="Liberation Sans">0</text><rect x="850.5999999999999" y="259.8" width="1.2" height="0.6" fill="#9a9a9a"/><text x="850.0999999999999" y="267.9" font-size="5.4" fill="#b5b5b5" text-anchor="end" font-family="Liberation Sans">3</text><rect x="850.5999999999999" y="265.7" width="1.2" height="0.6" fill="#9a9a9a"/><text x="850.0999999999999" y="274.09999999999997" font-size="5.4" fill="#b5b5b5" text-anchor="end" font-family="Liberation Sans">6</text><rect x="850.5999999999999" y="271.9" width="1.2" height="0.6" fill="#9a9a9a"/><text x="850.0999999999999" y="279.9" font-size="5.4" fill="#b5b5b5" text-anchor="end" font-family="Liberation Sans">9</text><rect x="850.5999999999999" y="277.7" width="1.2" height="0.6" fill="#9a9a9a"/><text x="850.0999999999999" y="285.59999999999997" font-size="5.4" fill="#b5b5b5" text-anchor="end" font-family="Liberation Sans">12</text><rect x="850.5999999999999" y="283.4" width="1.2" height="0.6" fill="#9a9a9a"/><text x="850.0999999999999" y="291.5" font-size="5.4" fill="#b5b5b5" text-anchor="end" font-family="Liberation Sans">15</text><rect x="850.5999999999999" y="289.3" width="1.2" height="0.6" fill="#9a9a9a"/><text x="850.0999999999999" y="297.59999999999997" font-size="5.4" fill="#b5b5b5" text-anchor="end" font-family="Liberation Sans">18</text><rect x="850.5999999999999" y="295.4" width="1.2" height="0.6" fill="#9a9a9a"/><text x="850.0999999999999" y="303.4" font-size="5.4" fill="#b5b5b5" text-anchor="end" font-family="Liberation Sans">21</text><rect x="850.5999999999999" y="301.2" width="1.2" height="0.6" fill="#9a9a9a"/><text x="850.0999999999999" y="309.09999999999997" font-size="5.4" fill="#b5b5b5" text-anchor="end" font-family="Liberation Sans">24</text><rect x="850.5999999999999" y="306.9" width="1.2" height="0.6" fill="#9a9a9a"/><text x="850.0999999999999" y="317.2" font-size="5.4" fill="#b5b5b5" text-anchor="end" font-family="Liberation Sans">30</text><rect x="850.5999999999999" y="315.0" width="1.2" height="0.6" fill="#9a9a9a"/><text x="850.0999999999999" y="324.09999999999997" font-size="5.4" fill="#b5b5b5" text-anchor="end" font-family="Liberation Sans">35</text><rect x="850.5999999999999" y="321.9" width="1.2" height="0.6" fill="#9a9a9a"/><text x="850.0999999999999" y="330.7" font-size="5.4" fill="#b5b5b5" text-anchor="end" font-family="Liberation Sans">40</text><rect x="850.5999999999999" y="328.5" width="1.2" height="0.6" fill="#9a9a9a"/><text x="850.0999999999999" y="337.2" font-size="5.4" fill="#b5b5b5" text-anchor="end" font-family="Liberation Sans">45</text><rect x="850.5999999999999" y="335.0" width="1.2" height="0.6" fill="#9a9a9a"/><text x="850.0999999999999" y="343.9" font-size="5.4" fill="#b5b5b5" text-anchor="end" font-family="Liberation Sans">50</text><rect x="850.5999999999999" y="341.7" width="1.2" height="0.6" fill="#9a9a9a"/><text x="850.0999999999999" y="351.0" font-size="5.4" fill="#b5b5b5" text-anchor="end" font-family="Liberation Sans">60</text><rect x="850.5999999999999" y="348.8" width="1.2" height="0.6" fill="#9a9a9a"/><rect x="853.15" y="296.7" width="2.3" height="52.69999999999999" fill="#55e060"/><rect x="856.35" y="296.7" width="2.3" height="52.69999999999999" fill="#55e060"/><rect x="853.15" y="291" width="2.3" height="0.9" fill="#55e060"/><rect x="856.35" y="291" width="2.3" height="0.9" fill="#55e060"/><rect x="878.5" y="259" width="1.3" height="91" fill="#2c2c2c"/><rect x="871.7" y="260.20000000000005" width="6.3" height="0.8" fill="#9a9a9a"/><rect x="871.7" y="271.6" width="6.3" height="0.8" fill="#9a9a9a"/><rect x="870.7" y="282.35" width="7.3" height="1.3" fill="#c8c8c8"/><rect x="871.7" y="294.3" width="6.3" height="0.8" fill="#9a9a9a"/><rect x="871.7" y="305.8" width="6.3" height="0.8" fill="#9a9a9a"/><rect x="871.7" y="313.40000000000003" width="6.3" height="0.8" fill="#9a9a9a"/><rect x="871.7" y="323.0" width="6.3" height="0.8" fill="#9a9a9a"/><rect x="871.7" y="330.3" width="6.3" height="0.8" fill="#9a9a9a"/><rect x="871.7" y="337.6" width="6.3" height="0.8" fill="#9a9a9a"/><rect x="871.7" y="343.0" width="6.3" height="0.8" fill="#9a9a9a"/><rect x="871.7" y="348.0" width="6.3" height="0.8" fill="#9a9a9a"/><rect x="875.3" y="264.05" width="2.7" height="0.7" fill="#8a8a8a"/><rect x="875.3" y="267.84999999999997" width="2.7" height="0.7" fill="#8a8a8a"/><rect x="875.3" y="275.31666666666666" width="2.7" height="0.7" fill="#8a8a8a"/><rect x="875.3" y="278.9833333333333" width="2.7" height="0.7" fill="#8a8a8a"/><rect x="875.3" y="286.54999999999995" width="2.7" height="0.7" fill="#8a8a8a"/><rect x="875.3" y="290.45" width="2.7" height="0.7" fill="#8a8a8a"/><rect x="875.3" y="298.1833333333333" width="2.7" height="0.7" fill="#8a8a8a"/><rect x="875.3" y="302.01666666666665" width="2.7" height="0.7" fill="#8a8a8a"/><rect x="875.3" y="307.75" width="2.7" height="0.7" fill="#8a8a8a"/><rect x="875.3" y="309.65" width="2.7" height="0.7" fill="#8a8a8a"/><rect x="875.3" y="311.54999999999995" width="2.7" height="0.7" fill="#8a8a8a"/><rect x="875.3" y="316.65" width="2.7" height="0.7" fill="#8a8a8a"/><rect x="875.3" y="319.84999999999997" width="2.7" height="0.7" fill="#8a8a8a"/><rect x="875.3" y="324.87499999999994" width="2.7" height="0.7" fill="#8a8a8a"/><rect x="875.3" y="326.69999999999993" width="2.7" height="0.7" fill="#8a8a8a"/><rect x="875.3" y="328.525" width="2.7" height="0.7" fill="#8a8a8a"/><rect x="875.3" y="332.17499999999995" width="2.7" height="0.7" fill="#8a8a8a"/><rect x="875.3" y="334.0" width="2.7" height="0.7" fill="#8a8a8a"/><rect x="875.3" y="335.825" width="2.7" height="0.7" fill="#8a8a8a"/><rect x="875.3" y="340.34999999999997" width="2.7" height="0.7" fill="#8a8a8a"/><rect x="875.3" y="345.54999999999995" width="2.7" height="0.7" fill="#8a8a8a"/><defs><linearGradient id="cg11" x1="0" y1="0" x2="0" y2="1"><stop offset="0" stop-color="#8a8a8a"/><stop offset="0.04" stop-color="#e8e8e8"/><stop offset="0.14" stop-color="#c8c8c8"/><stop offset="0.2" stop-color="#a4a4a4"/><stop offset="0.46" stop-color="#8c8c8c"/><stop offset="0.5" stop-color="#6a6a6a"/><stop offset="0.54" stop-color="#d6d6d6"/><stop offset="0.82" stop-color="#e2e2e2"/><stop offset="0.88" stop-color="#9a9a9a"/><stop offset="1" stop-color="#777"/></linearGradient></defs><rect x="873.3" y="297.3" width="11.6" height="23.5" rx="1" fill="#2a2a2a" opacity="0.5"/><rect x="873.0999999999999" y="296.7" width="11.6" height="23.5" rx="1" fill="url(#cg11)"/></svg>
<div class="btn" style="left:846.0px;top:353.8px;width:19.5px;height:10.4px;background:#5f5f5f;font-size:7.6px;line-height:12px;color:#c4c4c4;">R&nbsp;&nbsp;&nbsp;I</div>
<div class="btn" style="left:845.3px;top:367.3px;width:20.2px;height:10.2px;background:#646464;font-size:8.5px;line-height:12.2px;color:#f6f6f6;-webkit-text-stroke:0.3px #f6f6f6;">M</div>
<div class="btn" style="left:869.3px;top:367.3px;width:20.2px;height:10.2px;background:#646464;font-size:8.5px;line-height:12.2px;color:#f6f6f6;-webkit-text-stroke:0.3px #f6f6f6;">S</div>
<div style="position:absolute;left:945.8999999999999px;top:75.4px;width:1px;height:316.6px;background:#4a4a4a;"></div>
<div class="btn" style="left:898.0999999999999px;top:81px;width:43.5px;height:10.5px;background:#5c5c5c;"></div>
<div style="position:absolute;left:909.3px;top:81px;width:0.8px;height:10.5px;background:#545454;"></div>
<div class="t" style="left:910.3px;top:83.2px;width:31px;text-align:center;font-size:7.5px;color:#2c2c2c;">Input</div>
<svg style="position:absolute;left:899.0999999999999px;top:81.7px" width="9.5" height="9.5" viewBox="0 0 9.5 9.5"><rect x="1.7" y="1.7" width="6.1" height="6.1" fill="none" stroke="#e8e8e8" stroke-width="0.8"/><rect x="0.8" y="0.8" width="1.8" height="1.8" fill="#fff"/><rect x="6.9" y="0.8" width="1.8" height="1.8" fill="#fff"/><rect x="0.8" y="6.9" width="1.8" height="1.8" fill="#fff"/><rect x="6.9" y="6.9" width="1.8" height="1.8" fill="#fff"/></svg>
<div style="position:absolute;left:898.0999999999999px;top:98px;width:43.5px;height:61px;background:#4c4c4c;border:0.6px solid #484848;border-radius:3px;"></div>
<div class="fx" style="left:898.0999999999999px;top:98.3px;width:43.5px;">Noise Gate</div>
<div class="fx" style="left:898.0999999999999px;top:109.64999999999999px;width:43.5px;">Channel EQ</div>
<div class="fx" style="left:898.0999999999999px;top:121.0px;width:43.5px;">Compressor</div>
<div class="fx" style="left:898.0999999999999px;top:132.35px;width:43.5px;">St-Delay</div>
<div class="btn" style="left:898.0999999999999px;top:174.4px;width:43.5px;height:10.3px;background:#666666;font-size:7.6px;line-height:12.4px;color:#ececec;">Object</div>
<div class="btn" style="left:898.0999999999999px;top:189.4px;width:43.5px;height:11.5px;background:#393939;border-radius:1px;font-size:7.9px;line-height:12.8px;color:#d9b93a;">1: Vocals</div>
<svg style="position:absolute;left:894.5999999999999px;top:200px" width="52" height="32" viewBox="894.5999999999999 200 52 32"><rect x="905.9999999999999" y="206.3" width="22.6" height="22.6" rx="1.5" fill="#3b3b3b" stroke="#2a2a2a" stroke-width="0.9"/><line x1="908.82" y1="206.3" x2="908.82" y2="228.9" stroke="#515151" stroke-width="0.4"/><line x1="905.9999999999999" y1="209.12" x2="928.5999999999999" y2="209.12" stroke="#515151" stroke-width="0.4"/><line x1="911.65" y1="206.3" x2="911.65" y2="228.9" stroke="#515151" stroke-width="0.4"/><line x1="905.9999999999999" y1="211.95" x2="928.5999999999999" y2="211.95" stroke="#515151" stroke-width="0.4"/><line x1="914.47" y1="206.3" x2="914.47" y2="228.9" stroke="#515151" stroke-width="0.4"/><line x1="905.9999999999999" y1="214.78" x2="928.5999999999999" y2="214.78" stroke="#515151" stroke-width="0.4"/><line x1="917.30" y1="206.3" x2="917.30" y2="228.9" stroke="#515151" stroke-width="0.4"/><line x1="905.9999999999999" y1="217.60" x2="928.5999999999999" y2="217.60" stroke="#515151" stroke-width="0.4"/><line x1="920.12" y1="206.3" x2="920.12" y2="228.9" stroke="#515151" stroke-width="0.4"/><line x1="905.9999999999999" y1="220.43" x2="928.5999999999999" y2="220.43" stroke="#515151" stroke-width="0.4"/><line x1="922.95" y1="206.3" x2="922.95" y2="228.9" stroke="#515151" stroke-width="0.4"/><line x1="905.9999999999999" y1="223.25" x2="928.5999999999999" y2="223.25" stroke="#515151" stroke-width="0.4"/><line x1="925.77" y1="206.3" x2="925.77" y2="228.9" stroke="#515151" stroke-width="0.4"/><line x1="905.9999999999999" y1="226.08" x2="928.5999999999999" y2="226.08" stroke="#515151" stroke-width="0.4"/><path d="M906.60,207.50 L920.00,207.50 L919.00,218.00 L907.00,216.00 Z" fill="#3f7d48" stroke="#57a560" stroke-width="0.5" opacity="0.95"/><circle cx="912.8999999999999" cy="209.70000000000002" r="1.75" fill="#44dd55"/><rect x="935.7999999999998" y="205.9" width="1.2" height="22.6" fill="#2a2a2a"/><circle cx="936.3999999999999" cy="215.5" r="1.8" fill="#44dd55"/></svg>
<div class="btn" style="left:897.8px;top:233.5px;width:21px;height:11.2px;background:#353535;border-radius:1px;font-size:8px;line-height:12.4px;color:#5cd264;">-12.5</div>
<div class="btn" style="left:920.9999999999999px;top:233.5px;width:21.4px;height:11.2px;background:#353535;border-radius:1px;font-size:8px;line-height:12.4px;color:#eeeeee;">-6.4</div>
<svg style="position:absolute;left:894.5999999999999px;top:255px" width="52" height="100" viewBox="894.5999999999999 255 52 100"><rect x="904.8" y="258.8" width="7.3" height="90.6" fill="#363636"/><text x="902.3999999999999" y="262.0" font-size="5.4" fill="#b5b5b5" text-anchor="end" font-family="Liberation Sans">0</text><rect x="902.8999999999999" y="259.8" width="1.2" height="0.6" fill="#9a9a9a"/><text x="902.3999999999999" y="267.9" font-size="5.4" fill="#b5b5b5" text-anchor="end" font-family="Liberation Sans">3</text><rect x="902.8999999999999" y="265.7" width="1.2" height="0.6" fill="#9a9a9a"/><text x="902.3999999999999" y="274.09999999999997" font-size="5.4" fill="#b5b5b5" text-anchor="end" font-family="Liberation Sans">6</text><rect x="902.8999999999999" y="271.9" width="1.2" height="0.6" fill="#9a9a9a"/><text x="902.3999999999999" y="279.9" font-size="5.4" fill="#b5b5b5" text-anchor="end" font-family="Liberation Sans">9</text><rect x="902.8999999999999" y="277.7" width="1.2" height="0.6" fill="#9a9a9a"/><text x="902.3999999999999" y="285.59999999999997" font-size="5.4" fill="#b5b5b5" text-anchor="end" font-family="Liberation Sans">12</text><rect x="902.8999999999999" y="283.4" width="1.2" height="0.6" fill="#9a9a9a"/><text x="902.3999999999999" y="291.5" font-size="5.4" fill="#b5b5b5" text-anchor="end" font-family="Liberation Sans">15</text><rect x="902.8999999999999" y="289.3" width="1.2" height="0.6" fill="#9a9a9a"/><text x="902.3999999999999" y="297.59999999999997" font-size="5.4" fill="#b5b5b5" text-anchor="end" font-family="Liberation Sans">18</text><rect x="902.8999999999999" y="295.4" width="1.2" height="0.6" fill="#9a9a9a"/><text x="902.3999999999999" y="303.4" font-size="5.4" fill="#b5b5b5" text-anchor="end" font-family="Liberation Sans">21</text><rect x="902.8999999999999" y="301.2" width="1.2" height="0.6" fill="#9a9a9a"/><text x="902.3999999999999" y="309.09999999999997" font-size="5.4" fill="#b5b5b5" text-anchor="end" font-family="Liberation Sans">24</text><rect x="902.8999999999999" y="306.9" width="1.2" height="0.6" fill="#9a9a9a"/><text x="902.3999999999999" y="317.2" font-size="5.4" fill="#b5b5b5" text-anchor="end" font-family="Liberation Sans">30</text><rect x="902.8999999999999" y="315.0" width="1.2" height="0.6" fill="#9a9a9a"/><text x="902.3999999999999" y="324.09999999999997" font-size="5.4" fill="#b5b5b5" text-anchor="end" font-family="Liberation Sans">35</text><rect x="902.8999999999999" y="321.9" width="1.2" height="0.6" fill="#9a9a9a"/><text x="902.3999999999999" y="330.7" font-size="5.4" fill="#b5b5b5" text-anchor="end" font-family="Liberation Sans">40</text><rect x="902.8999999999999" y="328.5" width="1.2" height="0.6" fill="#9a9a9a"/><text x="902.3999999999999" y="337.2" font-size="5.4" fill="#b5b5b5" text-anchor="end" font-family="Liberation Sans">45</text><rect x="902.8999999999999" y="335.0" width="1.2" height="0.6" fill="#9a9a9a"/><text x="902.3999999999999" y="343.9" font-size="5.4" fill="#b5b5b5" text-anchor="end" font-family="Liberation Sans">50</text><rect x="902.8999999999999" y="341.7" width="1.2" height="0.6" fill="#9a9a9a"/><text x="902.3999999999999" y="351.0" font-size="5.4" fill="#b5b5b5" text-anchor="end" font-family="Liberation Sans">60</text><rect x="902.8999999999999" y="348.8" width="1.2" height="0.6" fill="#9a9a9a"/><rect x="905.4499999999999" y="292.7" width="2.3" height="56.69999999999999" fill="#55e060"/><rect x="908.65" y="292.7" width="2.3" height="56.69999999999999" fill="#55e060"/><rect x="905.4499999999999" y="284" width="2.3" height="0.9" fill="#55e060"/><rect x="908.65" y="284" width="2.3" height="0.9" fill="#55e060"/><rect x="930.8" y="259" width="1.3" height="91" fill="#2c2c2c"/><rect x="924.0" y="260.20000000000005" width="6.3" height="0.8" fill="#9a9a9a"/><rect x="924.0" y="271.6" width="6.3" height="0.8" fill="#9a9a9a"/><rect x="923.0" y="282.35" width="7.3" height="1.3" fill="#c8c8c8"/><rect x="924.0" y="294.3" width="6.3" height="0.8" fill="#9a9a9a"/><rect x="924.0" y="305.8" width="6.3" height="0.8" fill="#9a9a9a"/><rect x="924.0" y="313.40000000000003" width="6.3" height="0.8" fill="#9a9a9a"/><rect x="924.0" y="323.0" width="6.3" height="0.8" fill="#9a9a9a"/><rect x="924.0" y="330.3" width="6.3" height="0.8" fill="#9a9a9a"/><rect x="924.0" y="337.6" width="6.3" height="0.8" fill="#9a9a9a"/><rect x="924.0" y="343.0" width="6.3" height="0.8" fill="#9a9a9a"/><rect x="924.0" y="348.0" width="6.3" height="0.8" fill="#9a9a9a"/><rect x="927.5999999999999" y="264.05" width="2.7" height="0.7" fill="#8a8a8a"/><rect x="927.5999999999999" y="267.84999999999997" width="2.7" height="0.7" fill="#8a8a8a"/><rect x="927.5999999999999" y="275.31666666666666" width="2.7" height="0.7" fill="#8a8a8a"/><rect x="927.5999999999999" y="278.9833333333333" width="2.7" height="0.7" fill="#8a8a8a"/><rect x="927.5999999999999" y="286.54999999999995" width="2.7" height="0.7" fill="#8a8a8a"/><rect x="927.5999999999999" y="290.45" width="2.7" height="0.7" fill="#8a8a8a"/><rect x="927.5999999999999" y="298.1833333333333" width="2.7" height="0.7" fill="#8a8a8a"/><rect x="927.5999999999999" y="302.01666666666665" width="2.7" height="0.7" fill="#8a8a8a"/><rect x="927.5999999999999" y="307.75" width="2.7" height="0.7" fill="#8a8a8a"/><rect x="927.5999999999999" y="309.65" width="2.7" height="0.7" fill="#8a8a8a"/><rect x="927.5999999999999" y="311.54999999999995" width="2.7" height="0.7" fill="#8a8a8a"/><rect x="927.5999999999999" y="316.65" width="2.7" height="0.7" fill="#8a8a8a"/><rect x="927.5999999999999" y="319.84999999999997" width="2.7" height="0.7" fill="#8a8a8a"/><rect x="927.5999999999999" y="324.87499999999994" width="2.7" height="0.7" fill="#8a8a8a"/><rect x="927.5999999999999" y="326.69999999999993" width="2.7" height="0.7" fill="#8a8a8a"/><rect x="927.5999999999999" y="328.525" width="2.7" height="0.7" fill="#8a8a8a"/><rect x="927.5999999999999" y="332.17499999999995" width="2.7" height="0.7" fill="#8a8a8a"/><rect x="927.5999999999999" y="334.0" width="2.7" height="0.7" fill="#8a8a8a"/><rect x="927.5999999999999" y="335.825" width="2.7" height="0.7" fill="#8a8a8a"/><rect x="927.5999999999999" y="340.34999999999997" width="2.7" height="0.7" fill="#8a8a8a"/><rect x="927.5999999999999" y="345.54999999999995" width="2.7" height="0.7" fill="#8a8a8a"/><defs><linearGradient id="cg12" x1="0" y1="0" x2="0" y2="1"><stop offset="0" stop-color="#8a8a8a"/><stop offset="0.04" stop-color="#e8e8e8"/><stop offset="0.14" stop-color="#c8c8c8"/><stop offset="0.2" stop-color="#a4a4a4"/><stop offset="0.46" stop-color="#8c8c8c"/><stop offset="0.5" stop-color="#6a6a6a"/><stop offset="0.54" stop-color="#d6d6d6"/><stop offset="0.82" stop-color="#e2e2e2"/><stop offset="0.88" stop-color="#9a9a9a"/><stop offset="1" stop-color="#777"/></linearGradient></defs><rect x="925.5999999999999" y="295.6" width="11.6" height="23.5" rx="1" fill="#2a2a2a" opacity="0.5"/><rect x="925.3999999999999" y="295" width="11.6" height="23.5" rx="1" fill="url(#cg12)"/></svg>
<div class="btn" style="left:898.3px;top:353.8px;width:19.5px;height:10.4px;background:#5f5f5f;font-size:7.6px;line-height:12px;color:#c4c4c4;">R&nbsp;&nbsp;&nbsp;I</div>
<div class="btn" style="left:897.5999999999999px;top:367.3px;width:20.2px;height:10.2px;background:#646464;font-size:8.5px;line-height:12.2px;color:#f6f6f6;-webkit-text-stroke:0.3px #f6f6f6;">M</div>
<div class="btn" style="left:921.5999999999999px;top:367.3px;width:20.2px;height:10.2px;background:#646464;font-size:8.5px;line-height:12.2px;color:#f6f6f6;-webkit-text-stroke:0.3px #f6f6f6;">S</div>
<div style="position:absolute;left:998.1999999999999px;top:75.4px;width:1px;height:316.6px;background:#4a4a4a;"></div>
<div class="btn" style="left:950.4px;top:81px;width:43.5px;height:10.5px;background:#2f9a3f;font-size:7.5px;line-height:12px;color:#f0fff0;">Alchemy</div>
<div style="position:absolute;left:950.4px;top:98px;width:43.5px;height:61px;background:#4c4c4c;border:0.6px solid #484848;border-radius:3px;"></div>
<div class="fx" style="left:950.4px;top:98.3px;width:43.5px;">Cnsl EQ</div>
<div class="fx" style="left:950.4px;top:109.64999999999999px;width:43.5px;">Beat Break</div>
<div class="btn" style="left:950.4px;top:174.4px;width:43.5px;height:10.3px;background:#666666;font-size:7.6px;line-height:12.4px;color:#ececec;">Object</div>
<div class="btn" style="left:950.4px;top:189.4px;width:43.5px;height:11.5px;background:#393939;border-radius:1px;font-size:7.2px;line-height:12.8px;color:#d9b93a;">2: Keyboards</div>
<svg style="position:absolute;left:946.9px;top:200px" width="52" height="32" viewBox="946.9 200 52 32"><rect x="958.3" y="206.3" width="22.6" height="22.6" rx="1.5" fill="#3b3b3b" stroke="#2a2a2a" stroke-width="0.9"/><line x1="961.12" y1="206.3" x2="961.12" y2="228.9" stroke="#515151" stroke-width="0.4"/><line x1="958.3" y1="209.12" x2="980.9" y2="209.12" stroke="#515151" stroke-width="0.4"/><line x1="963.95" y1="206.3" x2="963.95" y2="228.9" stroke="#515151" stroke-width="0.4"/><line x1="958.3" y1="211.95" x2="980.9" y2="211.95" stroke="#515151" stroke-width="0.4"/><line x1="966.77" y1="206.3" x2="966.77" y2="228.9" stroke="#515151" stroke-width="0.4"/><line x1="958.3" y1="214.78" x2="980.9" y2="214.78" stroke="#515151" stroke-width="0.4"/><line x1="969.60" y1="206.3" x2="969.60" y2="228.9" stroke="#515151" stroke-width="0.4"/><line x1="958.3" y1="217.60" x2="980.9" y2="217.60" stroke="#515151" stroke-width="0.4"/><line x1="972.42" y1="206.3" x2="972.42" y2="228.9" stroke="#515151" stroke-width="0.4"/><line x1="958.3" y1="220.43" x2="980.9" y2="220.43" stroke="#515151" stroke-width="0.4"/><line x1="975.25" y1="206.3" x2="975.25" y2="228.9" stroke="#515151" stroke-width="0.4"/><line x1="958.3" y1="223.25" x2="980.9" y2="223.25" stroke="#515151" stroke-width="0.4"/><line x1="978.07" y1="206.3" x2="978.07" y2="228.9" stroke="#515151" stroke-width="0.4"/><line x1="958.3" y1="226.08" x2="980.9" y2="226.08" stroke="#515151" stroke-width="0.4"/><path d="M958.90,228.10 L980.30,228.10 L969.60,217.80 Z" fill="#3f7d48" stroke="#57a560" stroke-width="0.5" opacity="0.95"/><circle cx="969.5999999999999" cy="225.10000000000002" r="1.75" fill="#44dd55"/><rect x="988.0999999999999" y="205.9" width="1.2" height="22.6" fill="#2a2a2a"/><circle cx="988.6999999999999" cy="228.5" r="1.8" fill="#44dd55"/></svg>
<div class="btn" style="left:950.1px;top:233.5px;width:21px;height:11.2px;background:#353535;border-radius:1px;font-size:8px;line-height:12.4px;color:#5cd264;">-6.2</div>
<div class="btn" style="left:973.3px;top:233.5px;width:21.4px;height:11.2px;background:#353535;border-radius:1px;font-size:8px;line-height:12.4px;color:#eeeeee;">-3.5</div>
<svg style="position:absolute;left:946.9px;top:255px" width="52" height="100" viewBox="946.9 255 52 100"><rect x="957.1" y="258.8" width="7.3" height="90.6" fill="#363636"/><text x="954.6999999999999" y="262.0" font-size="5.4" fill="#b5b5b5" text-anchor="end" font-family="Liberation Sans">0</text><rect x="955.1999999999999" y="259.8" width="1.2" height="0.6" fill="#9a9a9a"/><text x="954.6999999999999" y="267.9" font-size="5.4" fill="#b5b5b5" text-anchor="end" font-family="Liberation Sans">3</text><rect x="955.1999999999999" y="265.7" width="1.2" height="0.6" fill="#9a9a9a"/><text x="954.6999999999999" y="274.09999999999997" font-size="5.4" fill="#b5b5b5" text-anchor="end" font-family="Liberation Sans">6</text><rect x="955.1999999999999" y="271.9" width="1.2" height="0.6" fill="#9a9a9a"/><text x="954.6999999999999" y="279.9" font-size="5.4" fill="#b5b5b5" text-anchor="end" font-family="Liberation Sans">9</text><rect x="955.1999999999999" y="277.7" width="1.2" height="0.6" fill="#9a9a9a"/><text x="954.6999999999999" y="285.59999999999997" font-size="5.4" fill="#b5b5b5" text-anchor="end" font-family="Liberation Sans">12</text><rect x="955.1999999999999" y="283.4" width="1.2" height="0.6" fill="#9a9a9a"/><text x="954.6999999999999" y="291.5" font-size="5.4" fill="#b5b5b5" text-anchor="end" font-family="Liberation Sans">15</text><rect x="955.1999999999999" y="289.3" width="1.2" height="0.6" fill="#9a9a9a"/><text x="954.6999999999999" y="297.59999999999997" font-size="5.4" fill="#b5b5b5" text-anchor="end" font-family="Liberation Sans">18</text><rect x="955.1999999999999" y="295.4" width="1.2" height="0.6" fill="#9a9a9a"/><text x="954.6999999999999" y="303.4" font-size="5.4" fill="#b5b5b5" text-anchor="end" font-family="Liberation Sans">21</text><rect x="955.1999999999999" y="301.2" width="1.2" height="0.6" fill="#9a9a9a"/><text x="954.6999999999999" y="309.09999999999997" font-size="5.4" fill="#b5b5b5" text-anchor="end" font-family="Liberation Sans">24</text><rect x="955.1999999999999" y="306.9" width="1.2" height="0.6" fill="#9a9a9a"/><text x="954.6999999999999" y="317.2" font-size="5.4" fill="#b5b5b5" text-anchor="end" font-family="Liberation Sans">30</text><rect x="955.1999999999999" y="315.0" width="1.2" height="0.6" fill="#9a9a9a"/><text x="954.6999999999999" y="324.09999999999997" font-size="5.4" fill="#b5b5b5" text-anchor="end" font-family="Liberation Sans">35</text><rect x="955.1999999999999" y="321.9" width="1.2" height="0.6" fill="#9a9a9a"/><text x="954.6999999999999" y="330.7" font-size="5.4" fill="#b5b5b5" text-anchor="end" font-family="Liberation Sans">40</text><rect x="955.1999999999999" y="328.5" width="1.2" height="0.6" fill="#9a9a9a"/><text x="954.6999999999999" y="337.2" font-size="5.4" fill="#b5b5b5" text-anchor="end" font-family="Liberation Sans">45</text><rect x="955.1999999999999" y="335.0" width="1.2" height="0.6" fill="#9a9a9a"/><text x="954.6999999999999" y="343.9" font-size="5.4" fill="#b5b5b5" text-anchor="end" font-family="Liberation Sans">50</text><rect x="955.1999999999999" y="341.7" width="1.2" height="0.6" fill="#9a9a9a"/><text x="954.6999999999999" y="351.0" font-size="5.4" fill="#b5b5b5" text-anchor="end" font-family="Liberation Sans">60</text><rect x="955.1999999999999" y="348.8" width="1.2" height="0.6" fill="#9a9a9a"/><rect x="957.75" y="276.8" width="2.3" height="72.59999999999997" fill="#55e060"/><rect x="960.95" y="279.3" width="2.3" height="70.09999999999997" fill="#55e060"/><defs><linearGradient id="yg13" x1="0" y1="0" x2="0" y2="1"><stop offset="0" stop-color="#d6d633"/><stop offset="1" stop-color="#55e060"/></linearGradient></defs><rect x="957.75" y="276.8" width="2.3" height="12" fill="url(#yg13)"/><rect x="960.95" y="279.3" width="2.3" height="12" fill="url(#yg13)"/><rect x="960.95" y="272.4" width="2.3" height="1" fill="#e8c020"/><rect x="983.1" y="259" width="1.3" height="91" fill="#2c2c2c"/><rect x="976.3000000000001" y="260.20000000000005" width="6.3" height="0.8" fill="#9a9a9a"/><rect x="976.3000000000001" y="271.6" width="6.3" height="0.8" fill="#9a9a9a"/><rect x="975.3000000000001" y="282.35" width="7.3" height="1.3" fill="#c8c8c8"/><rect x="976.3000000000001" y="294.3" width="6.3" height="0.8" fill="#9a9a9a"/><rect x="976.3000000000001" y="305.8" width="6.3" height="0.8" fill="#9a9a9a"/><rect x="976.3000000000001" y="313.40000000000003" width="6.3" height="0.8" fill="#9a9a9a"/><rect x="976.3000000000001" y="323.0" width="6.3" height="0.8" fill="#9a9a9a"/><rect x="976.3000000000001" y="330.3" width="6.3" height="0.8" fill="#9a9a9a"/><rect x="976.3000000000001" y="337.6" width="6.3" height="0.8" fill="#9a9a9a"/><rect x="976.3000000000001" y="343.0" width="6.3" height="0.8" fill="#9a9a9a"/><rect x="976.3000000000001" y="348.0" width="6.3" height="0.8" fill="#9a9a9a"/><rect x="979.9" y="264.05" width="2.7" height="0.7" fill="#8a8a8a"/><rect x="979.9" y="267.84999999999997" width="2.7" height="0.7" fill="#8a8a8a"/><rect x="979.9" y="275.31666666666666" width="2.7" height="0.7" fill="#8a8a8a"/><rect x="979.9" y="278.9833333333333" width="2.7" height="0.7" fill="#8a8a8a"/><rect x="979.9" y="286.54999999999995" width="2.7" height="0.7" fill="#8a8a8a"/><rect x="979.9" y="290.45" width="2.7" height="0.7" fill="#8a8a8a"/><rect x="979.9" y="298.1833333333333" width="2.7" height="0.7" fill="#8a8a8a"/><rect x="979.9" y="302.01666666666665" width="2.7" height="0.7" fill="#8a8a8a"/><rect x="979.9" y="307.75" width="2.7" height="0.7" fill="#8a8a8a"/><rect x="979.9" y="309.65" width="2.7" height="0.7" fill="#8a8a8a"/><rect x="979.9" y="311.54999999999995" width="2.7" height="0.7" fill="#8a8a8a"/><rect x="979.9" y="316.65" width="2.7" height="0.7" fill="#8a8a8a"/><rect x="979.9" y="319.84999999999997" width="2.7" height="0.7" fill="#8a8a8a"/><rect x="979.9" y="324.87499999999994" width="2.7" height="0.7" fill="#8a8a8a"/><rect x="979.9" y="326.69999999999993" width="2.7" height="0.7" fill="#8a8a8a"/><rect x="979.9" y="328.525" width="2.7" height="0.7" fill="#8a8a8a"/><rect x="979.9" y="332.17499999999995" width="2.7" height="0.7" fill="#8a8a8a"/><rect x="979.9" y="334.0" width="2.7" height="0.7" fill="#8a8a8a"/><rect x="979.9" y="335.825" width="2.7" height="0.7" fill="#8a8a8a"/><rect x="979.9" y="340.34999999999997" width="2.7" height="0.7" fill="#8a8a8a"/><rect x="979.9" y="345.54999999999995" width="2.7" height="0.7" fill="#8a8a8a"/><defs><linearGradient id="cg13" x1="0" y1="0" x2="0" y2="1"><stop offset="0" stop-color="#8a8a8a"/><stop offset="0.04" stop-color="#e8e8e8"/><stop offset="0.14" stop-color="#c8c8c8"/><stop offset="0.2" stop-color="#a4a4a4"/><stop offset="0.46" stop-color="#8c8c8c"/><stop offset="0.5" stop-color="#6a6a6a"/><stop offset="0.54" stop-color="#d6d6d6"/><stop offset="0.82" stop-color="#e2e2e2"/><stop offset="0.88" stop-color="#9a9a9a"/><stop offset="1" stop-color="#777"/></linearGradient></defs><rect x="977.9" y="284.90000000000003" width="11.6" height="23.5" rx="1" fill="#2a2a2a" opacity="0.5"/><rect x="977.6999999999999" y="284.3" width="11.6" height="23.5" rx="1" fill="url(#cg13)"/></svg>
<div class="btn" style="left:949.9px;top:367.3px;width:20.2px;height:10.2px;background:#646464;font-size:8.5px;line-height:12.2px;color:#f6f6f6;-webkit-text-stroke:0.3px #f6f6f6;">M</div>
<div class="btn" style="left:973.9px;top:367.3px;width:20.2px;height:10.2px;background:#646464;font-size:8.5px;line-height:12.2px;color:#f6f6f6;-webkit-text-stroke:0.3px #f6f6f6;">S</div>
<div style="position:absolute;left:1050.5px;top:75.4px;width:1px;height:316.6px;background:#4a4a4a;"></div>
<div class="btn" style="left:1002.6999999999999px;top:81px;width:43.5px;height:10.5px;background:#2f9a3f;font-size:7.5px;line-height:12px;color:#f0fff0;">Sampler</div>
<div style="position:absolute;left:1002.6999999999999px;top:98px;width:43.5px;height:61px;background:#4c4c4c;border:0.6px solid #484848;border-radius:3px;"></div>
<div class="fx" style="left:1002.6999999999999px;top:98.3px;width:43.5px;">Cnsl EQ</div>
<div class="fx" style="left:1002.6999999999999px;top:109.64999999999999px;width:43.5px;">Compressor</div>
<div class="fx" style="left:1002.6999999999999px;top:121.0px;width:43.5px;">Bitcrusher</div>
<div class="btn" style="left:1002.6999999999999px;top:174.4px;width:43.5px;height:10.3px;background:#666666;font-size:7.6px;line-height:12.4px;color:#ececec;">Object</div>
<div class="btn" style="left:1002.6999999999999px;top:189.4px;width:43.5px;height:11.5px;background:#393939;border-radius:1px;font-size:7.2px;line-height:12.8px;color:#d9b93a;">2: Keyboards</div>
<svg style="position:absolute;left:999.1999999999999px;top:200px" width="52" height="32" viewBox="999.1999999999999 200 52 32"><rect x="1010.5999999999999" y="206.3" width="22.6" height="22.6" rx="1.5" fill="#3b3b3b" stroke="#2a2a2a" stroke-width="0.9"/><line x1="1013.42" y1="206.3" x2="1013.42" y2="228.9" stroke="#515151" stroke-width="0.4"/><line x1="1010.5999999999999" y1="209.12" x2="1033.1999999999998" y2="209.12" stroke="#515151" stroke-width="0.4"/><line x1="1016.25" y1="206.3" x2="1016.25" y2="228.9" stroke="#515151" stroke-width="0.4"/><line x1="1010.5999999999999" y1="211.95" x2="1033.1999999999998" y2="211.95" stroke="#515151" stroke-width="0.4"/><line x1="1019.07" y1="206.3" x2="1019.07" y2="228.9" stroke="#515151" stroke-width="0.4"/><line x1="1010.5999999999999" y1="214.78" x2="1033.1999999999998" y2="214.78" stroke="#515151" stroke-width="0.4"/><line x1="1021.90" y1="206.3" x2="1021.90" y2="228.9" stroke="#515151" stroke-width="0.4"/><line x1="1010.5999999999999" y1="217.60" x2="1033.1999999999998" y2="217.60" stroke="#515151" stroke-width="0.4"/><line x1="1024.72" y1="206.3" x2="1024.72" y2="228.9" stroke="#515151" stroke-width="0.4"/><line x1="1010.5999999999999" y1="220.43" x2="1033.1999999999998" y2="220.43" stroke="#515151" stroke-width="0.4"/><line x1="1027.55" y1="206.3" x2="1027.55" y2="228.9" stroke="#515151" stroke-width="0.4"/><line x1="1010.5999999999999" y1="223.25" x2="1033.1999999999998" y2="223.25" stroke="#515151" stroke-width="0.4"/><line x1="1030.38" y1="206.3" x2="1030.38" y2="228.9" stroke="#515151" stroke-width="0.4"/><line x1="1010.5999999999999" y1="226.08" x2="1033.1999999999998" y2="226.08" stroke="#515151" stroke-width="0.4"/><path d="M1011.20,207.10 L1032.60,207.10 L1021.90,217.80 Z" fill="#3f7d48" stroke="#57a560" stroke-width="0.5" opacity="0.95"/><circle cx="1021.8999999999999" cy="208.3" r="1.75" fill="#44dd55"/><rect x="1040.4" y="205.9" width="1.2" height="22.6" fill="#2a2a2a"/><circle cx="1041.0" cy="228.5" r="1.8" fill="#44dd55"/></svg>
<div class="btn" style="left:1002.4px;top:233.5px;width:21px;height:11.2px;background:#353535;border-radius:1px;font-size:8px;line-height:12.4px;color:#5cd264;">-5.6</div>
<div class="btn" style="left:1025.6px;top:233.5px;width:21.4px;height:11.2px;background:#353535;border-radius:1px;font-size:8px;line-height:12.4px;color:#eeeeee;">-18.2</div>
<svg style="position:absolute;left:999.1999999999999px;top:255px" width="52" height="100" viewBox="999.1999999999999 255 52 100"><rect x="1009.4" y="258.8" width="7.3" height="90.6" fill="#363636"/><text x="1006.9999999999999" y="262.0" font-size="5.4" fill="#b5b5b5" text-anchor="end" font-family="Liberation Sans">0</text><rect x="1007.4999999999999" y="259.8" width="1.2" height="0.6" fill="#9a9a9a"/><text x="1006.9999999999999" y="267.9" font-size="5.4" fill="#b5b5b5" text-anchor="end" font-family="Liberation Sans">3</text><rect x="1007.4999999999999" y="265.7" width="1.2" height="0.6" fill="#9a9a9a"/><text x="1006.9999999999999" y="274.09999999999997" font-size="5.4" fill="#b5b5b5" text-anchor="end" font-family="Liberation Sans">6</text><rect x="1007.4999999999999" y="271.9" width="1.2" height="0.6" fill="#9a9a9a"/><text x="1006.9999999999999" y="279.9" font-size="5.4" fill="#b5b5b5" text-anchor="end" font-family="Liberation Sans">9</text><rect x="1007.4999999999999" y="277.7" width="1.2" height="0.6" fill="#9a9a9a"/><text x="1006.9999999999999" y="285.59999999999997" font-size="5.4" fill="#b5b5b5" text-anchor="end" font-family="Liberation Sans">12</text><rect x="1007.4999999999999" y="283.4" width="1.2" height="0.6" fill="#9a9a9a"/><text x="1006.9999999999999" y="291.5" font-size="5.4" fill="#b5b5b5" text-anchor="end" font-family="Liberation Sans">15</text><rect x="1007.4999999999999" y="289.3" width="1.2" height="0.6" fill="#9a9a9a"/><text x="1006.9999999999999" y="297.59999999999997" font-size="5.4" fill="#b5b5b5" text-anchor="end" font-family="Liberation Sans">18</text><rect x="1007.4999999999999" y="295.4" width="1.2" height="0.6" fill="#9a9a9a"/><text x="1006.9999999999999" y="303.4" font-size="5.4" fill="#b5b5b5" text-anchor="end" font-family="Liberation Sans">21</text><rect x="1007.4999999999999" y="301.2" width="1.2" height="0.6" fill="#9a9a9a"/><text x="1006.9999999999999" y="309.09999999999997" font-size="5.4" fill="#b5b5b5" text-anchor="end" font-family="Liberation Sans">24</text><rect x="1007.4999999999999" y="306.9" width="1.2" height="0.6" fill="#9a9a9a"/><text x="1006.9999999999999" y="317.2" font-size="5.4" fill="#b5b5b5" text-anchor="end" font-family="Liberation Sans">30</text><rect x="1007.4999999999999" y="315.0" width="1.2" height="0.6" fill="#9a9a9a"/><text x="1006.9999999999999" y="324.09999999999997" font-size="5.4" fill="#b5b5b5" text-anchor="end" font-family="Liberation Sans">35</text><rect x="1007.4999999999999" y="321.9" width="1.2" height="0.6" fill="#9a9a9a"/><text x="1006.9999999999999" y="330.7" font-size="5.4" fill="#b5b5b5" text-anchor="end" font-family="Liberation Sans">40</text><rect x="1007.4999999999999" y="328.5" width="1.2" height="0.6" fill="#9a9a9a"/><text x="1006.9999999999999" y="337.2" font-size="5.4" fill="#b5b5b5" text-anchor="end" font-family="Liberation Sans">45</text><rect x="1007.4999999999999" y="335.0" width="1.2" height="0.6" fill="#9a9a9a"/><text x="1006.9999999999999" y="343.9" font-size="5.4" fill="#b5b5b5" text-anchor="end" font-family="Liberation Sans">50</text><rect x="1007.4999999999999" y="341.7" width="1.2" height="0.6" fill="#9a9a9a"/><text x="1006.9999999999999" y="351.0" font-size="5.4" fill="#b5b5b5" text-anchor="end" font-family="Liberation Sans">60</text><rect x="1007.4999999999999" y="348.8" width="1.2" height="0.6" fill="#9a9a9a"/><rect x="1010.05" y="285.6" width="2.3" height="63.799999999999955" fill="#55e060"/><rect x="1013.25" y="285.6" width="2.3" height="63.799999999999955" fill="#55e060"/><rect x="1010.05" y="279.3" width="2.3" height="1" fill="#e8c020"/><rect x="1013.25" y="274.9" width="2.3" height="1" fill="#e8c020"/><rect x="1035.3999999999999" y="259" width="1.3" height="91" fill="#2c2c2c"/><rect x="1028.6" y="260.20000000000005" width="6.3" height="0.8" fill="#9a9a9a"/><rect x="1028.6" y="271.6" width="6.3" height="0.8" fill="#9a9a9a"/><rect x="1027.6" y="282.35" width="7.3" height="1.3" fill="#c8c8c8"/><rect x="1028.6" y="294.3" width="6.3" height="0.8" fill="#9a9a9a"/><rect x="1028.6" y="305.8" width="6.3" height="0.8" fill="#9a9a9a"/><rect x="1028.6" y="313.40000000000003" width="6.3" height="0.8" fill="#9a9a9a"/><rect x="1028.6" y="323.0" width="6.3" height="0.8" fill="#9a9a9a"/><rect x="1028.6" y="330.3" width="6.3" height="0.8" fill="#9a9a9a"/><rect x="1028.6" y="337.6" width="6.3" height="0.8" fill="#9a9a9a"/><rect x="1028.6" y="343.0" width="6.3" height="0.8" fill="#9a9a9a"/><rect x="1028.6" y="348.0" width="6.3" height="0.8" fill="#9a9a9a"/><rect x="1032.1999999999998" y="264.05" width="2.7" height="0.7" fill="#8a8a8a"/><rect x="1032.1999999999998" y="267.84999999999997" width="2.7" height="0.7" fill="#8a8a8a"/><rect x="1032.1999999999998" y="275.31666666666666" width="2.7" height="0.7" fill="#8a8a8a"/><rect x="1032.1999999999998" y="278.9833333333333" width="2.7" height="0.7" fill="#8a8a8a"/><rect x="1032.1999999999998" y="286.54999999999995" width="2.7" height="0.7" fill="#8a8a8a"/><rect x="1032.1999999999998" y="290.45" width="2.7" height="0.7" fill="#8a8a8a"/><rect x="1032.1999999999998" y="298.1833333333333" width="2.7" height="0.7" fill="#8a8a8a"/><rect x="1032.1999999999998" y="302.01666666666665" width="2.7" height="0.7" fill="#8a8a8a"/><rect x="1032.1999999999998" y="307.75" width="2.7" height="0.7" fill="#8a8a8a"/><rect x="1032.1999999999998" y="309.65" width="2.7" height="0.7" fill="#8a8a8a"/><rect x="1032.1999999999998" y="311.54999999999995" width="2.7" height="0.7" fill="#8a8a8a"/><rect x="1032.1999999999998" y="316.65" width="2.7" height="0.7" fill="#8a8a8a"/><rect x="1032.1999999999998" y="319.84999999999997" width="2.7" height="0.7" fill="#8a8a8a"/><rect x="1032.1999999999998" y="324.87499999999994" width="2.7" height="0.7" fill="#8a8a8a"/><rect x="1032.1999999999998" y="326.69999999999993" width="2.7" height="0.7" fill="#8a8a8a"/><rect x="1032.1999999999998" y="328.525" width="2.7" height="0.7" fill="#8a8a8a"/><rect x="1032.1999999999998" y="332.17499999999995" width="2.7" height="0.7" fill="#8a8a8a"/><rect x="1032.1999999999998" y="334.0" width="2.7" height="0.7" fill="#8a8a8a"/><rect x="1032.1999999999998" y="335.825" width="2.7" height="0.7" fill="#8a8a8a"/><rect x="1032.1999999999998" y="340.34999999999997" width="2.7" height="0.7" fill="#8a8a8a"/><rect x="1032.1999999999998" y="345.54999999999995" width="2.7" height="0.7" fill="#8a8a8a"/><defs><linearGradient id="cg14" x1="0" y1="0" x2="0" y2="1"><stop offset="0" stop-color="#8a8a8a"/><stop offset="0.04" stop-color="#e8e8e8"/><stop offset="0.14" stop-color="#c8c8c8"/><stop offset="0.2" stop-color="#a4a4a4"/><stop offset="0.46" stop-color="#8c8c8c"/><stop offset="0.5" stop-color="#6a6a6a"/><stop offset="0.54" stop-color="#d6d6d6"/><stop offset="0.82" stop-color="#e2e2e2"/><stop offset="0.88" stop-color="#9a9a9a"/><stop offset="1" stop-color="#777"/></linearGradient></defs><rect x="1030.1999999999998" y="317.3" width="11.6" height="23.5" rx="1" fill="#2a2a2a" opacity="0.5"/><rect x="1030.0" y="316.7" width="11.6" height="23.5" rx="1" fill="url(#cg14)"/></svg>
<div class="btn" style="left:1002.1999999999999px;top:367.3px;width:20.2px;height:10.2px;background:#646464;font-size:8.5px;line-height:12.2px;color:#f6f6f6;-webkit-text-stroke:0.3px #f6f6f6;">M</div>
<div class="btn" style="left:1026.1999999999998px;top:367.3px;width:20.2px;height:10.2px;background:#646464;font-size:8.5px;line-height:12.2px;color:#f6f6f6;-webkit-text-stroke:0.3px #f6f6f6;">S</div>
<div style="position:absolute;left:1102.8px;top:75.4px;width:1px;height:316.6px;background:#4a4a4a;"></div>
<div class="btn" style="left:1055.0px;top:81px;width:43.5px;height:10.5px;background:#2f9a3f;font-size:7.5px;line-height:12px;color:#f0fff0;">RetroSyn</div>
<div style="position:absolute;left:1055.0px;top:98px;width:43.5px;height:61px;background:#4c4c4c;border:0.6px solid #484848;border-radius:3px;"></div>
<div class="fx" style="left:1055.0px;top:98.3px;width:43.5px;">Cnsl EQ</div>
<div class="fx" style="left:1055.0px;top:109.64999999999999px;width:43.5px;">SilverVerb</div>
<div class="fx" style="left:1055.0px;top:121.0px;width:43.5px;">Channel EQ</div>
<div class="btn" style="left:1055.0px;top:174.4px;width:43.5px;height:10.3px;background:#666666;font-size:7.6px;line-height:12.4px;color:#ececec;">Bus 7</div>
<div class="btn" style="left:1055.0px;top:189.4px;width:43.5px;height:11.5px;background:#393939;border-radius:1px;font-size:7.2px;line-height:12.8px;color:#d9b93a;">2: Keyboards</div>
<svg style="position:absolute;left:1051.5px;top:200px" width="52" height="32" viewBox="1051.5 200 52 32"><circle cx="1074.30" cy="203.90" r="1.05" fill="#a0a0a0"/><circle cx="1064.40" cy="208.00" r="1.05" fill="#a0a0a0"/><circle cx="1060.30" cy="217.90" r="1.05" fill="#a0a0a0"/><circle cx="1064.40" cy="227.80" r="1.05" fill="#a0a0a0"/><circle cx="1084.20" cy="227.80" r="1.05" fill="#a0a0a0"/><circle cx="1088.30" cy="217.90" r="1.05" fill="#a0a0a0"/><circle cx="1084.20" cy="208.00" r="1.05" fill="#a0a0a0"/><circle cx="1074.3" cy="217.9" r="11" fill="#474747"/><circle cx="1074.3" cy="217.9" r="9.7" fill="#363636"/><path d="M1074.3,217.9 L1067.09,210.69 A10.2,10.2 0 0 1 1081.51,210.69 Z" fill="#3f7d48" stroke="#57a560" stroke-width="0.5"/><circle cx="1074.3" cy="208.3" r="1.75" fill="#44dd55"/><rect x="1092.7" y="205.9" width="1.2" height="22.6" fill="#2a2a2a"/><circle cx="1093.3" cy="228.5" r="1.8" fill="#44dd55"/></svg>
<div class="btn" style="left:1054.7px;top:233.5px;width:21px;height:11.2px;background:#353535;border-radius:1px;font-size:8px;line-height:12.4px;color:#5cd264;">-15.7</div>
<div class="btn" style="left:1077.9px;top:233.5px;width:21.4px;height:11.2px;background:#353535;border-radius:1px;font-size:8px;line-height:12.4px;color:#eeeeee;">-5.8</div>
<svg style="position:absolute;left:1051.5px;top:255px" width="52" height="100" viewBox="1051.5 255 52 100"><rect x="1061.7" y="258.8" width="7.3" height="90.6" fill="#363636"/><text x="1059.3" y="262.0" font-size="5.4" fill="#b5b5b5" text-anchor="end" font-family="Liberation Sans">0</text><rect x="1059.8" y="259.8" width="1.2" height="0.6" fill="#9a9a9a"/><text x="1059.3" y="267.9" font-size="5.4" fill="#b5b5b5" text-anchor="end" font-family="Liberation Sans">3</text><rect x="1059.8" y="265.7" width="1.2" height="0.6" fill="#9a9a9a"/><text x="1059.3" y="274.09999999999997" font-size="5.4" fill="#b5b5b5" text-anchor="end" font-family="Liberation Sans">6</text><rect x="1059.8" y="271.9" width="1.2" height="0.6" fill="#9a9a9a"/><text x="1059.3" y="279.9" font-size="5.4" fill="#b5b5b5" text-anchor="end" font-family="Liberation Sans">9</text><rect x="1059.8" y="277.7" width="1.2" height="0.6" fill="#9a9a9a"/><text x="1059.3" y="285.59999999999997" font-size="5.4" fill="#b5b5b5" text-anchor="end" font-family="Liberation Sans">12</text><rect x="1059.8" y="283.4" width="1.2" height="0.6" fill="#9a9a9a"/><text x="1059.3" y="291.5" font-size="5.4" fill="#b5b5b5" text-anchor="end" font-family="Liberation Sans">15</text><rect x="1059.8" y="289.3" width="1.2" height="0.6" fill="#9a9a9a"/><text x="1059.3" y="297.59999999999997" font-size="5.4" fill="#b5b5b5" text-anchor="end" font-family="Liberation Sans">18</text><rect x="1059.8" y="295.4" width="1.2" height="0.6" fill="#9a9a9a"/><text x="1059.3" y="303.4" font-size="5.4" fill="#b5b5b5" text-anchor="end" font-family="Liberation Sans">21</text><rect x="1059.8" y="301.2" width="1.2" height="0.6" fill="#9a9a9a"/><text x="1059.3" y="309.09999999999997" font-size="5.4" fill="#b5b5b5" text-anchor="end" font-family="Liberation Sans">24</text><rect x="1059.8" y="306.9" width="1.2" height="0.6" fill="#9a9a9a"/><text x="1059.3" y="317.2" font-size="5.4" fill="#b5b5b5" text-anchor="end" font-family="Liberation Sans">30</text><rect x="1059.8" y="315.0" width="1.2" height="0.6" fill="#9a9a9a"/><text x="1059.3" y="324.09999999999997" font-size="5.4" fill="#b5b5b5" text-anchor="end" font-family="Liberation Sans">35</text><rect x="1059.8" y="321.9" width="1.2" height="0.6" fill="#9a9a9a"/><text x="1059.3" y="330.7" font-size="5.4" fill="#b5b5b5" text-anchor="end" font-family="Liberation Sans">40</text><rect x="1059.8" y="328.5" width="1.2" height="0.6" fill="#9a9a9a"/><text x="1059.3" y="337.2" font-size="5.4" fill="#b5b5b5" text-anchor="end" font-family="Liberation Sans">45</text><rect x="1059.8" y="335.0" width="1.2" height="0.6" fill="#9a9a9a"/><text x="1059.3" y="343.9" font-size="5.4" fill="#b5b5b5" text-anchor="end" font-family="Liberation Sans">50</text><rect x="1059.8" y="341.7" width="1.2" height="0.6" fill="#9a9a9a"/><text x="1059.3" y="351.0" font-size="5.4" fill="#b5b5b5" text-anchor="end" font-family="Liberation Sans">60</text><rect x="1059.8" y="348.8" width="1.2" height="0.6" fill="#9a9a9a"/><rect x="1062.3500000000001" y="296.6" width="2.3" height="52.799999999999955" fill="#55e060"/><rect x="1065.55" y="296.6" width="2.3" height="52.799999999999955" fill="#55e060"/><rect x="1062.3500000000001" y="291" width="2.3" height="0.9" fill="#55e060"/><rect x="1065.55" y="291" width="2.3" height="0.9" fill="#55e060"/><rect x="1087.7" y="259" width="1.3" height="91" fill="#2c2c2c"/><rect x="1080.9" y="260.20000000000005" width="6.3" height="0.8" fill="#9a9a9a"/><rect x="1080.9" y="271.6" width="6.3" height="0.8" fill="#9a9a9a"/><rect x="1079.9" y="282.35" width="7.3" height="1.3" fill="#c8c8c8"/><rect x="1080.9" y="294.3" width="6.3" height="0.8" fill="#9a9a9a"/><rect x="1080.9" y="305.8" width="6.3" height="0.8" fill="#9a9a9a"/><rect x="1080.9" y="313.40000000000003" width="6.3" height="0.8" fill="#9a9a9a"/><rect x="1080.9" y="323.0" width="6.3" height="0.8" fill="#9a9a9a"/><rect x="1080.9" y="330.3" width="6.3" height="0.8" fill="#9a9a9a"/><rect x="1080.9" y="337.6" width="6.3" height="0.8" fill="#9a9a9a"/><rect x="1080.9" y="343.0" width="6.3" height="0.8" fill="#9a9a9a"/><rect x="1080.9" y="348.0" width="6.3" height="0.8" fill="#9a9a9a"/><rect x="1084.5" y="264.05" width="2.7" height="0.7" fill="#8a8a8a"/><rect x="1084.5" y="267.84999999999997" width="2.7" height="0.7" fill="#8a8a8a"/><rect x="1084.5" y="275.31666666666666" width="2.7" height="0.7" fill="#8a8a8a"/><rect x="1084.5" y="278.9833333333333" width="2.7" height="0.7" fill="#8a8a8a"/><rect x="1084.5" y="286.54999999999995" width="2.7" height="0.7" fill="#8a8a8a"/><rect x="1084.5" y="290.45" width="2.7" height="0.7" fill="#8a8a8a"/><rect x="1084.5" y="298.1833333333333" width="2.7" height="0.7" fill="#8a8a8a"/><rect x="1084.5" y="302.01666666666665" width="2.7" height="0.7" fill="#8a8a8a"/><rect x="1084.5" y="307.75" width="2.7" height="0.7" fill="#8a8a8a"/><rect x="1084.5" y="309.65" width="2.7" height="0.7" fill="#8a8a8a"/><rect x="1084.5" y="311.54999999999995" width="2.7" height="0.7" fill="#8a8a8a"/><rect x="1084.5" y="316.65" width="2.7" height="0.7" fill="#8a8a8a"/><rect x="1084.5" y="319.84999999999997" width="2.7" height="0.7" fill="#8a8a8a"/><rect x="1084.5" y="324.87499999999994" width="2.7" height="0.7" fill="#8a8a8a"/><rect x="1084.5" y="326.69999999999993" width="2.7" height="0.7" fill="#8a8a8a"/><rect x="1084.5" y="328.525" width="2.7" height="0.7" fill="#8a8a8a"/><rect x="1084.5" y="332.17499999999995" width="2.7" height="0.7" fill="#8a8a8a"/><rect x="1084.5" y="334.0" width="2.7" height="0.7" fill="#8a8a8a"/><rect x="1084.5" y="335.825" width="2.7" height="0.7" fill="#8a8a8a"/><rect x="1084.5" y="340.34999999999997" width="2.7" height="0.7" fill="#8a8a8a"/><rect x="1084.5" y="345.54999999999995" width="2.7" height="0.7" fill="#8a8a8a"/><defs><linearGradient id="cg15" x1="0" y1="0" x2="0" y2="1"><stop offset="0" stop-color="#8a8a8a"/><stop offset="0.04" stop-color="#e8e8e8"/><stop offset="0.14" stop-color="#c8c8c8"/><stop offset="0.2" stop-color="#a4a4a4"/><stop offset="0.46" stop-color="#8c8c8c"/><stop offset="0.5" stop-color="#6a6a6a"/><stop offset="0.54" stop-color="#d6d6d6"/><stop offset="0.82" stop-color="#e2e2e2"/><stop offset="0.88" stop-color="#9a9a9a"/><stop offset="1" stop-color="#777"/></linearGradient></defs><rect x="1082.5" y="293.90000000000003" width="11.6" height="23.5" rx="1" fill="#2a2a2a" opacity="0.5"/><rect x="1082.3" y="293.3" width="11.6" height="23.5" rx="1" fill="url(#cg15)"/></svg>
<div class="btn" style="left:1054.5px;top:367.3px;width:20.2px;height:10.2px;background:#646464;font-size:8.5px;line-height:12.2px;color:#f6f6f6;-webkit-text-stroke:0.3px #f6f6f6;">M</div>
<div class="btn" style="left:1078.5px;top:367.3px;width:20.2px;height:10.2px;background:#646464;font-size:8.5px;line-height:12.2px;color:#f6f6f6;-webkit-text-stroke:0.3px #f6f6f6;">S</div>
<div style="position:absolute;left:1155.1px;top:75.4px;width:1px;height:316.6px;background:#4a4a4a;"></div>
<div class="btn" style="left:1107.3px;top:81px;width:43.5px;height:10.5px;background:#2f9a3f;font-size:7.5px;line-height:12px;color:#f0fff0;">Alchemy</div>
<div style="position:absolute;left:1107.3px;top:98px;width:43.5px;height:61px;background:#4c4c4c;border:0.6px solid #484848;border-radius:3px;"></div>
<div class="fx" style="left:1107.3px;top:98.3px;width:43.5px;">Cnsl EQ</div>
<div class="fx" style="left:1107.3px;top:109.64999999999999px;width:43.5px;">Channel EQ</div>
<div class="fx" style="left:1107.3px;top:121.0px;width:43.5px;">Step FX</div>
<div class="btn" style="left:1107.3px;top:174.4px;width:43.5px;height:10.3px;background:#666666;font-size:7.6px;line-height:12.4px;color:#ececec;">Surround</div>
<div class="btn" style="left:1107.3px;top:189.4px;width:43.5px;height:11.5px;background:#393939;border-radius:1px;font-size:7.2px;line-height:12.8px;color:#d9b93a;">2: Keyboards</div>
<svg style="position:absolute;left:1103.8px;top:200px" width="52" height="32" viewBox="1103.8 200 52 32"><circle cx="1126.60" cy="203.90" r="1.05" fill="#a0a0a0"/><circle cx="1116.70" cy="208.00" r="1.05" fill="#a0a0a0"/><circle cx="1112.60" cy="217.90" r="1.05" fill="#a0a0a0"/><circle cx="1116.70" cy="227.80" r="1.05" fill="#a0a0a0"/><circle cx="1136.50" cy="227.80" r="1.05" fill="#a0a0a0"/><circle cx="1140.60" cy="217.90" r="1.05" fill="#a0a0a0"/><circle cx="1136.50" cy="208.00" r="1.05" fill="#a0a0a0"/><circle cx="1126.6" cy="217.9" r="11" fill="#474747"/><circle cx="1126.6" cy="217.9" r="9.7" fill="#363636"/><path d="M1126.6,217.9 L1116.82,215.82 A10,10 0 0 1 1127.99,208.00 Z" fill="#3f7d48" stroke="#57a560" stroke-width="0.5"/><circle cx="1121.8" cy="210.9" r="1.75" fill="#44dd55"/><rect x="1145.0" y="205.9" width="1.2" height="22.6" fill="#2a2a2a"/><circle cx="1145.6" cy="228.5" r="1.8" fill="#44dd55"/></svg>
<div class="btn" style="left:1107.0px;top:233.5px;width:21px;height:11.2px;background:#353535;border-radius:1px;font-size:8px;line-height:12.4px;color:#5cd264;">-9.3</div>
<div class="btn" style="left:1130.2px;top:233.5px;width:21.4px;height:11.2px;background:#353535;border-radius:1px;font-size:8px;line-height:12.4px;color:#eeeeee;">-3.2</div>
<svg style="position:absolute;left:1103.8px;top:255px" width="52" height="100" viewBox="1103.8 255 52 100"><rect x="1114.0" y="258.8" width="7.3" height="90.6" fill="#363636"/><text x="1111.6" y="262.0" font-size="5.4" fill="#b5b5b5" text-anchor="end" font-family="Liberation Sans">0</text><rect x="1112.1" y="259.8" width="1.2" height="0.6" fill="#9a9a9a"/><text x="1111.6" y="267.9" font-size="5.4" fill="#b5b5b5" text-anchor="end" font-family="Liberation Sans">3</text><rect x="1112.1" y="265.7" width="1.2" height="0.6" fill="#9a9a9a"/><text x="1111.6" y="274.09999999999997" font-size="5.4" fill="#b5b5b5" text-anchor="end" font-family="Liberation Sans">6</text><rect x="1112.1" y="271.9" width="1.2" height="0.6" fill="#9a9a9a"/><text x="1111.6" y="279.9" font-size="5.4" fill="#b5b5b5" text-anchor="end" font-family="Liberation Sans">9</text><rect x="1112.1" y="277.7" width="1.2" height="0.6" fill="#9a9a9a"/><text x="1111.6" y="285.59999999999997" font-size="5.4" fill="#b5b5b5" text-anchor="end" font-family="Liberation Sans">12</text><rect x="1112.1" y="283.4" width="1.2" height="0.6" fill="#9a9a9a"/><text x="1111.6" y="291.5" font-size="5.4" fill="#b5b5b5" text-anchor="end" font-family="Liberation Sans">15</text><rect x="1112.1" y="289.3" width="1.2" height="0.6" fill="#9a9a9a"/><text x="1111.6" y="297.59999999999997" font-size="5.4" fill="#b5b5b5" text-anchor="end" font-family="Liberation Sans">18</text><rect x="1112.1" y="295.4" width="1.2" height="0.6" fill="#9a9a9a"/><text x="1111.6" y="303.4" font-size="5.4" fill="#b5b5b5" text-anchor="end" font-family="Liberation Sans">21</text><rect x="1112.1" y="301.2" width="1.2" height="0.6" fill="#9a9a9a"/><text x="1111.6" y="309.09999999999997" font-size="5.4" fill="#b5b5b5" text-anchor="end" font-family="Liberation Sans">24</text><rect x="1112.1" y="306.9" width="1.2" height="0.6" fill="#9a9a9a"/><text x="1111.6" y="317.2" font-size="5.4" fill="#b5b5b5" text-anchor="end" font-family="Liberation Sans">30</text><rect x="1112.1" y="315.0" width="1.2" height="0.6" fill="#9a9a9a"/><text x="1111.6" y="324.09999999999997" font-size="5.4" fill="#b5b5b5" text-anchor="end" font-family="Liberation Sans">35</text><rect x="1112.1" y="321.9" width="1.2" height="0.6" fill="#9a9a9a"/><text x="1111.6" y="330.7" font-size="5.4" fill="#b5b5b5" text-anchor="end" font-family="Liberation Sans">40</text><rect x="1112.1" y="328.5" width="1.2" height="0.6" fill="#9a9a9a"/><text x="1111.6" y="337.2" font-size="5.4" fill="#b5b5b5" text-anchor="end" font-family="Liberation Sans">45</text><rect x="1112.1" y="335.0" width="1.2" height="0.6" fill="#9a9a9a"/><text x="1111.6" y="343.9" font-size="5.4" fill="#b5b5b5" text-anchor="end" font-family="Liberation Sans">50</text><rect x="1112.1" y="341.7" width="1.2" height="0.6" fill="#9a9a9a"/><text x="1111.6" y="351.0" font-size="5.4" fill="#b5b5b5" text-anchor="end" font-family="Liberation Sans">60</text><rect x="1112.1" y="348.8" width="1.2" height="0.6" fill="#9a9a9a"/><rect x="1114.65" y="287.3" width="2.3" height="62.099999999999966" fill="#55e060"/><rect x="1117.85" y="285" width="2.3" height="64.39999999999998" fill="#55e060"/><rect x="1114.65" y="278" width="2.3" height="1" fill="#e8c020"/><rect x="1140.0" y="259" width="1.3" height="91" fill="#2c2c2c"/><rect x="1133.2" y="260.20000000000005" width="6.3" height="0.8" fill="#9a9a9a"/><rect x="1133.2" y="271.6" width="6.3" height="0.8" fill="#9a9a9a"/><rect x="1132.2" y="282.35" width="7.3" height="1.3" fill="#c8c8c8"/><rect x="1133.2" y="294.3" width="6.3" height="0.8" fill="#9a9a9a"/><rect x="1133.2" y="305.8" width="6.3" height="0.8" fill="#9a9a9a"/><rect x="1133.2" y="313.40000000000003" width="6.3" height="0.8" fill="#9a9a9a"/><rect x="1133.2" y="323.0" width="6.3" height="0.8" fill="#9a9a9a"/><rect x="1133.2" y="330.3" width="6.3" height="0.8" fill="#9a9a9a"/><rect x="1133.2" y="337.6" width="6.3" height="0.8" fill="#9a9a9a"/><rect x="1133.2" y="343.0" width="6.3" height="0.8" fill="#9a9a9a"/><rect x="1133.2" y="348.0" width="6.3" height="0.8" fill="#9a9a9a"/><rect x="1136.8" y="264.05" width="2.7" height="0.7" fill="#8a8a8a"/><rect x="1136.8" y="267.84999999999997" width="2.7" height="0.7" fill="#8a8a8a"/><rect x="1136.8" y="275.31666666666666" width="2.7" height="0.7" fill="#8a8a8a"/><rect x="1136.8" y="278.9833333333333" width="2.7" height="0.7" fill="#8a8a8a"/><rect x="1136.8" y="286.54999999999995" width="2.7" height="0.7" fill="#8a8a8a"/><rect x="1136.8" y="290.45" width="2.7" height="0.7" fill="#8a8a8a"/><rect x="1136.8" y="298.1833333333333" width="2.7" height="0.7" fill="#8a8a8a"/><rect x="1136.8" y="302.01666666666665" width="2.7" height="0.7" fill="#8a8a8a"/><rect x="1136.8" y="307.75" width="2.7" height="0.7" fill="#8a8a8a"/><rect x="1136.8" y="309.65" width="2.7" height="0.7" fill="#8a8a8a"/><rect x="1136.8" y="311.54999999999995" width="2.7" height="0.7" fill="#8a8a8a"/><rect x="1136.8" y="316.65" width="2.7" height="0.7" fill="#8a8a8a"/><rect x="1136.8" y="319.84999999999997" width="2.7" height="0.7" fill="#8a8a8a"/><rect x="1136.8" y="324.87499999999994" width="2.7" height="0.7" fill="#8a8a8a"/><rect x="1136.8" y="326.69999999999993" width="2.7" height="0.7" fill="#8a8a8a"/><rect x="1136.8" y="328.525" width="2.7" height="0.7" fill="#8a8a8a"/><rect x="1136.8" y="332.17499999999995" width="2.7" height="0.7" fill="#8a8a8a"/><rect x="1136.8" y="334.0" width="2.7" height="0.7" fill="#8a8a8a"/><rect x="1136.8" y="335.825" width="2.7" height="0.7" fill="#8a8a8a"/><rect x="1136.8" y="340.34999999999997" width="2.7" height="0.7" fill="#8a8a8a"/><rect x="1136.8" y="345.54999999999995" width="2.7" height="0.7" fill="#8a8a8a"/><defs><linearGradient id="cg16" x1="0" y1="0" x2="0" y2="1"><stop offset="0" stop-color="#8a8a8a"/><stop offset="0.04" stop-color="#e8e8e8"/><stop offset="0.14" stop-color="#c8c8c8"/><stop offset="0.2" stop-color="#a4a4a4"/><stop offset="0.46" stop-color="#8c8c8c"/><stop offset="0.5" stop-color="#6a6a6a"/><stop offset="0.54" stop-color="#d6d6d6"/><stop offset="0.82" stop-color="#e2e2e2"/><stop offset="0.88" stop-color="#9a9a9a"/><stop offset="1" stop-color="#777"/></linearGradient></defs><rect x="1134.8" y="283.90000000000003" width="11.6" height="23.5" rx="1" fill="#2a2a2a" opacity="0.5"/><rect x="1134.6" y="283.3" width="11.6" height="23.5" rx="1" fill="url(#cg16)"/></svg>
<div class="btn" style="left:1106.8px;top:367.3px;width:20.2px;height:10.2px;background:#646464;font-size:8.5px;line-height:12.2px;color:#f6f6f6;-webkit-text-stroke:0.3px #f6f6f6;">M</div>
<div class="btn" style="left:1130.8px;top:367.3px;width:20.2px;height:10.2px;background:#646464;font-size:8.5px;line-height:12.2px;color:#f6f6f6;-webkit-text-stroke:0.3px #f6f6f6;">S</div>
<div style="position:absolute;left:1207.3999999999999px;top:75.4px;width:1px;height:316.6px;background:#4a4a4a;"></div>
<div class="btn" style="left:1159.6px;top:81px;width:43.5px;height:10.5px;background:#2f9a3f;font-size:7.5px;line-height:12px;color:#f0fff0;">Q-Sampler</div>
<div style="position:absolute;left:1159.6px;top:98px;width:43.5px;height:61px;background:#4c4c4c;border:0.6px solid #484848;border-radius:3px;"></div>
<div class="fx" style="left:1159.6px;top:98.3px;width:43.5px;">Cnsl EQ</div>
<div class="fx" style="left:1159.6px;top:109.64999999999999px;width:43.5px;">Multipr</div>
<div class="btn" style="left:1159.6px;top:174.4px;width:43.5px;height:10.3px;background:#666666;font-size:7.6px;line-height:12.4px;color:#ececec;">Surround</div>
<div class="btn" style="left:1159.6px;top:189.4px;width:43.5px;height:11.5px;background:#393939;border-radius:1px;font-size:7.2px;line-height:12.8px;color:#d9b93a;">2: Keyboards</div>
<svg style="position:absolute;left:1156.1px;top:200px" width="52" height="32" viewBox="1156.1 200 52 32"><circle cx="1178.90" cy="203.90" r="1.05" fill="#a0a0a0"/><circle cx="1169.00" cy="208.00" r="1.05" fill="#a0a0a0"/><circle cx="1164.90" cy="217.90" r="1.05" fill="#a0a0a0"/><circle cx="1169.00" cy="227.80" r="1.05" fill="#a0a0a0"/><circle cx="1188.80" cy="227.80" r="1.05" fill="#a0a0a0"/><circle cx="1192.90" cy="217.90" r="1.05" fill="#a0a0a0"/><circle cx="1188.80" cy="208.00" r="1.05" fill="#a0a0a0"/><circle cx="1178.8999999999999" cy="217.9" r="11" fill="#474747"/><circle cx="1178.8999999999999" cy="217.9" r="9.7" fill="#363636"/><path d="M1169.3,219.1 Q1178.8999999999999,216.4 1188.4999999999998,218.5 A9.7,9.7 0 0 1 1169.3,219.1 Z" fill="#3f7d48" stroke="#57a560" stroke-width="0.5"/><circle cx="1179.6999999999998" cy="224.20000000000002" r="1.75" fill="#44dd55"/><rect x="1197.3" y="205.9" width="1.2" height="22.6" fill="#2a2a2a"/><circle cx="1197.8999999999999" cy="228.5" r="1.8" fill="#44dd55"/></svg>
<div class="btn" style="left:1159.3px;top:233.5px;width:21px;height:11.2px;background:#353535;border-radius:1px;font-size:8px;line-height:12.4px;color:#5cd264;">-15.8</div>
<div class="btn" style="left:1182.5px;top:233.5px;width:21.4px;height:11.2px;background:#353535;border-radius:1px;font-size:8px;line-height:12.4px;color:#eeeeee;">-12.4</div>
<svg style="position:absolute;left:1156.1px;top:255px" width="52" height="100" viewBox="1156.1 255 52 100"><rect x="1166.3" y="258.8" width="7.3" height="90.6" fill="#363636"/><text x="1163.8999999999999" y="262.0" font-size="5.4" fill="#b5b5b5" text-anchor="end" font-family="Liberation Sans">0</text><rect x="1164.3999999999999" y="259.8" width="1.2" height="0.6" fill="#9a9a9a"/><text x="1163.8999999999999" y="267.9" font-size="5.4" fill="#b5b5b5" text-anchor="end" font-family="Liberation Sans">3</text><rect x="1164.3999999999999" y="265.7" width="1.2" height="0.6" fill="#9a9a9a"/><text x="1163.8999999999999" y="274.09999999999997" font-size="5.4" fill="#b5b5b5" text-anchor="end" font-family="Liberation Sans">6</text><rect x="1164.3999999999999" y="271.9" width="1.2" height="0.6" fill="#9a9a9a"/><text x="1163.8999999999999" y="279.9" font-size="5.4" fill="#b5b5b5" text-anchor="end" font-family="Liberation Sans">9</text><rect x="1164.3999999999999" y="277.7" width="1.2" height="0.6" fill="#9a9a9a"/><text x="1163.8999999999999" y="285.59999999999997" font-size="5.4" fill="#b5b5b5" text-anchor="end" font-family="Liberation Sans">12</text><rect x="1164.3999999999999" y="283.4" width="1.2" height="0.6" fill="#9a9a9a"/><text x="1163.8999999999999" y="291.5" font-size="5.4" fill="#b5b5b5" text-anchor="end" font-family="Liberation Sans">15</text><rect x="1164.3999999999999" y="289.3" width="1.2" height="0.6" fill="#9a9a9a"/><text x="1163.8999999999999" y="297.59999999999997" font-size="5.4" fill="#b5b5b5" text-anchor="end" font-family="Liberation Sans">18</text><rect x="1164.3999999999999" y="295.4" width="1.2" height="0.6" fill="#9a9a9a"/><text x="1163.8999999999999" y="303.4" font-size="5.4" fill="#b5b5b5" text-anchor="end" font-family="Liberation Sans">21</text><rect x="1164.3999999999999" y="301.2" width="1.2" height="0.6" fill="#9a9a9a"/><text x="1163.8999999999999" y="309.09999999999997" font-size="5.4" fill="#b5b5b5" text-anchor="end" font-family="Liberation Sans">24</text><rect x="1164.3999999999999" y="306.9" width="1.2" height="0.6" fill="#9a9a9a"/><text x="1163.8999999999999" y="317.2" font-size="5.4" fill="#b5b5b5" text-anchor="end" font-family="Liberation Sans">30</text><rect x="1164.3999999999999" y="315.0" width="1.2" height="0.6" fill="#9a9a9a"/><text x="1163.8999999999999" y="324.09999999999997" font-size="5.4" fill="#b5b5b5" text-anchor="end" font-family="Liberation Sans">35</text><rect x="1164.3999999999999" y="321.9" width="1.2" height="0.6" fill="#9a9a9a"/><text x="1163.8999999999999" y="330.7" font-size="5.4" fill="#b5b5b5" text-anchor="end" font-family="Liberation Sans">40</text><rect x="1164.3999999999999" y="328.5" width="1.2" height="0.6" fill="#9a9a9a"/><text x="1163.8999999999999" y="337.2" font-size="5.4" fill="#b5b5b5" text-anchor="end" font-family="Liberation Sans">45</text><rect x="1164.3999999999999" y="335.0" width="1.2" height="0.6" fill="#9a9a9a"/><text x="1163.8999999999999" y="343.9" font-size="5.4" fill="#b5b5b5" text-anchor="end" font-family="Liberation Sans">50</text><rect x="1164.3999999999999" y="341.7" width="1.2" height="0.6" fill="#9a9a9a"/><text x="1163.8999999999999" y="351.0" font-size="5.4" fill="#b5b5b5" text-anchor="end" font-family="Liberation Sans">60</text><rect x="1164.3999999999999" y="348.8" width="1.2" height="0.6" fill="#9a9a9a"/><rect x="1166.95" y="300" width="2.3" height="49.39999999999998" fill="#55e060"/><rect x="1170.1499999999999" y="300" width="2.3" height="49.39999999999998" fill="#55e060"/><rect x="1166.95" y="292" width="2.3" height="0.9" fill="#55e060"/><rect x="1170.1499999999999" y="292" width="2.3" height="0.9" fill="#55e060"/><rect x="1192.3" y="259" width="1.3" height="91" fill="#2c2c2c"/><rect x="1185.5" y="260.20000000000005" width="6.3" height="0.8" fill="#9a9a9a"/><rect x="1185.5" y="271.6" width="6.3" height="0.8" fill="#9a9a9a"/><rect x="1184.5" y="282.35" width="7.3" height="1.3" fill="#c8c8c8"/><rect x="1185.5" y="294.3" width="6.3" height="0.8" fill="#9a9a9a"/><rect x="1185.5" y="305.8" width="6.3" height="0.8" fill="#9a9a9a"/><rect x="1185.5" y="313.40000000000003" width="6.3" height="0.8" fill="#9a9a9a"/><rect x="1185.5" y="323.0" width="6.3" height="0.8" fill="#9a9a9a"/><rect x="1185.5" y="330.3" width="6.3" height="0.8" fill="#9a9a9a"/><rect x="1185.5" y="337.6" width="6.3" height="0.8" fill="#9a9a9a"/><rect x="1185.5" y="343.0" width="6.3" height="0.8" fill="#9a9a9a"/><rect x="1185.5" y="348.0" width="6.3" height="0.8" fill="#9a9a9a"/><rect x="1189.1" y="264.05" width="2.7" height="0.7" fill="#8a8a8a"/><rect x="1189.1" y="267.84999999999997" width="2.7" height="0.7" fill="#8a8a8a"/><rect x="1189.1" y="275.31666666666666" width="2.7" height="0.7" fill="#8a8a8a"/><rect x="1189.1" y="278.9833333333333" width="2.7" height="0.7" fill="#8a8a8a"/><rect x="1189.1" y="286.54999999999995" width="2.7" height="0.7" fill="#8a8a8a"/><rect x="1189.1" y="290.45" width="2.7" height="0.7" fill="#8a8a8a"/><rect x="1189.1" y="298.1833333333333" width="2.7" height="0.7" fill="#8a8a8a"/><rect x="1189.1" y="302.01666666666665" width="2.7" height="0.7" fill="#8a8a8a"/><rect x="1189.1" y="307.75" width="2.7" height="0.7" fill="#8a8a8a"/><rect x="1189.1" y="309.65" width="2.7" height="0.7" fill="#8a8a8a"/><rect x="1189.1" y="311.54999999999995" width="2.7" height="0.7" fill="#8a8a8a"/><rect x="1189.1" y="316.65" width="2.7" height="0.7" fill="#8a8a8a"/><rect x="1189.1" y="319.84999999999997" width="2.7" height="0.7" fill="#8a8a8a"/><rect x="1189.1" y="324.87499999999994" width="2.7" height="0.7" fill="#8a8a8a"/><rect x="1189.1" y="326.69999999999993" width="2.7" height="0.7" fill="#8a8a8a"/><rect x="1189.1" y="328.525" width="2.7" height="0.7" fill="#8a8a8a"/><rect x="1189.1" y="332.17499999999995" width="2.7" height="0.7" fill="#8a8a8a"/><rect x="1189.1" y="334.0" width="2.7" height="0.7" fill="#8a8a8a"/><rect x="1189.1" y="335.825" width="2.7" height="0.7" fill="#8a8a8a"/><rect x="1189.1" y="340.34999999999997" width="2.7" height="0.7" fill="#8a8a8a"/><rect x="1189.1" y="345.54999999999995" width="2.7" height="0.7" fill="#8a8a8a"/><defs><linearGradient id="cg17" x1="0" y1="0" x2="0" y2="1"><stop offset="0" stop-color="#8a8a8a"/><stop offset="0.04" stop-color="#e8e8e8"/><stop offset="0.14" stop-color="#c8c8c8"/><stop offset="0.2" stop-color="#a4a4a4"/><stop offset="0.46" stop-color="#8c8c8c"/><stop offset="0.5" stop-color="#6a6a6a"/><stop offset="0.54" stop-color="#d6d6d6"/><stop offset="0.82" stop-color="#e2e2e2"/><stop offset="0.88" stop-color="#9a9a9a"/><stop offset="1" stop-color="#777"/></linearGradient></defs><rect x="1187.1" y="306.6" width="11.6" height="23.5" rx="1" fill="#2a2a2a" opacity="0.5"/><rect x="1186.8999999999999" y="306" width="11.6" height="23.5" rx="1" fill="url(#cg17)"/></svg>
<div class="btn" style="left:1159.1px;top:367.3px;width:20.2px;height:10.2px;background:#646464;font-size:8.5px;line-height:12.2px;color:#f6f6f6;-webkit-text-stroke:0.3px #f6f6f6;">M</div>
<div class="btn" style="left:1183.1px;top:367.3px;width:20.2px;height:10.2px;background:#646464;font-size:8.5px;line-height:12.2px;color:#f6f6f6;-webkit-text-stroke:0.3px #f6f6f6;">S</div>
<div style="position:absolute;left:1259.7px;top:75.4px;width:1px;height:316.6px;background:#4a4a4a;"></div>
<div class="btn" style="left:1211.9px;top:81px;width:43.5px;height:10.5px;background:#2f9a3f;font-size:7.5px;line-height:12px;color:#f0fff0;">RetroSyn</div>
<div style="position:absolute;left:1211.9px;top:98px;width:43.5px;height:61px;background:#4c4c4c;border:0.6px solid #484848;border-radius:3px;"></div>
<div class="fx" style="left:1211.9px;top:98.3px;width:43.5px;">Cnsl EQ</div>
<div class="fx" style="left:1211.9px;top:109.64999999999999px;width:43.5px;">Ensemble</div>
<div class="fx" style="left:1211.9px;top:121.0px;width:43.5px;">St-Delay</div>
<div class="btn" style="left:1211.9px;top:174.4px;width:43.5px;height:10.3px;background:#666666;font-size:7.6px;line-height:12.4px;color:#ececec;">Surround</div>
<div class="btn" style="left:1211.9px;top:189.4px;width:43.5px;height:11.5px;background:#393939;border-radius:1px;font-size:7.2px;line-height:12.8px;color:#d9b93a;">2: Keyboards</div>
<svg style="position:absolute;left:1208.4px;top:200px" width="52" height="32" viewBox="1208.4 200 52 32"><circle cx="1231.20" cy="203.90" r="1.05" fill="#a0a0a0"/><circle cx="1221.30" cy="208.00" r="1.05" fill="#a0a0a0"/><circle cx="1217.20" cy="217.90" r="1.05" fill="#a0a0a0"/><circle cx="1221.30" cy="227.80" r="1.05" fill="#a0a0a0"/><circle cx="1241.10" cy="227.80" r="1.05" fill="#a0a0a0"/><circle cx="1245.20" cy="217.90" r="1.05" fill="#a0a0a0"/><circle cx="1241.10" cy="208.00" r="1.05" fill="#a0a0a0"/><circle cx="1231.2" cy="217.9" r="11" fill="#474747"/><circle cx="1231.2" cy="217.9" r="9.7" fill="#363636"/><path d="M1231.2,217.9 L1223.99,210.69 A10.2,10.2 0 0 1 1238.41,210.69 Z" fill="#3f7d48" stroke="#57a560" stroke-width="0.5"/><circle cx="1230.9" cy="208.5" r="1.75" fill="#44dd55"/><rect x="1249.6000000000001" y="205.9" width="1.2" height="22.6" fill="#2a2a2a"/><circle cx="1250.2" cy="228.5" r="1.8" fill="#44dd55"/></svg>
<div class="btn" style="left:1211.6000000000001px;top:233.5px;width:21px;height:11.2px;background:#353535;border-radius:1px;font-size:8px;line-height:12.4px;color:#5cd264;">-14.8</div>
<div class="btn" style="left:1234.8000000000002px;top:233.5px;width:21.4px;height:11.2px;background:#353535;border-radius:1px;font-size:8px;line-height:12.4px;color:#eeeeee;">-8.2</div>
<svg style="position:absolute;left:1208.4px;top:255px" width="52" height="100" viewBox="1208.4 255 52 100"><rect x="1218.6000000000001" y="258.8" width="7.3" height="90.6" fill="#363636"/><text x="1216.2" y="262.0" font-size="5.4" fill="#b5b5b5" text-anchor="end" font-family="Liberation Sans">0</text><rect x="1216.7" y="259.8" width="1.2" height="0.6" fill="#9a9a9a"/><text x="1216.2" y="267.9" font-size="5.4" fill="#b5b5b5" text-anchor="end" font-family="Liberation Sans">3</text><rect x="1216.7" y="265.7" width="1.2" height="0.6" fill="#9a9a9a"/><text x="1216.2" y="274.09999999999997" font-size="5.4" fill="#b5b5b5" text-anchor="end" font-family="Liberation Sans">6</text><rect x="1216.7" y="271.9" width="1.2" height="0.6" fill="#9a9a9a"/><text x="1216.2" y="279.9" font-size="5.4" fill="#b5b5b5" text-anchor="end" font-family="Liberation Sans">9</text><rect x="1216.7" y="277.7" width="1.2" height="0.6" fill="#9a9a9a"/><text x="1216.2" y="285.59999999999997" font-size="5.4" fill="#b5b5b5" text-anchor="end" font-family="Liberation Sans">12</text><rect x="1216.7" y="283.4" width="1.2" height="0.6" fill="#9a9a9a"/><text x="1216.2" y="291.5" font-size="5.4" fill="#b5b5b5" text-anchor="end" font-family="Liberation Sans">15</text><rect x="1216.7" y="289.3" width="1.2" height="0.6" fill="#9a9a9a"/><text x="1216.2" y="297.59999999999997" font-size="5.4" fill="#b5b5b5" text-anchor="end" font-family="Liberation Sans">18</text><rect x="1216.7" y="295.4" width="1.2" height="0.6" fill="#9a9a9a"/><text x="1216.2" y="303.4" font-size="5.4" fill="#b5b5b5" text-anchor="end" font-family="Liberation Sans">21</text><rect x="1216.7" y="301.2" width="1.2" height="0.6" fill="#9a9a9a"/><text x="1216.2" y="309.09999999999997" font-size="5.4" fill="#b5b5b5" text-anchor="end" font-family="Liberation Sans">24</text><rect x="1216.7" y="306.9" width="1.2" height="0.6" fill="#9a9a9a"/><text x="1216.2" y="317.2" font-size="5.4" fill="#b5b5b5" text-anchor="end" font-family="Liberation Sans">30</text><rect x="1216.7" y="315.0" width="1.2" height="0.6" fill="#9a9a9a"/><text x="1216.2" y="324.09999999999997" font-size="5.4" fill="#b5b5b5" text-anchor="end" font-family="Liberation Sans">35</text><rect x="1216.7" y="321.9" width="1.2" height="0.6" fill="#9a9a9a"/><text x="1216.2" y="330.7" font-size="5.4" fill="#b5b5b5" text-anchor="end" font-family="Liberation Sans">40</text><rect x="1216.7" y="328.5" width="1.2" height="0.6" fill="#9a9a9a"/><text x="1216.2" y="337.2" font-size="5.4" fill="#b5b5b5" text-anchor="end" font-family="Liberation Sans">45</text><rect x="1216.7" y="335.0" width="1.2" height="0.6" fill="#9a9a9a"/><text x="1216.2" y="343.9" font-size="5.4" fill="#b5b5b5" text-anchor="end" font-family="Liberation Sans">50</text><rect x="1216.7" y="341.7" width="1.2" height="0.6" fill="#9a9a9a"/><text x="1216.2" y="351.0" font-size="5.4" fill="#b5b5b5" text-anchor="end" font-family="Liberation Sans">60</text><rect x="1216.7" y="348.8" width="1.2" height="0.6" fill="#9a9a9a"/><rect x="1219.2500000000002" y="289" width="2.3" height="60.39999999999998" fill="#55e060"/><rect x="1222.45" y="289" width="2.3" height="60.39999999999998" fill="#55e060"/><rect x="1244.6000000000001" y="259" width="1.3" height="91" fill="#2c2c2c"/><rect x="1237.8000000000002" y="260.20000000000005" width="6.3" height="0.8" fill="#9a9a9a"/><rect x="1237.8000000000002" y="271.6" width="6.3" height="0.8" fill="#9a9a9a"/><rect x="1236.8000000000002" y="282.35" width="7.3" height="1.3" fill="#c8c8c8"/><rect x="1237.8000000000002" y="294.3" width="6.3" height="0.8" fill="#9a9a9a"/><rect x="1237.8000000000002" y="305.8" width="6.3" height="0.8" fill="#9a9a9a"/><rect x="1237.8000000000002" y="313.40000000000003" width="6.3" height="0.8" fill="#9a9a9a"/><rect x="1237.8000000000002" y="323.0" width="6.3" height="0.8" fill="#9a9a9a"/><rect x="1237.8000000000002" y="330.3" width="6.3" height="0.8" fill="#9a9a9a"/><rect x="1237.8000000000002" y="337.6" width="6.3" height="0.8" fill="#9a9a9a"/><rect x="1237.8000000000002" y="343.0" width="6.3" height="0.8" fill="#9a9a9a"/><rect x="1237.8000000000002" y="348.0" width="6.3" height="0.8" fill="#9a9a9a"/><rect x="1241.4" y="264.05" width="2.7" height="0.7" fill="#8a8a8a"/><rect x="1241.4" y="267.84999999999997" width="2.7" height="0.7" fill="#8a8a8a"/><rect x="1241.4" y="275.31666666666666" width="2.7" height="0.7" fill="#8a8a8a"/><rect x="1241.4" y="278.9833333333333" width="2.7" height="0.7" fill="#8a8a8a"/><rect x="1241.4" y="286.54999999999995" width="2.7" height="0.7" fill="#8a8a8a"/><rect x="1241.4" y="290.45" width="2.7" height="0.7" fill="#8a8a8a"/><rect x="1241.4" y="298.1833333333333" width="2.7" height="0.7" fill="#8a8a8a"/><rect x="1241.4" y="302.01666666666665" width="2.7" height="0.7" fill="#8a8a8a"/><rect x="1241.4" y="307.75" width="2.7" height="0.7" fill="#8a8a8a"/><rect x="1241.4" y="309.65" width="2.7" height="0.7" fill="#8a8a8a"/><rect x="1241.4" y="311.54999999999995" width="2.7" height="0.7" fill="#8a8a8a"/><rect x="1241.4" y="316.65" width="2.7" height="0.7" fill="#8a8a8a"/><rect x="1241.4" y="319.84999999999997" width="2.7" height="0.7" fill="#8a8a8a"/><rect x="1241.4" y="324.87499999999994" width="2.7" height="0.7" fill="#8a8a8a"/><rect x="1241.4" y="326.69999999999993" width="2.7" height="0.7" fill="#8a8a8a"/><rect x="1241.4" y="328.525" width="2.7" height="0.7" fill="#8a8a8a"/><rect x="1241.4" y="332.17499999999995" width="2.7" height="0.7" fill="#8a8a8a"/><rect x="1241.4" y="334.0" width="2.7" height="0.7" fill="#8a8a8a"/><rect x="1241.4" y="335.825" width="2.7" height="0.7" fill="#8a8a8a"/><rect x="1241.4" y="340.34999999999997" width="2.7" height="0.7" fill="#8a8a8a"/><rect x="1241.4" y="345.54999999999995" width="2.7" height="0.7" fill="#8a8a8a"/><defs><linearGradient id="cg18" x1="0" y1="0" x2="0" y2="1"><stop offset="0" stop-color="#8a8a8a"/><stop offset="0.04" stop-color="#e8e8e8"/><stop offset="0.14" stop-color="#c8c8c8"/><stop offset="0.2" stop-color="#a4a4a4"/><stop offset="0.46" stop-color="#8c8c8c"/><stop offset="0.5" stop-color="#6a6a6a"/><stop offset="0.54" stop-color="#d6d6d6"/><stop offset="0.82" stop-color="#e2e2e2"/><stop offset="0.88" stop-color="#9a9a9a"/><stop offset="1" stop-color="#777"/></linearGradient></defs><rect x="1239.4" y="298.90000000000003" width="11.6" height="23.5" rx="1" fill="#2a2a2a" opacity="0.5"/><rect x="1239.2" y="298.3" width="11.6" height="23.5" rx="1" fill="url(#cg18)"/></svg>
<div class="btn" style="left:1211.4px;top:367.3px;width:20.2px;height:10.2px;background:#646464;font-size:8.5px;line-height:12.2px;color:#f6f6f6;-webkit-text-stroke:0.3px #f6f6f6;">M</div>
<div class="btn" style="left:1235.4px;top:367.3px;width:20.2px;height:10.2px;background:#646464;font-size:8.5px;line-height:12.2px;color:#f6f6f6;-webkit-text-stroke:0.3px #f6f6f6;">S</div>
<div style="position:absolute;left:319.3px;top:381.3px;width:627.5999999999999px;height:10.7px;background:#525252;"></div>
<div style="position:absolute;left:319.3px;top:75px;width:628.0999999999999px;height:306.5px;border-bottom:0.8px solid #464646;border-left:0.8px solid #464646;border-radius:0 0 0 5px;"></div>
<svg style="position:absolute;left:308px;top:380px" width="8" height="9" viewBox="0 0 8 9"><path d="M2.6 1.6 L5.4 4.5 L2.6 7.4" fill="none" stroke="#e0e0e0" stroke-width="1.2"/></svg>
<div style="position:absolute;left:267.0px;top:392px;width:52.3px;height:21.4px;background:#17a3d6;border-right:0.8px solid rgba(0,0,0,0.15);color:#f4f8ff;font-size:7.9px;line-height:8.8px;text-align:center;padding-top:3.4px;white-space:nowrap;-webkit-text-stroke:0.1px #f4f8ff;color:#eef3ff;">Vocal<br>Textures</div>
<div style="position:absolute;left:319.3px;top:392px;width:52.3px;height:21.4px;background:#2893dc;border-right:0.8px solid rgba(0,0,0,0.15);color:#f4f8ff;font-size:7.9px;line-height:8.8px;text-align:center;padding-top:3.4px;white-space:nowrap;-webkit-text-stroke:0.1px #f4f8ff;color:#eef3ff;">Distant<br>Vocals</div>
<div style="position:absolute;left:371.6px;top:392px;width:52.3px;height:21.4px;background:#3782e2;border-right:0.8px solid rgba(0,0,0,0.15);color:#f4f8ff;font-size:7.9px;line-height:8.8px;text-align:center;padding-top:3.4px;white-space:nowrap;-webkit-text-stroke:0.1px #f4f8ff;color:#eef3ff;">Near<br>Vocals</div>
<div style="position:absolute;left:423.9px;top:392px;width:52.3px;height:21.4px;background:#3e67df;border-right:0.8px solid rgba(0,0,0,0.15);color:#f4f8ff;font-size:7.9px;line-height:8.8px;text-align:center;padding-top:3.4px;white-space:nowrap;-webkit-text-stroke:0.1px #f4f8ff;color:#eef3ff;">Distant<br>Harmonies</div>
<div style="position:absolute;left:476.2px;top:392px;width:52.3px;height:21.4px;background:#4a40dc;border-right:0.8px solid rgba(0,0,0,0.15);color:#f4f8ff;font-size:7.9px;line-height:8.8px;text-align:center;padding-top:3.4px;white-space:nowrap;-webkit-text-stroke:0.1px #f4f8ff;color:#eef3ff;">Main<br>Vocal</div>
<div style="position:absolute;left:528.5px;top:392px;width:52.3px;height:21.4px;background:#3e66dd;border-right:0.8px solid rgba(0,0,0,0.15);color:#f4f8ff;font-size:7.9px;line-height:8.8px;text-align:center;padding-top:3.4px;white-space:nowrap;-webkit-text-stroke:0.1px #f4f8ff;color:#eef3ff;">Backing<br>Vocal</div>
<div style="position:absolute;left:580.8px;top:392px;width:52.3px;height:21.4px;background:#3a80de;border-right:0.8px solid rgba(0,0,0,0.15);color:#f4f8ff;font-size:7.9px;line-height:8.8px;text-align:center;padding-top:3.4px;white-space:nowrap;-webkit-text-stroke:0.1px #f4f8ff;color:#eef3ff;">Harmony<br>Vocal</div>
<div style="position:absolute;left:633.0999999999999px;top:392px;width:52.3px;height:21.4px;background:#2a93d8;border-right:0.8px solid rgba(0,0,0,0.15);color:#f4f8ff;font-size:7.9px;line-height:8.8px;text-align:center;padding-top:3.4px;white-space:nowrap;-webkit-text-stroke:0.1px #f4f8ff;color:#eef3ff;">Choir</div>
<div style="position:absolute;left:685.4px;top:392px;width:52.3px;height:21.4px;background:#199fd2;border-right:0.8px solid rgba(0,0,0,0.15);color:#f4f8ff;font-size:7.9px;line-height:8.8px;text-align:center;padding-top:3.4px;white-space:nowrap;-webkit-text-stroke:0.1px #f4f8ff;color:#eef3ff;">Room<br>Mic</div>
<div style="position:absolute;left:737.7px;top:392px;width:52.3px;height:21.4px;background:#17c6c9;border-right:0.8px solid rgba(0,0,0,0.15);color:#f4f8ff;font-size:7.9px;line-height:8.8px;text-align:center;padding-top:3.4px;white-space:nowrap;-webkit-text-stroke:0.1px #f4f8ff;color:#eef3ff;">Top<br>Line</div>
<div style="position:absolute;left:790.0px;top:392px;width:52.3px;height:21.4px;background:#199fd2;border-right:0.8px solid rgba(0,0,0,0.15);color:#f4f8ff;font-size:7.9px;line-height:8.8px;text-align:center;padding-top:3.4px;white-space:nowrap;-webkit-text-stroke:0.1px #f4f8ff;color:#eef3ff;">Tenor</div>
<div style="position:absolute;left:842.3px;top:392px;width:52.3px;height:21.4px;background:#2a93d8;border-right:0.8px solid rgba(0,0,0,0.15);color:#f4f8ff;font-size:7.9px;line-height:8.8px;text-align:center;padding-top:3.4px;white-space:nowrap;-webkit-text-stroke:0.1px #f4f8ff;color:#eef3ff;">Vocoder</div>
<div style="position:absolute;left:894.5999999999999px;top:392px;width:52.3px;height:21.4px;background:#3a80de;border-right:0.8px solid rgba(0,0,0,0.15);color:#f4f8ff;font-size:7.9px;line-height:8.8px;text-align:center;padding-top:3.4px;white-space:nowrap;-webkit-text-stroke:0.1px #f4f8ff;color:#eef3ff;">Sample</div>
<div style="position:absolute;left:946.9px;top:392px;width:52.3px;height:21.4px;background:#3e66dd;border-right:0.8px solid rgba(0,0,0,0.15);color:#f4f8ff;font-size:7.9px;line-height:8.8px;text-align:center;padding-top:3.4px;white-space:nowrap;-webkit-text-stroke:0.1px #f4f8ff;color:#eef3ff;">Dark Synth<br>Pad</div>
<div style="position:absolute;left:999.1999999999999px;top:392px;width:52.3px;height:21.4px;background:#4a40dc;border-right:0.8px solid rgba(0,0,0,0.15);color:#f4f8ff;font-size:7.9px;line-height:8.8px;text-align:center;padding-top:3.4px;white-space:nowrap;-webkit-text-stroke:0.1px #f4f8ff;color:#eef3ff;">Custom Soft<br>Piano</div>
<div style="position:absolute;left:1051.5px;top:392px;width:52.3px;height:21.4px;background:#3e66dd;border-right:0.8px solid rgba(0,0,0,0.15);color:#f4f8ff;font-size:7.9px;line-height:8.8px;text-align:center;padding-top:3.4px;white-space:nowrap;-webkit-text-stroke:0.1px #f4f8ff;color:#eef3ff;">Night of<br>Avalon</div>
<div style="position:absolute;left:1103.8px;top:392px;width:52.3px;height:21.4px;background:#3a80de;border-right:0.8px solid rgba(0,0,0,0.15);color:#f4f8ff;font-size:7.9px;line-height:8.8px;text-align:center;padding-top:3.4px;white-space:nowrap;-webkit-text-stroke:0.1px #f4f8ff;color:#eef3ff;">Lost<br>Reverse</div>
<div style="position:absolute;left:1156.1px;top:392px;width:52.3px;height:21.4px;background:#2a93d8;border-right:0.8px solid rgba(0,0,0,0.15);color:#f4f8ff;font-size:7.9px;line-height:8.8px;text-align:center;padding-top:3.4px;white-space:nowrap;-webkit-text-stroke:0.1px #f4f8ff;color:#eef3ff;">String<br>Vox</div>
<div style="position:absolute;left:1208.4px;top:392px;width:52.3px;height:21.4px;background:#17a3d6;border-right:0.8px solid rgba(0,0,0,0.15);color:#f4f8ff;font-size:7.9px;line-height:8.8px;text-align:center;padding-top:3.4px;white-space:nowrap;-webkit-text-stroke:0.1px #f4f8ff;color:#eef3ff;">Moonlight<br>Ark</div>
</div></body></html>
